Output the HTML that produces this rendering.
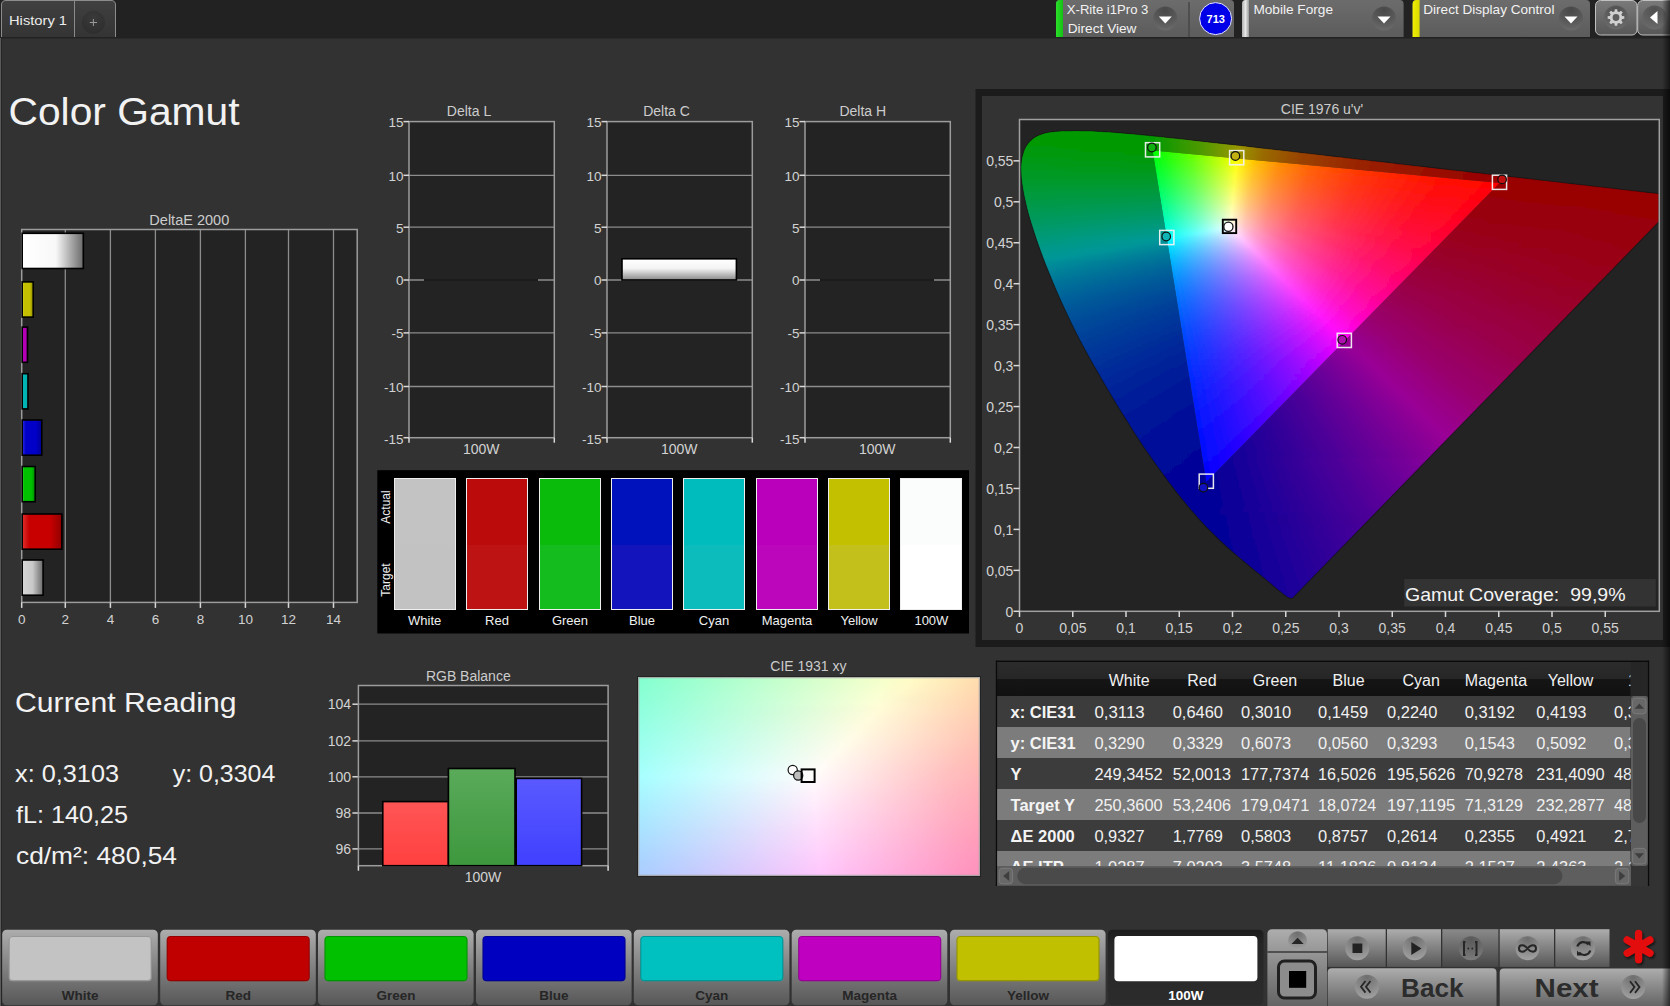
<!DOCTYPE html>
<html><head><meta charset="utf-8"><title>Color Gamut</title>
<style>html,body{margin:0;padding:0;background:#333;overflow:hidden}svg{display:block;font-family:"Liberation Sans", sans-serif}</style></head>
<body><svg width="1670" height="1006" viewBox="0 0 1670 1006">
<defs><linearGradient id="tabg" x1="0" y1="0" x2="0" y2="1"><stop offset="0" stop-color="#404040"/><stop offset="1" stop-color="#343434"/></linearGradient><radialGradient id="plusg" cx="0.5" cy="0.3" r="0.7"><stop offset="0" stop-color="#3a3a3a"/><stop offset="1" stop-color="#2e2e2e"/></radialGradient><linearGradient id="boxg" x1="0" y1="0" x2="0" y2="1"><stop offset="0" stop-color="#6c6c6c"/><stop offset="1" stop-color="#5c5c5c"/></linearGradient><radialGradient id="ddg" cx="0.5" cy="0.15" r="0.9"><stop offset="0" stop-color="#484848"/><stop offset="0.6" stop-color="#5a5a5a"/><stop offset="1" stop-color="#6e6e6e"/></radialGradient><linearGradient id="gbar" x1="0" y1="0" x2="1" y2="0"><stop offset="0" stop-color="#2be02b"/><stop offset="1" stop-color="#14c014"/></linearGradient><linearGradient id="wbar" x1="0" y1="0" x2="1" y2="0"><stop offset="0" stop-color="#b0b0b0"/><stop offset="0.5" stop-color="#e8e8e8"/><stop offset="1" stop-color="#9a9a9a"/></linearGradient><linearGradient id="ybar" x1="0" y1="0" x2="1" y2="0"><stop offset="0" stop-color="#f0f000"/><stop offset="1" stop-color="#d8d800"/></linearGradient><linearGradient id="btng" x1="0" y1="0" x2="0" y2="1"><stop offset="0" stop-color="#7a7a7a"/><stop offset="1" stop-color="#575757"/></linearGradient><radialGradient id="btnc" cx="0.5" cy="0.2" r="0.8"><stop offset="0" stop-color="#505050"/><stop offset="1" stop-color="#6a6a6a"/></radialGradient><linearGradient id="bw" x1="0" y1="0" x2="1" y2="0"><stop offset="0" stop-color="#ffffff"/><stop offset="0.55" stop-color="#f8f8f8"/><stop offset="1" stop-color="#6a6a6a"/></linearGradient><linearGradient id="bw2" x1="0" y1="0" x2="1" y2="0"><stop offset="0" stop-color="#d8d8d8"/><stop offset="0.5" stop-color="#c8c8c8"/><stop offset="1" stop-color="#6a6a6a"/></linearGradient><linearGradient id="by" x1="0" y1="0" x2="1" y2="0"><stop offset="0" stop-color="#d8d830"/><stop offset="0.18" stop-color="#c4c000"/><stop offset="0.7" stop-color="#c4c000"/><stop offset="1" stop-color="#8a8800"/></linearGradient><linearGradient id="bm" x1="0" y1="0" x2="1" y2="0"><stop offset="0" stop-color="#c840c8"/><stop offset="0.18" stop-color="#b400b4"/><stop offset="0.7" stop-color="#b400b4"/><stop offset="1" stop-color="#800080"/></linearGradient><linearGradient id="bc" x1="0" y1="0" x2="1" y2="0"><stop offset="0" stop-color="#40caca"/><stop offset="0.18" stop-color="#00b4b4"/><stop offset="0.7" stop-color="#00b4b4"/><stop offset="1" stop-color="#008a8a"/></linearGradient><linearGradient id="bb" x1="0" y1="0" x2="1" y2="0"><stop offset="0" stop-color="#3030e0"/><stop offset="0.18" stop-color="#0000c8"/><stop offset="0.7" stop-color="#0000c8"/><stop offset="1" stop-color="#000090"/></linearGradient><linearGradient id="bg" x1="0" y1="0" x2="1" y2="0"><stop offset="0" stop-color="#30d830"/><stop offset="0.18" stop-color="#00c000"/><stop offset="0.7" stop-color="#00c000"/><stop offset="1" stop-color="#008c00"/></linearGradient><linearGradient id="br" x1="0" y1="0" x2="1" y2="0"><stop offset="0" stop-color="#e03030"/><stop offset="0.18" stop-color="#c80000"/><stop offset="0.7" stop-color="#c80000"/><stop offset="1" stop-color="#900000"/></linearGradient><linearGradient id="dcb" x1="0" y1="0" x2="0" y2="1"><stop offset="0" stop-color="#ffffff"/><stop offset="0.45" stop-color="#f4f4f4"/><stop offset="1" stop-color="#8a8a8a"/></linearGradient><linearGradient id="rb" x1="0" y1="0" x2="0" y2="1"><stop offset="0" stop-color="#ff5555"/><stop offset="1" stop-color="#ff4040"/></linearGradient><linearGradient id="gb" x1="0" y1="0" x2="0" y2="1"><stop offset="0" stop-color="#5aaa5a"/><stop offset="1" stop-color="#3d983d"/></linearGradient><linearGradient id="bb2" x1="0" y1="0" x2="0" y2="1"><stop offset="0" stop-color="#5a5aff"/><stop offset="1" stop-color="#4040ff"/></linearGradient><clipPath id="horse"><path d="M1293.0,597.7 L1292.8,597.9 L1292.5,598.0 L1292.3,598.1 L1292.0,598.2 L1291.7,598.3 L1291.3,598.3 L1290.9,598.3 L1290.6,598.3 L1290.2,598.2 L1289.9,598.1 L1289.4,598.0 L1289.0,597.8 L1288.5,597.7 L1288.1,597.5 L1287.7,597.2 L1287.2,597.0 L1286.8,596.7 L1286.3,596.4 L1285.9,596.0 L1285.3,595.6 L1284.8,595.2 L1284.2,594.8 L1283.6,594.4 L1283.0,593.9 L1282.3,593.3 L1281.6,592.8 L1280.8,592.1 L1280.0,591.5 L1279.1,590.8 L1278.2,590.0 L1277.2,589.2 L1276.2,588.4 L1275.2,587.5 L1274.1,586.6 L1273.0,585.7 L1271.9,584.7 L1270.7,583.7 L1269.4,582.6 L1268.1,581.5 L1266.8,580.4 L1265.4,579.3 L1264.0,578.1 L1262.5,576.8 L1260.9,575.5 L1259.2,574.1 L1257.4,572.7 L1255.5,571.2 L1253.6,569.6 L1251.6,568.0 L1249.6,566.3 L1247.5,564.6 L1245.4,562.8 L1243.2,561.0 L1240.9,559.1 L1238.5,557.1 L1236.1,555.0 L1233.5,552.7 L1230.9,550.4 L1228.1,548.0 L1225.3,545.5 L1222.4,542.8 L1219.4,540.0 L1216.4,537.0 L1213.3,534.0 L1210.1,530.8 L1206.7,527.5 L1203.2,523.7 L1199.4,519.6 L1195.5,515.1 L1191.3,510.3 L1186.9,505.1 L1182.4,499.6 L1177.7,493.8 L1172.9,487.6 L1168.0,481.2 L1163.0,474.3 L1157.8,467.2 L1152.5,459.7 L1147.1,452.0 L1141.6,443.9 L1136.1,435.5 L1130.5,426.7 L1124.8,417.6 L1119.0,408.4 L1113.3,398.9 L1107.7,389.5 L1102.1,379.9 L1096.4,370.1 L1090.8,360.2 L1085.3,350.2 L1080.0,340.4 L1075.0,330.6 L1070.3,321.0 L1065.7,311.3 L1061.3,301.7 L1057.1,292.2 L1053.2,283.0 L1049.5,274.1 L1046.0,265.5 L1042.8,257.1 L1039.8,249.0 L1037.0,241.1 L1034.5,233.6 L1032.2,226.5 L1030.1,219.8 L1028.3,213.4 L1026.7,207.4 L1025.4,201.6 L1024.2,196.2 L1023.2,191.1 L1022.4,186.3 L1021.8,181.8 L1021.3,177.6 L1021.1,173.7 L1021.0,170.0 L1021.0,166.5 L1021.2,163.1 L1021.6,160.0 L1022.1,157.1 L1022.8,154.4 L1023.5,151.9 L1024.4,149.5 L1025.5,147.3 L1026.7,145.3 L1028.0,143.4 L1029.4,141.7 L1031.0,140.2 L1032.6,138.8 L1034.3,137.5 L1036.1,136.4 L1038.0,135.5 L1040.0,134.7 L1042.0,133.9 L1044.1,133.3 L1046.3,132.7 L1048.5,132.3 L1050.8,132.0 L1053.1,131.7 L1055.5,131.5 L1057.8,131.2 L1060.3,131.1 L1062.7,130.9 L1065.2,130.9 L1067.8,130.8 L1070.3,130.8 L1072.8,130.7 L1075.3,130.7 L1077.8,130.7 L1080.4,130.8 L1082.9,130.8 L1085.4,130.9 L1088.0,130.9 L1090.6,131.0 L1093.2,131.1 L1095.8,131.2 L1098.5,131.4 L1101.2,131.5 L1103.9,131.7 L1106.6,131.9 L1109.4,132.0 L1112.2,132.2 L1115.1,132.5 L1118.0,132.7 L1121.0,132.9 L1123.9,133.2 L1127.0,133.4 L1130.0,133.7 L1133.1,134.0 L1136.3,134.3 L1139.5,134.6 L1142.8,134.9 L1146.1,135.2 L1149.5,135.6 L1152.9,135.9 L1156.4,136.3 L1159.9,136.6 L1163.5,137.0 L1167.2,137.4 L1171.0,137.8 L1174.8,138.2 L1178.6,138.6 L1182.6,139.1 L1186.6,139.5 L1190.6,140.0 L1194.7,140.4 L1198.9,140.9 L1203.2,141.4 L1207.6,141.9 L1212.0,142.4 L1216.5,142.9 L1221.1,143.4 L1225.7,143.9 L1230.5,144.4 L1235.3,145.0 L1240.1,145.5 L1245.1,146.1 L1250.1,146.7 L1255.2,147.3 L1260.4,147.9 L1265.7,148.5 L1271.0,149.1 L1276.5,149.7 L1282.0,150.3 L1287.5,151.0 L1293.2,151.6 L1298.9,152.3 L1304.7,153.0 L1310.6,153.6 L1316.5,154.3 L1322.5,155.0 L1328.6,155.7 L1334.7,156.4 L1340.9,157.1 L1347.1,157.8 L1353.4,158.6 L1359.8,159.3 L1366.2,160.0 L1372.6,160.8 L1379.0,161.5 L1385.5,162.2 L1392.0,163.0 L1398.6,163.8 L1405.1,164.5 L1411.5,165.3 L1417.9,166.0 L1424.2,166.7 L1430.5,167.4 L1436.7,168.2 L1443.0,168.9 L1449.2,169.6 L1455.4,170.3 L1461.6,171.0 L1467.8,171.7 L1474.0,172.4 L1480.0,173.1 L1485.9,173.8 L1491.7,174.5 L1497.4,175.1 L1503.0,175.7 L1508.5,176.4 L1513.9,177.0 L1519.2,177.6 L1524.3,178.2 L1529.4,178.8 L1534.4,179.3 L1539.2,179.9 L1544.0,180.5 L1548.6,181.0 L1553.0,181.5 L1557.4,182.0 L1561.6,182.5 L1565.7,183.0 L1569.7,183.4 L1573.6,183.9 L1577.3,184.3 L1581.0,184.7 L1584.5,185.1 L1587.9,185.5 L1591.3,185.9 L1594.5,186.3 L1597.7,186.6 L1600.7,187.0 L1603.7,187.3 L1606.6,187.6 L1609.4,188.0 L1612.2,188.3 L1614.9,188.6 L1617.5,188.9 L1620.1,189.2 L1622.6,189.5 L1625.1,189.8 L1627.5,190.1 L1629.8,190.3 L1632.1,190.6 L1634.3,190.8 L1636.4,191.1 L1638.4,191.3 L1640.4,191.6 L1642.3,191.8 L1644.2,192.0 L1646.0,192.2 L1647.7,192.4 L1649.3,192.6 L1650.9,192.7 L1652.4,192.9 L1653.7,193.1 L1654.9,193.2 L1656.2,193.3 L1657.5,193.5 L1659.0,193.7 L1660.7,193.9 L1662.6,194.1 L1664.5,194.3 L1666.4,194.5 L1668.3,194.7 L1670.1,194.9 L1671.8,195.1 L1673.6,195.4 L1675.3,195.6 L1677.0,195.7 L1678.4,195.9 L1679.7,196.1 L1680.7,196.2 L1681.5,196.3 L1682.2,196.3 L1682.7,196.4 L1683.1,196.4 L1683.4,196.5 Z"/></clipPath><clipPath id="tri"><path d="M1499.50,183.06 L1152.62,150.61 L1206.34,481.98 Z"/></clipPath><clipPath id="outside"><path clip-rule="evenodd" d="M1293.0,597.7 L1292.8,597.9 L1292.5,598.0 L1292.3,598.1 L1292.0,598.2 L1291.7,598.3 L1291.3,598.3 L1290.9,598.3 L1290.6,598.3 L1290.2,598.2 L1289.9,598.1 L1289.4,598.0 L1289.0,597.8 L1288.5,597.7 L1288.1,597.5 L1287.7,597.2 L1287.2,597.0 L1286.8,596.7 L1286.3,596.4 L1285.9,596.0 L1285.3,595.6 L1284.8,595.2 L1284.2,594.8 L1283.6,594.4 L1283.0,593.9 L1282.3,593.3 L1281.6,592.8 L1280.8,592.1 L1280.0,591.5 L1279.1,590.8 L1278.2,590.0 L1277.2,589.2 L1276.2,588.4 L1275.2,587.5 L1274.1,586.6 L1273.0,585.7 L1271.9,584.7 L1270.7,583.7 L1269.4,582.6 L1268.1,581.5 L1266.8,580.4 L1265.4,579.3 L1264.0,578.1 L1262.5,576.8 L1260.9,575.5 L1259.2,574.1 L1257.4,572.7 L1255.5,571.2 L1253.6,569.6 L1251.6,568.0 L1249.6,566.3 L1247.5,564.6 L1245.4,562.8 L1243.2,561.0 L1240.9,559.1 L1238.5,557.1 L1236.1,555.0 L1233.5,552.7 L1230.9,550.4 L1228.1,548.0 L1225.3,545.5 L1222.4,542.8 L1219.4,540.0 L1216.4,537.0 L1213.3,534.0 L1210.1,530.8 L1206.7,527.5 L1203.2,523.7 L1199.4,519.6 L1195.5,515.1 L1191.3,510.3 L1186.9,505.1 L1182.4,499.6 L1177.7,493.8 L1172.9,487.6 L1168.0,481.2 L1163.0,474.3 L1157.8,467.2 L1152.5,459.7 L1147.1,452.0 L1141.6,443.9 L1136.1,435.5 L1130.5,426.7 L1124.8,417.6 L1119.0,408.4 L1113.3,398.9 L1107.7,389.5 L1102.1,379.9 L1096.4,370.1 L1090.8,360.2 L1085.3,350.2 L1080.0,340.4 L1075.0,330.6 L1070.3,321.0 L1065.7,311.3 L1061.3,301.7 L1057.1,292.2 L1053.2,283.0 L1049.5,274.1 L1046.0,265.5 L1042.8,257.1 L1039.8,249.0 L1037.0,241.1 L1034.5,233.6 L1032.2,226.5 L1030.1,219.8 L1028.3,213.4 L1026.7,207.4 L1025.4,201.6 L1024.2,196.2 L1023.2,191.1 L1022.4,186.3 L1021.8,181.8 L1021.3,177.6 L1021.1,173.7 L1021.0,170.0 L1021.0,166.5 L1021.2,163.1 L1021.6,160.0 L1022.1,157.1 L1022.8,154.4 L1023.5,151.9 L1024.4,149.5 L1025.5,147.3 L1026.7,145.3 L1028.0,143.4 L1029.4,141.7 L1031.0,140.2 L1032.6,138.8 L1034.3,137.5 L1036.1,136.4 L1038.0,135.5 L1040.0,134.7 L1042.0,133.9 L1044.1,133.3 L1046.3,132.7 L1048.5,132.3 L1050.8,132.0 L1053.1,131.7 L1055.5,131.5 L1057.8,131.2 L1060.3,131.1 L1062.7,130.9 L1065.2,130.9 L1067.8,130.8 L1070.3,130.8 L1072.8,130.7 L1075.3,130.7 L1077.8,130.7 L1080.4,130.8 L1082.9,130.8 L1085.4,130.9 L1088.0,130.9 L1090.6,131.0 L1093.2,131.1 L1095.8,131.2 L1098.5,131.4 L1101.2,131.5 L1103.9,131.7 L1106.6,131.9 L1109.4,132.0 L1112.2,132.2 L1115.1,132.5 L1118.0,132.7 L1121.0,132.9 L1123.9,133.2 L1127.0,133.4 L1130.0,133.7 L1133.1,134.0 L1136.3,134.3 L1139.5,134.6 L1142.8,134.9 L1146.1,135.2 L1149.5,135.6 L1152.9,135.9 L1156.4,136.3 L1159.9,136.6 L1163.5,137.0 L1167.2,137.4 L1171.0,137.8 L1174.8,138.2 L1178.6,138.6 L1182.6,139.1 L1186.6,139.5 L1190.6,140.0 L1194.7,140.4 L1198.9,140.9 L1203.2,141.4 L1207.6,141.9 L1212.0,142.4 L1216.5,142.9 L1221.1,143.4 L1225.7,143.9 L1230.5,144.4 L1235.3,145.0 L1240.1,145.5 L1245.1,146.1 L1250.1,146.7 L1255.2,147.3 L1260.4,147.9 L1265.7,148.5 L1271.0,149.1 L1276.5,149.7 L1282.0,150.3 L1287.5,151.0 L1293.2,151.6 L1298.9,152.3 L1304.7,153.0 L1310.6,153.6 L1316.5,154.3 L1322.5,155.0 L1328.6,155.7 L1334.7,156.4 L1340.9,157.1 L1347.1,157.8 L1353.4,158.6 L1359.8,159.3 L1366.2,160.0 L1372.6,160.8 L1379.0,161.5 L1385.5,162.2 L1392.0,163.0 L1398.6,163.8 L1405.1,164.5 L1411.5,165.3 L1417.9,166.0 L1424.2,166.7 L1430.5,167.4 L1436.7,168.2 L1443.0,168.9 L1449.2,169.6 L1455.4,170.3 L1461.6,171.0 L1467.8,171.7 L1474.0,172.4 L1480.0,173.1 L1485.9,173.8 L1491.7,174.5 L1497.4,175.1 L1503.0,175.7 L1508.5,176.4 L1513.9,177.0 L1519.2,177.6 L1524.3,178.2 L1529.4,178.8 L1534.4,179.3 L1539.2,179.9 L1544.0,180.5 L1548.6,181.0 L1553.0,181.5 L1557.4,182.0 L1561.6,182.5 L1565.7,183.0 L1569.7,183.4 L1573.6,183.9 L1577.3,184.3 L1581.0,184.7 L1584.5,185.1 L1587.9,185.5 L1591.3,185.9 L1594.5,186.3 L1597.7,186.6 L1600.7,187.0 L1603.7,187.3 L1606.6,187.6 L1609.4,188.0 L1612.2,188.3 L1614.9,188.6 L1617.5,188.9 L1620.1,189.2 L1622.6,189.5 L1625.1,189.8 L1627.5,190.1 L1629.8,190.3 L1632.1,190.6 L1634.3,190.8 L1636.4,191.1 L1638.4,191.3 L1640.4,191.6 L1642.3,191.8 L1644.2,192.0 L1646.0,192.2 L1647.7,192.4 L1649.3,192.6 L1650.9,192.7 L1652.4,192.9 L1653.7,193.1 L1654.9,193.2 L1656.2,193.3 L1657.5,193.5 L1659.0,193.7 L1660.7,193.9 L1662.6,194.1 L1664.5,194.3 L1666.4,194.5 L1668.3,194.7 L1670.1,194.9 L1671.8,195.1 L1673.6,195.4 L1675.3,195.6 L1677.0,195.7 L1678.4,195.9 L1679.7,196.1 L1680.7,196.2 L1681.5,196.3 L1682.2,196.3 L1682.7,196.4 L1683.1,196.4 L1683.4,196.5 Z M1499.50,183.06 L1152.62,150.61 L1206.34,481.98 Z"/></clipPath><clipPath id="plotclip"><rect x="1020.2" y="120.2" width="638.4" height="490.4"/></clipPath><linearGradient id="ci0" gradientUnits="userSpaceOnUse" x1="1140.0" y1="0" x2="1510.0" y2="0"><stop offset="0.0000" stop-color="#00ff08"/><stop offset="0.0162" stop-color="#06ff00"/><stop offset="0.1568" stop-color="#88ff00"/><stop offset="0.2676" stop-color="#fffd00"/><stop offset="0.3270" stop-color="#ffc500"/><stop offset="0.4108" stop-color="#ff9200"/><stop offset="0.5324" stop-color="#ff6500"/><stop offset="0.7189" stop-color="#ff3e00"/><stop offset="1.0000" stop-color="#ff1f00"/></linearGradient><linearGradient id="ci1" gradientUnits="userSpaceOnUse" x1="1140.0" y1="0" x2="1510.0" y2="0"><stop offset="0.0000" stop-color="#00ff0e"/><stop offset="0.0216" stop-color="#04ff00"/><stop offset="0.1568" stop-color="#85ff00"/><stop offset="0.2649" stop-color="#ffff00"/><stop offset="0.3216" stop-color="#ffc700"/><stop offset="0.4000" stop-color="#ff9400"/><stop offset="0.5135" stop-color="#ff6800"/><stop offset="0.6892" stop-color="#ff4000"/><stop offset="0.9784" stop-color="#ff1f00"/><stop offset="1.0000" stop-color="#ff1d00"/></linearGradient><linearGradient id="ci2" gradientUnits="userSpaceOnUse" x1="1140.0" y1="0" x2="1510.0" y2="0"><stop offset="0.0000" stop-color="#00ff15"/><stop offset="0.0270" stop-color="#01ff00"/><stop offset="0.1595" stop-color="#84ff00"/><stop offset="0.2649" stop-color="#fffe00"/><stop offset="0.3189" stop-color="#ffc700"/><stop offset="0.3946" stop-color="#ff9400"/><stop offset="0.5054" stop-color="#ff6700"/><stop offset="0.6757" stop-color="#ff4000"/><stop offset="0.9568" stop-color="#ff1e00"/><stop offset="1.0000" stop-color="#ff1b00"/></linearGradient><linearGradient id="ci3" gradientUnits="userSpaceOnUse" x1="1140.0" y1="0" x2="1510.0" y2="0"><stop offset="0.0000" stop-color="#00ff1c"/><stop offset="0.0351" stop-color="#01ff00"/><stop offset="0.1622" stop-color="#84ff00"/><stop offset="0.2649" stop-color="#fffd00"/><stop offset="0.3189" stop-color="#ffc400"/><stop offset="0.3919" stop-color="#ff9300"/><stop offset="0.5000" stop-color="#ff6600"/><stop offset="0.6649" stop-color="#ff3f00"/><stop offset="0.9378" stop-color="#ff1e00"/><stop offset="1.0000" stop-color="#ff1900"/></linearGradient><linearGradient id="ci4" gradientUnits="userSpaceOnUse" x1="1140.0" y1="0" x2="1510.0" y2="0"><stop offset="0.0000" stop-color="#00ff22"/><stop offset="0.0378" stop-color="#02ff06"/><stop offset="0.1351" stop-color="#61ff00"/><stop offset="0.2459" stop-color="#e8ff00"/><stop offset="0.2649" stop-color="#fffc00"/><stop offset="0.3162" stop-color="#ffc400"/><stop offset="0.3865" stop-color="#ff9200"/><stop offset="0.4892" stop-color="#ff6600"/><stop offset="0.6486" stop-color="#ff3f00"/><stop offset="0.9108" stop-color="#ff1e00"/><stop offset="1.0000" stop-color="#ff1600"/></linearGradient><linearGradient id="ci5" gradientUnits="userSpaceOnUse" x1="1140.0" y1="0" x2="1510.0" y2="0"><stop offset="0.0000" stop-color="#00ff29"/><stop offset="0.0405" stop-color="#03ff0d"/><stop offset="0.1459" stop-color="#6cff05"/><stop offset="0.2324" stop-color="#d6ff00"/><stop offset="0.2622" stop-color="#ffff00"/><stop offset="0.3108" stop-color="#ffc600"/><stop offset="0.3784" stop-color="#ff9400"/><stop offset="0.4757" stop-color="#ff6700"/><stop offset="0.6270" stop-color="#ff4000"/><stop offset="0.8757" stop-color="#ff1e00"/><stop offset="1.0000" stop-color="#ff1400"/></linearGradient><linearGradient id="ci6" gradientUnits="userSpaceOnUse" x1="1140.0" y1="0" x2="1510.0" y2="0"><stop offset="0.0000" stop-color="#00ff30"/><stop offset="0.0405" stop-color="#02ff13"/><stop offset="0.1459" stop-color="#6bff0d"/><stop offset="0.2351" stop-color="#daff05"/><stop offset="0.2622" stop-color="#fffd03"/><stop offset="0.3081" stop-color="#ffc600"/><stop offset="0.3730" stop-color="#ff9400"/><stop offset="0.4676" stop-color="#ff6700"/><stop offset="0.6135" stop-color="#ff3f00"/><stop offset="0.8541" stop-color="#ff1e00"/><stop offset="1.0000" stop-color="#ff1200"/></linearGradient><linearGradient id="ci7" gradientUnits="userSpaceOnUse" x1="1140.0" y1="0" x2="1510.0" y2="0"><stop offset="0.0000" stop-color="#00ff37"/><stop offset="0.0405" stop-color="#01ff1a"/><stop offset="0.1459" stop-color="#6bff14"/><stop offset="0.2351" stop-color="#dbff0e"/><stop offset="0.2622" stop-color="#fffc0c"/><stop offset="0.3108" stop-color="#ffc205"/><stop offset="0.3784" stop-color="#ff8d00"/><stop offset="0.4730" stop-color="#ff6100"/><stop offset="0.6189" stop-color="#ff3b00"/><stop offset="0.8649" stop-color="#ff1a00"/><stop offset="1.0000" stop-color="#ff1000"/></linearGradient><linearGradient id="ci8" gradientUnits="userSpaceOnUse" x1="1140.0" y1="0" x2="1510.0" y2="0"><stop offset="0.0000" stop-color="#00ff3e"/><stop offset="0.0432" stop-color="#02ff21"/><stop offset="0.1459" stop-color="#6bff1c"/><stop offset="0.2324" stop-color="#d8ff17"/><stop offset="0.2595" stop-color="#ffff15"/><stop offset="0.3081" stop-color="#ffc30d"/><stop offset="0.3730" stop-color="#ff8f06"/><stop offset="0.4649" stop-color="#ff6000"/><stop offset="0.6081" stop-color="#ff3a00"/><stop offset="0.8459" stop-color="#ff1900"/><stop offset="1.0000" stop-color="#ff0d00"/></linearGradient><linearGradient id="ci9" gradientUnits="userSpaceOnUse" x1="1140.0" y1="0" x2="1510.0" y2="0"><stop offset="0.0000" stop-color="#00ff45"/><stop offset="0.0432" stop-color="#01ff28"/><stop offset="0.1459" stop-color="#6aff24"/><stop offset="0.2324" stop-color="#d8ff20"/><stop offset="0.2595" stop-color="#fffe1e"/><stop offset="0.3054" stop-color="#ffc515"/><stop offset="0.3703" stop-color="#ff8f0c"/><stop offset="0.4622" stop-color="#ff6005"/><stop offset="0.5838" stop-color="#ff3b00"/><stop offset="0.8054" stop-color="#ff1a00"/><stop offset="1.0000" stop-color="#ff0b00"/></linearGradient><linearGradient id="ci10" gradientUnits="userSpaceOnUse" x1="1140.0" y1="0" x2="1510.0" y2="0"><stop offset="0.0000" stop-color="#00ff4c"/><stop offset="0.0459" stop-color="#02ff30"/><stop offset="0.1459" stop-color="#6aff2c"/><stop offset="0.2324" stop-color="#d9ff29"/><stop offset="0.2595" stop-color="#fffd27"/><stop offset="0.3054" stop-color="#ffc41c"/><stop offset="0.3703" stop-color="#ff8e12"/><stop offset="0.4622" stop-color="#ff5f09"/><stop offset="0.6000" stop-color="#ff3502"/><stop offset="0.7973" stop-color="#ff1800"/><stop offset="1.0000" stop-color="#ff0800"/></linearGradient><linearGradient id="ci11" gradientUnits="userSpaceOnUse" x1="1140.0" y1="0" x2="1510.0" y2="0"><stop offset="0.0000" stop-color="#00ff53"/><stop offset="0.0459" stop-color="#01ff37"/><stop offset="0.1459" stop-color="#6aff34"/><stop offset="0.2297" stop-color="#d6ff32"/><stop offset="0.2568" stop-color="#feff31"/><stop offset="0.3054" stop-color="#ffc224"/><stop offset="0.3703" stop-color="#ff8d18"/><stop offset="0.4622" stop-color="#ff5e0e"/><stop offset="0.6000" stop-color="#ff3405"/><stop offset="0.7811" stop-color="#ff1700"/><stop offset="1.0000" stop-color="#ff0600"/></linearGradient><linearGradient id="ci12" gradientUnits="userSpaceOnUse" x1="1140.0" y1="0" x2="1510.0" y2="0"><stop offset="0.0000" stop-color="#00ff5a"/><stop offset="0.0486" stop-color="#03ff3f"/><stop offset="0.1486" stop-color="#6cff3d"/><stop offset="0.2324" stop-color="#dbff3b"/><stop offset="0.2568" stop-color="#ffff3a"/><stop offset="0.3027" stop-color="#ffc42c"/><stop offset="0.3649" stop-color="#ff8f1f"/><stop offset="0.4541" stop-color="#ff6013"/><stop offset="0.5865" stop-color="#ff3609"/><stop offset="0.7973" stop-color="#ff1300"/><stop offset="1.0000" stop-color="#ff0300"/></linearGradient><linearGradient id="ci13" gradientUnits="userSpaceOnUse" x1="1140.0" y1="0" x2="1510.0" y2="0"><stop offset="0.0000" stop-color="#00ff61"/><stop offset="0.0486" stop-color="#01ff46"/><stop offset="0.1459" stop-color="#69ff46"/><stop offset="0.2297" stop-color="#d7ff45"/><stop offset="0.2568" stop-color="#fffd44"/><stop offset="0.3027" stop-color="#ffc334"/><stop offset="0.3649" stop-color="#ff8e25"/><stop offset="0.4541" stop-color="#ff5f18"/><stop offset="0.5865" stop-color="#ff360d"/><stop offset="0.8000" stop-color="#ff1103"/><stop offset="1.0000" stop-color="#ff0100"/></linearGradient><linearGradient id="ci14" gradientUnits="userSpaceOnUse" x1="1140.0" y1="0" x2="1510.0" y2="0"><stop offset="0.0000" stop-color="#00ff68"/><stop offset="0.0514" stop-color="#03ff4e"/><stop offset="0.1486" stop-color="#6cff4e"/><stop offset="0.2297" stop-color="#d8ff4e"/><stop offset="0.2568" stop-color="#fffc4e"/><stop offset="0.3027" stop-color="#ffc13c"/><stop offset="0.3649" stop-color="#ff8d2c"/><stop offset="0.4541" stop-color="#ff5e1d"/><stop offset="0.5865" stop-color="#ff3510"/><stop offset="0.8000" stop-color="#ff1105"/><stop offset="1.0000" stop-color="#ff0002"/></linearGradient><linearGradient id="ci15" gradientUnits="userSpaceOnUse" x1="1140.0" y1="0" x2="1510.0" y2="0"><stop offset="0.0000" stop-color="#00ff6f"/><stop offset="0.0514" stop-color="#01ff56"/><stop offset="0.1486" stop-color="#6bff57"/><stop offset="0.2297" stop-color="#d9ff58"/><stop offset="0.2541" stop-color="#ffff59"/><stop offset="0.3000" stop-color="#ffc344"/><stop offset="0.3622" stop-color="#ff8d32"/><stop offset="0.4514" stop-color="#ff5e22"/><stop offset="0.5838" stop-color="#ff3414"/><stop offset="0.7946" stop-color="#ff1108"/><stop offset="0.9973" stop-color="#ff0004"/><stop offset="1.0000" stop-color="#ff0004"/></linearGradient><linearGradient id="ci16" gradientUnits="userSpaceOnUse" x1="1140.0" y1="0" x2="1510.0" y2="0"><stop offset="0.0000" stop-color="#00ff77"/><stop offset="0.0541" stop-color="#03ff5e"/><stop offset="0.1486" stop-color="#6bff60"/><stop offset="0.2297" stop-color="#daff63"/><stop offset="0.2541" stop-color="#fffe63"/><stop offset="0.2973" stop-color="#ffc54e"/><stop offset="0.3568" stop-color="#ff903a"/><stop offset="0.4432" stop-color="#ff6028"/><stop offset="0.5703" stop-color="#ff3619"/><stop offset="0.7730" stop-color="#ff130c"/><stop offset="0.9892" stop-color="#ff0007"/><stop offset="1.0000" stop-color="#ff0007"/></linearGradient><linearGradient id="ci17" gradientUnits="userSpaceOnUse" x1="1140.0" y1="0" x2="1510.0" y2="0"><stop offset="0.0000" stop-color="#00ff7e"/><stop offset="0.0541" stop-color="#02ff67"/><stop offset="0.1486" stop-color="#6aff6a"/><stop offset="0.2297" stop-color="#daff6d"/><stop offset="0.2541" stop-color="#fffd6d"/><stop offset="0.2973" stop-color="#ffc356"/><stop offset="0.3568" stop-color="#ff8f41"/><stop offset="0.4432" stop-color="#ff5f2e"/><stop offset="0.5703" stop-color="#ff361d"/><stop offset="0.7730" stop-color="#ff120f"/><stop offset="0.9811" stop-color="#ff0009"/><stop offset="1.0000" stop-color="#ff000a"/></linearGradient><linearGradient id="ci18" gradientUnits="userSpaceOnUse" x1="1140.0" y1="0" x2="1510.0" y2="0"><stop offset="0.0000" stop-color="#00ff85"/><stop offset="0.0568" stop-color="#03ff6f"/><stop offset="0.1486" stop-color="#6aff73"/><stop offset="0.2270" stop-color="#d7ff77"/><stop offset="0.2514" stop-color="#feff79"/><stop offset="0.2973" stop-color="#ffc25e"/><stop offset="0.3568" stop-color="#ff8d47"/><stop offset="0.4432" stop-color="#ff5e33"/><stop offset="0.5730" stop-color="#ff3420"/><stop offset="0.7784" stop-color="#ff1011"/><stop offset="0.9730" stop-color="#ff000b"/><stop offset="1.0000" stop-color="#ff000c"/></linearGradient><linearGradient id="ci19" gradientUnits="userSpaceOnUse" x1="1140.0" y1="0" x2="1510.0" y2="0"><stop offset="0.0000" stop-color="#00ff8d"/><stop offset="0.0568" stop-color="#02ff78"/><stop offset="0.1486" stop-color="#6aff7d"/><stop offset="0.2270" stop-color="#d8ff82"/><stop offset="0.2514" stop-color="#ffff84"/><stop offset="0.2946" stop-color="#ffc368"/><stop offset="0.3541" stop-color="#ff8e4f"/><stop offset="0.4378" stop-color="#ff5f39"/><stop offset="0.5622" stop-color="#ff3625"/><stop offset="0.7622" stop-color="#ff1215"/><stop offset="0.9649" stop-color="#ff000e"/><stop offset="1.0000" stop-color="#ff000f"/></linearGradient><linearGradient id="ci20" gradientUnits="userSpaceOnUse" x1="1140.0" y1="0" x2="1510.0" y2="0"><stop offset="0.0000" stop-color="#00ff94"/><stop offset="0.0595" stop-color="#03ff81"/><stop offset="0.1514" stop-color="#6dff87"/><stop offset="0.2270" stop-color="#d9ff8d"/><stop offset="0.2514" stop-color="#fffd8f"/><stop offset="0.2946" stop-color="#ffc271"/><stop offset="0.3541" stop-color="#ff8d56"/><stop offset="0.4378" stop-color="#ff5e3e"/><stop offset="0.5649" stop-color="#ff3429"/><stop offset="0.7676" stop-color="#ff1017"/><stop offset="0.9568" stop-color="#ff0010"/><stop offset="1.0000" stop-color="#ff0011"/></linearGradient><linearGradient id="ci21" gradientUnits="userSpaceOnUse" x1="1140.0" y1="0" x2="1510.0" y2="0"><stop offset="0.0000" stop-color="#00ff9c"/><stop offset="0.0595" stop-color="#02ff8a"/><stop offset="0.1486" stop-color="#69ff91"/><stop offset="0.2243" stop-color="#d5ff98"/><stop offset="0.2514" stop-color="#fffc9a"/><stop offset="0.2946" stop-color="#ffc17a"/><stop offset="0.3541" stop-color="#ff8b5d"/><stop offset="0.4378" stop-color="#ff5c43"/><stop offset="0.5649" stop-color="#ff332d"/><stop offset="0.7676" stop-color="#ff0f1a"/><stop offset="0.9486" stop-color="#ff0013"/><stop offset="1.0000" stop-color="#ff0014"/></linearGradient><linearGradient id="ci22" gradientUnits="userSpaceOnUse" x1="1140.0" y1="0" x2="1510.0" y2="0"><stop offset="0.0000" stop-color="#00ffa3"/><stop offset="0.0622" stop-color="#03ff93"/><stop offset="0.1514" stop-color="#6cff9c"/><stop offset="0.2270" stop-color="#daffa4"/><stop offset="0.2486" stop-color="#ffffa7"/><stop offset="0.2919" stop-color="#ffc284"/><stop offset="0.3486" stop-color="#ff8e66"/><stop offset="0.4297" stop-color="#ff5f4b"/><stop offset="0.5514" stop-color="#ff3533"/><stop offset="0.7459" stop-color="#ff111e"/><stop offset="0.9405" stop-color="#ff0015"/><stop offset="1.0000" stop-color="#ff0017"/></linearGradient><linearGradient id="ci23" gradientUnits="userSpaceOnUse" x1="1140.0" y1="0" x2="1510.0" y2="0"><stop offset="0.0000" stop-color="#00ffab"/><stop offset="0.0622" stop-color="#02ff9d"/><stop offset="0.1514" stop-color="#6cffa6"/><stop offset="0.2270" stop-color="#dbffb0"/><stop offset="0.2486" stop-color="#fffeb3"/><stop offset="0.2892" stop-color="#ffc48f"/><stop offset="0.3459" stop-color="#ff8e6e"/><stop offset="0.4270" stop-color="#ff5f51"/><stop offset="0.5486" stop-color="#ff3537"/><stop offset="0.7405" stop-color="#ff1121"/><stop offset="0.9324" stop-color="#ff0018"/><stop offset="1.0000" stop-color="#ff0019"/></linearGradient><linearGradient id="ci24" gradientUnits="userSpaceOnUse" x1="1140.0" y1="0" x2="1510.0" y2="0"><stop offset="0.0000" stop-color="#00ffb2"/><stop offset="0.0622" stop-color="#01ffa6"/><stop offset="0.1486" stop-color="#68ffb1"/><stop offset="0.2216" stop-color="#d3ffbb"/><stop offset="0.2486" stop-color="#fffdbe"/><stop offset="0.2892" stop-color="#ffc399"/><stop offset="0.3459" stop-color="#ff8d76"/><stop offset="0.4270" stop-color="#ff5d57"/><stop offset="0.5486" stop-color="#ff343b"/><stop offset="0.7432" stop-color="#ff1024"/><stop offset="0.9243" stop-color="#ff001a"/><stop offset="1.0000" stop-color="#ff001c"/></linearGradient><linearGradient id="ci25" gradientUnits="userSpaceOnUse" x1="1140.0" y1="0" x2="1510.0" y2="0"><stop offset="0.0000" stop-color="#00ffba"/><stop offset="0.0649" stop-color="#02ffb0"/><stop offset="0.1514" stop-color="#6bffbc"/><stop offset="0.2243" stop-color="#d8ffc8"/><stop offset="0.2459" stop-color="#feffcc"/><stop offset="0.2892" stop-color="#ffc1a2"/><stop offset="0.3459" stop-color="#ff8c7d"/><stop offset="0.4270" stop-color="#ff5c5c"/><stop offset="0.5486" stop-color="#ff3340"/><stop offset="0.7432" stop-color="#ff0f27"/><stop offset="0.9162" stop-color="#ff001d"/><stop offset="1.0000" stop-color="#ff001e"/></linearGradient><linearGradient id="ci26" gradientUnits="userSpaceOnUse" x1="1140.0" y1="0" x2="1510.0" y2="0"><stop offset="0.0000" stop-color="#00ffc2"/><stop offset="0.0649" stop-color="#01ffba"/><stop offset="0.1514" stop-color="#6affc7"/><stop offset="0.2243" stop-color="#d9ffd5"/><stop offset="0.2459" stop-color="#ffffda"/><stop offset="0.2838" stop-color="#ffc6b0"/><stop offset="0.3378" stop-color="#ff9189"/><stop offset="0.4135" stop-color="#ff6166"/><stop offset="0.5270" stop-color="#ff3748"/><stop offset="0.7081" stop-color="#ff132d"/><stop offset="0.9054" stop-color="#ff0020"/><stop offset="1.0000" stop-color="#ff0021"/></linearGradient><linearGradient id="ci27" gradientUnits="userSpaceOnUse" x1="1140.0" y1="0" x2="1510.0" y2="0"><stop offset="0.0000" stop-color="#00ffc9"/><stop offset="0.0676" stop-color="#02ffc5"/><stop offset="0.1514" stop-color="#6affd3"/><stop offset="0.2216" stop-color="#d6ffe1"/><stop offset="0.2459" stop-color="#fffde6"/><stop offset="0.2838" stop-color="#ffc5ba"/><stop offset="0.3378" stop-color="#ff8f91"/><stop offset="0.4135" stop-color="#ff606c"/><stop offset="0.5270" stop-color="#ff364c"/><stop offset="0.7081" stop-color="#ff1231"/><stop offset="0.8973" stop-color="#ff0023"/><stop offset="1.0000" stop-color="#ff0023"/></linearGradient><linearGradient id="ci28" gradientUnits="userSpaceOnUse" x1="1140.0" y1="0" x2="1510.0" y2="0"><stop offset="0.0000" stop-color="#00ffd1"/><stop offset="0.0676" stop-color="#01ffcf"/><stop offset="0.1514" stop-color="#69ffdf"/><stop offset="0.2216" stop-color="#d6ffef"/><stop offset="0.2459" stop-color="#fffcf2"/><stop offset="0.2838" stop-color="#ffc3c4"/><stop offset="0.3378" stop-color="#ff8e99"/><stop offset="0.4135" stop-color="#ff5f72"/><stop offset="0.5270" stop-color="#ff3551"/><stop offset="0.7081" stop-color="#ff1134"/><stop offset="0.8892" stop-color="#ff0026"/><stop offset="1.0000" stop-color="#ff0026"/></linearGradient><linearGradient id="ci29" gradientUnits="userSpaceOnUse" x1="1140.0" y1="0" x2="1510.0" y2="0"><stop offset="0.0000" stop-color="#00ffd9"/><stop offset="0.0703" stop-color="#02ffda"/><stop offset="0.1514" stop-color="#69ffeb"/><stop offset="0.2216" stop-color="#d7fffc"/><stop offset="0.2459" stop-color="#fffbff"/><stop offset="0.2838" stop-color="#ffc2ce"/><stop offset="0.3378" stop-color="#ff8ca0"/><stop offset="0.4135" stop-color="#ff5d78"/><stop offset="0.5270" stop-color="#ff3455"/><stop offset="0.7081" stop-color="#ff1037"/><stop offset="0.8811" stop-color="#ff0029"/><stop offset="1.0000" stop-color="#ff0028"/></linearGradient><linearGradient id="ci30" gradientUnits="userSpaceOnUse" x1="1140.0" y1="0" x2="1510.0" y2="0"><stop offset="0.0000" stop-color="#00ffe1"/><stop offset="0.0703" stop-color="#01ffe5"/><stop offset="0.1514" stop-color="#68fff7"/><stop offset="0.2000" stop-color="#b0faff"/><stop offset="0.2541" stop-color="#ffebff"/><stop offset="0.2946" stop-color="#ffb3cd"/><stop offset="0.3514" stop-color="#ff809f"/><stop offset="0.4324" stop-color="#ff5377"/><stop offset="0.5568" stop-color="#ff2b53"/><stop offset="0.7595" stop-color="#ff0934"/><stop offset="0.8838" stop-color="#ff002c"/><stop offset="1.0000" stop-color="#ff002b"/></linearGradient><linearGradient id="ci31" gradientUnits="userSpaceOnUse" x1="1140.0" y1="0" x2="1510.0" y2="0"><stop offset="0.0000" stop-color="#00ffe9"/><stop offset="0.0730" stop-color="#02fff1"/><stop offset="0.1486" stop-color="#63fbff"/><stop offset="0.2622" stop-color="#ffdcff"/><stop offset="0.3054" stop-color="#ffa6cc"/><stop offset="0.3676" stop-color="#ff749d"/><stop offset="0.4568" stop-color="#ff4873"/><stop offset="0.5946" stop-color="#ff224f"/><stop offset="0.8243" stop-color="#ff0130"/><stop offset="1.0000" stop-color="#ff002e"/></linearGradient><linearGradient id="ci32" gradientUnits="userSpaceOnUse" x1="1140.0" y1="0" x2="1510.0" y2="0"><stop offset="0.0000" stop-color="#00fff1"/><stop offset="0.0730" stop-color="#01fffc"/><stop offset="0.2216" stop-color="#bcdcff"/><stop offset="0.2703" stop-color="#ffcfff"/><stop offset="0.3162" stop-color="#ff9acb"/><stop offset="0.3811" stop-color="#ff6a9c"/><stop offset="0.4784" stop-color="#ff3f71"/><stop offset="0.6297" stop-color="#ff1a4c"/><stop offset="0.8432" stop-color="#ff0032"/><stop offset="1.0000" stop-color="#ff0030"/></linearGradient><linearGradient id="ci33" gradientUnits="userSpaceOnUse" x1="1140.0" y1="0" x2="1510.0" y2="0"><stop offset="0.0000" stop-color="#00fff9"/><stop offset="0.0595" stop-color="#00faff"/><stop offset="0.0757" stop-color="#02f6ff"/><stop offset="0.2297" stop-color="#becfff"/><stop offset="0.2784" stop-color="#ffc2ff"/><stop offset="0.3270" stop-color="#ff8fca"/><stop offset="0.3973" stop-color="#ff6099"/><stop offset="0.5000" stop-color="#ff376f"/><stop offset="0.6622" stop-color="#ff144a"/><stop offset="0.8459" stop-color="#ff0035"/><stop offset="1.0000" stop-color="#ff0033"/></linearGradient><linearGradient id="ci34" gradientUnits="userSpaceOnUse" x1="1140.0" y1="0" x2="1510.0" y2="0"><stop offset="0.0000" stop-color="#00fdff"/><stop offset="0.0757" stop-color="#01ebff"/><stop offset="0.2351" stop-color="#bdc4ff"/><stop offset="0.2865" stop-color="#ffb6ff"/><stop offset="0.3378" stop-color="#ff85c9"/><stop offset="0.4108" stop-color="#ff5899"/><stop offset="0.5189" stop-color="#ff306e"/><stop offset="0.6892" stop-color="#ff0f49"/><stop offset="0.8405" stop-color="#ff0039"/><stop offset="1.0000" stop-color="#ff0035"/></linearGradient><linearGradient id="ci35" gradientUnits="userSpaceOnUse" x1="1140.0" y1="0" x2="1510.0" y2="0"><stop offset="0.0000" stop-color="#00f5ff"/><stop offset="0.0784" stop-color="#02e1ff"/><stop offset="0.2432" stop-color="#bfb9ff"/><stop offset="0.2946" stop-color="#ffabff"/><stop offset="0.3486" stop-color="#ff7bc8"/><stop offset="0.4243" stop-color="#ff5098"/><stop offset="0.5351" stop-color="#ff2b6e"/><stop offset="0.7108" stop-color="#ff0b49"/><stop offset="0.8378" stop-color="#ff003c"/><stop offset="1.0000" stop-color="#ff0038"/></linearGradient><linearGradient id="ci36" gradientUnits="userSpaceOnUse" x1="1140.0" y1="0" x2="1510.0" y2="0"><stop offset="0.0000" stop-color="#00eeff"/><stop offset="0.0784" stop-color="#01d7ff"/><stop offset="0.2486" stop-color="#beafff"/><stop offset="0.3054" stop-color="#ff9efc"/><stop offset="0.3595" stop-color="#ff72c7"/><stop offset="0.4378" stop-color="#ff4997"/><stop offset="0.5541" stop-color="#ff256d"/><stop offset="0.7378" stop-color="#ff0648"/><stop offset="0.8459" stop-color="#ff003f"/><stop offset="1.0000" stop-color="#ff003a"/></linearGradient><linearGradient id="ci37" gradientUnits="userSpaceOnUse" x1="1140.0" y1="0" x2="1510.0" y2="0"><stop offset="0.0000" stop-color="#00e7ff"/><stop offset="0.0811" stop-color="#02ceff"/><stop offset="0.2568" stop-color="#bfa5ff"/><stop offset="0.3135" stop-color="#ff95fc"/><stop offset="0.3703" stop-color="#ff69c7"/><stop offset="0.4514" stop-color="#ff4297"/><stop offset="0.5730" stop-color="#ff206c"/><stop offset="0.7649" stop-color="#ff0248"/><stop offset="1.0000" stop-color="#ff003d"/></linearGradient><linearGradient id="ci38" gradientUnits="userSpaceOnUse" x1="1140.0" y1="0" x2="1510.0" y2="0"><stop offset="0.0000" stop-color="#00e0ff"/><stop offset="0.0811" stop-color="#01c6ff"/><stop offset="0.2622" stop-color="#be9cff"/><stop offset="0.3216" stop-color="#ff8cfc"/><stop offset="0.3811" stop-color="#ff61c6"/><stop offset="0.4649" stop-color="#ff3c96"/><stop offset="0.5892" stop-color="#ff1c6c"/><stop offset="0.7811" stop-color="#ff0048"/><stop offset="1.0000" stop-color="#ff003f"/></linearGradient><linearGradient id="ci39" gradientUnits="userSpaceOnUse" x1="1140.0" y1="0" x2="1510.0" y2="0"><stop offset="0.0000" stop-color="#00daff"/><stop offset="0.0838" stop-color="#02bdff"/><stop offset="0.2703" stop-color="#c093ff"/><stop offset="0.3297" stop-color="#ff83fc"/><stop offset="0.3892" stop-color="#ff5bc7"/><stop offset="0.4730" stop-color="#ff3898"/><stop offset="0.6000" stop-color="#ff186d"/><stop offset="0.7811" stop-color="#ff004c"/><stop offset="1.0000" stop-color="#ff0042"/></linearGradient><linearGradient id="ci40" gradientUnits="userSpaceOnUse" x1="1140.0" y1="0" x2="1510.0" y2="0"><stop offset="0.0000" stop-color="#00d4ff"/><stop offset="0.0838" stop-color="#01b6ff"/><stop offset="0.2757" stop-color="#bf8bff"/><stop offset="0.3378" stop-color="#ff7bfd"/><stop offset="0.4000" stop-color="#ff54c7"/><stop offset="0.4892" stop-color="#ff3296"/><stop offset="0.6216" stop-color="#ff136c"/><stop offset="0.7865" stop-color="#ff004f"/><stop offset="1.0000" stop-color="#ff0044"/></linearGradient><linearGradient id="ci41" gradientUnits="userSpaceOnUse" x1="1140.0" y1="0" x2="1510.0" y2="0"><stop offset="0.0000" stop-color="#00ceff"/><stop offset="0.0865" stop-color="#02afff"/><stop offset="0.2838" stop-color="#c083ff"/><stop offset="0.3459" stop-color="#ff73fd"/><stop offset="0.4081" stop-color="#ff4fc8"/><stop offset="0.4973" stop-color="#ff2e98"/><stop offset="0.6297" stop-color="#ff116e"/><stop offset="0.7811" stop-color="#ff0053"/><stop offset="1.0000" stop-color="#ff0047"/></linearGradient><linearGradient id="ci42" gradientUnits="userSpaceOnUse" x1="1140.0" y1="0" x2="1510.0" y2="0"><stop offset="0.0000" stop-color="#00c9ff"/><stop offset="0.0865" stop-color="#01a8ff"/><stop offset="0.2892" stop-color="#bf7cff"/><stop offset="0.3541" stop-color="#ff6cfd"/><stop offset="0.4189" stop-color="#ff49c7"/><stop offset="0.5108" stop-color="#ff2997"/><stop offset="0.6486" stop-color="#ff0d6d"/><stop offset="0.7757" stop-color="#ff0057"/><stop offset="1.0000" stop-color="#ff0049"/></linearGradient><linearGradient id="ci43" gradientUnits="userSpaceOnUse" x1="1140.0" y1="0" x2="1510.0" y2="0"><stop offset="0.0000" stop-color="#00c4ff"/><stop offset="0.0892" stop-color="#02a1ff"/><stop offset="0.2973" stop-color="#c175ff"/><stop offset="0.3622" stop-color="#ff65fd"/><stop offset="0.4297" stop-color="#ff43c7"/><stop offset="0.5243" stop-color="#ff2497"/><stop offset="0.6649" stop-color="#ff0a6d"/><stop offset="0.7730" stop-color="#ff005a"/><stop offset="1.0000" stop-color="#ff004b"/></linearGradient><linearGradient id="ci44" gradientUnits="userSpaceOnUse" x1="1140.0" y1="0" x2="1510.0" y2="0"><stop offset="0.0000" stop-color="#00bfff"/><stop offset="0.0892" stop-color="#019bff"/><stop offset="0.3000" stop-color="#bd6fff"/><stop offset="0.3703" stop-color="#ff5efd"/><stop offset="0.4378" stop-color="#ff3ec8"/><stop offset="0.5351" stop-color="#ff2097"/><stop offset="0.6784" stop-color="#ff076d"/><stop offset="0.7757" stop-color="#ff005e"/><stop offset="1.0000" stop-color="#ff004e"/></linearGradient><linearGradient id="ci45" gradientUnits="userSpaceOnUse" x1="1140.0" y1="0" x2="1510.0" y2="0"><stop offset="0.0000" stop-color="#00baff"/><stop offset="0.0919" stop-color="#0295ff"/><stop offset="0.3081" stop-color="#be68ff"/><stop offset="0.3784" stop-color="#ff58fd"/><stop offset="0.4486" stop-color="#ff38c7"/><stop offset="0.5486" stop-color="#ff1c97"/><stop offset="0.6973" stop-color="#ff036d"/><stop offset="0.9000" stop-color="#ff0056"/><stop offset="1.0000" stop-color="#ff0050"/></linearGradient><linearGradient id="ci46" gradientUnits="userSpaceOnUse" x1="1140.0" y1="0" x2="1510.0" y2="0"><stop offset="0.0000" stop-color="#00b5ff"/><stop offset="0.0919" stop-color="#0190ff"/><stop offset="0.3135" stop-color="#bd63ff"/><stop offset="0.3865" stop-color="#ff52fd"/><stop offset="0.4595" stop-color="#ff33c7"/><stop offset="0.5622" stop-color="#ff1897"/><stop offset="0.7135" stop-color="#ff006d"/><stop offset="0.9946" stop-color="#ff0053"/><stop offset="1.0000" stop-color="#ff0053"/></linearGradient><linearGradient id="ci47" gradientUnits="userSpaceOnUse" x1="1140.0" y1="0" x2="1510.0" y2="0"><stop offset="0.0000" stop-color="#00b1ff"/><stop offset="0.0946" stop-color="#028aff"/><stop offset="0.3216" stop-color="#bf5dff"/><stop offset="0.3946" stop-color="#ff4cfd"/><stop offset="0.4676" stop-color="#ff2fc8"/><stop offset="0.5703" stop-color="#ff1598"/><stop offset="0.7162" stop-color="#ff0070"/><stop offset="0.9973" stop-color="#ff0055"/><stop offset="1.0000" stop-color="#ff0055"/></linearGradient><linearGradient id="ci48" gradientUnits="userSpaceOnUse" x1="1140.0" y1="0" x2="1510.0" y2="0"><stop offset="0.0000" stop-color="#00adff"/><stop offset="0.0973" stop-color="#0385ff"/><stop offset="0.3297" stop-color="#c057ff"/><stop offset="0.4027" stop-color="#ff47fd"/><stop offset="0.4784" stop-color="#ff2ac7"/><stop offset="0.5865" stop-color="#ff1197"/><stop offset="0.7216" stop-color="#ff0073"/><stop offset="0.9973" stop-color="#ff0058"/><stop offset="1.0000" stop-color="#ff0058"/></linearGradient><linearGradient id="ci49" gradientUnits="userSpaceOnUse" x1="1140.0" y1="0" x2="1510.0" y2="0"><stop offset="0.0000" stop-color="#00a9ff"/><stop offset="0.0973" stop-color="#0280ff"/><stop offset="0.3351" stop-color="#bf52ff"/><stop offset="0.4108" stop-color="#ff41fd"/><stop offset="0.4865" stop-color="#ff27c8"/><stop offset="0.5946" stop-color="#ff0e98"/><stop offset="0.7162" stop-color="#ff0077"/><stop offset="0.9784" stop-color="#ff005c"/><stop offset="1.0000" stop-color="#ff005a"/></linearGradient><linearGradient id="ci50" gradientUnits="userSpaceOnUse" x1="1140.0" y1="0" x2="1510.0" y2="0"><stop offset="0.0000" stop-color="#00a5ff"/><stop offset="0.1000" stop-color="#037bff"/><stop offset="0.3432" stop-color="#c14dff"/><stop offset="0.4189" stop-color="#ff3cfd"/><stop offset="0.4973" stop-color="#ff22c8"/><stop offset="0.6081" stop-color="#ff0b98"/><stop offset="0.7108" stop-color="#ff007c"/><stop offset="0.9595" stop-color="#ff0060"/><stop offset="1.0000" stop-color="#ff005d"/></linearGradient><linearGradient id="ci51" gradientUnits="userSpaceOnUse" x1="1140.0" y1="0" x2="1510.0" y2="0"><stop offset="0.0000" stop-color="#00a1ff"/><stop offset="0.1000" stop-color="#0277ff"/><stop offset="0.3486" stop-color="#c048ff"/><stop offset="0.4270" stop-color="#ff38fe"/><stop offset="0.5081" stop-color="#ff1ec7"/><stop offset="0.6216" stop-color="#ff0897"/><stop offset="0.7108" stop-color="#ff0080"/><stop offset="0.9541" stop-color="#ff0063"/><stop offset="1.0000" stop-color="#ff005f"/></linearGradient><linearGradient id="ci52" gradientUnits="userSpaceOnUse" x1="1140.0" y1="0" x2="1510.0" y2="0"><stop offset="0.0000" stop-color="#009eff"/><stop offset="0.1027" stop-color="#0372ff"/><stop offset="0.3568" stop-color="#c143ff"/><stop offset="0.4351" stop-color="#ff33fe"/><stop offset="0.5162" stop-color="#ff1bc8"/><stop offset="0.6324" stop-color="#ff0598"/><stop offset="0.7243" stop-color="#ff0081"/><stop offset="0.9703" stop-color="#ff0064"/><stop offset="1.0000" stop-color="#ff0061"/></linearGradient><linearGradient id="ci53" gradientUnits="userSpaceOnUse" x1="1140.0" y1="0" x2="1510.0" y2="0"><stop offset="0.0000" stop-color="#009aff"/><stop offset="0.1027" stop-color="#026fff"/><stop offset="0.3622" stop-color="#c03fff"/><stop offset="0.4432" stop-color="#ff2ffe"/><stop offset="0.5270" stop-color="#ff17c8"/><stop offset="0.6459" stop-color="#ff0297"/><stop offset="0.8081" stop-color="#ff0078"/><stop offset="1.0000" stop-color="#ff0064"/></linearGradient><linearGradient id="ci54" gradientUnits="userSpaceOnUse" x1="1140.0" y1="0" x2="1510.0" y2="0"><stop offset="0.0000" stop-color="#0097ff"/><stop offset="0.1054" stop-color="#036aff"/><stop offset="0.3703" stop-color="#c13aff"/><stop offset="0.4514" stop-color="#ff2afe"/><stop offset="0.5351" stop-color="#ff14c8"/><stop offset="0.6541" stop-color="#ff0099"/><stop offset="0.8351" stop-color="#ff0077"/><stop offset="1.0000" stop-color="#ff0066"/></linearGradient><linearGradient id="ci55" gradientUnits="userSpaceOnUse" x1="1140.0" y1="0" x2="1510.0" y2="0"><stop offset="0.0000" stop-color="#0094ff"/><stop offset="0.1054" stop-color="#0267ff"/><stop offset="0.3757" stop-color="#c037ff"/><stop offset="0.4595" stop-color="#ff26fe"/><stop offset="0.5459" stop-color="#ff10c8"/><stop offset="0.6595" stop-color="#ff009b"/><stop offset="0.8405" stop-color="#ff007a"/><stop offset="1.0000" stop-color="#ff0069"/></linearGradient><linearGradient id="ci56" gradientUnits="userSpaceOnUse" x1="1140.0" y1="0" x2="1510.0" y2="0"><stop offset="0.0000" stop-color="#0091ff"/><stop offset="0.1081" stop-color="#0363ff"/><stop offset="0.3838" stop-color="#c132ff"/><stop offset="0.4676" stop-color="#ff22fe"/><stop offset="0.5568" stop-color="#ff0dc7"/><stop offset="0.6595" stop-color="#ff00a0"/><stop offset="0.8378" stop-color="#ff007d"/><stop offset="1.0000" stop-color="#ff006b"/></linearGradient><linearGradient id="ci57" gradientUnits="userSpaceOnUse" x1="1140.0" y1="0" x2="1510.0" y2="0"><stop offset="0.0000" stop-color="#008eff"/><stop offset="0.1081" stop-color="#0260ff"/><stop offset="0.3892" stop-color="#c02fff"/><stop offset="0.4784" stop-color="#ff1efc"/><stop offset="0.5703" stop-color="#ff09c6"/><stop offset="0.6568" stop-color="#ff00a5"/><stop offset="0.8297" stop-color="#ff0081"/><stop offset="1.0000" stop-color="#ff006e"/></linearGradient><linearGradient id="ci58" gradientUnits="userSpaceOnUse" x1="1140.0" y1="0" x2="1510.0" y2="0"><stop offset="0.0000" stop-color="#008bff"/><stop offset="0.1108" stop-color="#035cff"/><stop offset="0.3946" stop-color="#c02bff"/><stop offset="0.4865" stop-color="#ff1afc"/><stop offset="0.5784" stop-color="#ff07c7"/><stop offset="0.6568" stop-color="#ff00a9"/><stop offset="0.8270" stop-color="#ff0085"/><stop offset="1.0000" stop-color="#ff0070"/></linearGradient><linearGradient id="ci59" gradientUnits="userSpaceOnUse" x1="1140.0" y1="0" x2="1510.0" y2="0"><stop offset="0.0000" stop-color="#0088ff"/><stop offset="0.1108" stop-color="#0259ff"/><stop offset="0.4000" stop-color="#bf28ff"/><stop offset="0.4946" stop-color="#ff16fc"/><stop offset="0.5892" stop-color="#ff04c6"/><stop offset="0.7027" stop-color="#ff00a0"/><stop offset="0.9000" stop-color="#ff007d"/><stop offset="1.0000" stop-color="#ff0072"/></linearGradient><linearGradient id="ci60" gradientUnits="userSpaceOnUse" x1="1140.0" y1="0" x2="1510.0" y2="0"><stop offset="0.0000" stop-color="#0085ff"/><stop offset="0.1135" stop-color="#0355ff"/><stop offset="0.4081" stop-color="#c024ff"/><stop offset="0.5027" stop-color="#ff13fc"/><stop offset="0.6000" stop-color="#ff01c6"/><stop offset="0.7270" stop-color="#ff009e"/><stop offset="0.9351" stop-color="#ff007c"/><stop offset="1.0000" stop-color="#ff0075"/></linearGradient><linearGradient id="ci61" gradientUnits="userSpaceOnUse" x1="1140.0" y1="0" x2="1510.0" y2="0"><stop offset="0.0000" stop-color="#0083ff"/><stop offset="0.1135" stop-color="#0253ff"/><stop offset="0.4135" stop-color="#bf21ff"/><stop offset="0.5108" stop-color="#ff10fc"/><stop offset="0.6054" stop-color="#ff00c8"/><stop offset="0.7351" stop-color="#ff00a0"/><stop offset="0.9459" stop-color="#ff007d"/><stop offset="1.0000" stop-color="#ff0077"/></linearGradient><linearGradient id="ci62" gradientUnits="userSpaceOnUse" x1="1140.0" y1="0" x2="1510.0" y2="0"><stop offset="0.0000" stop-color="#0080ff"/><stop offset="0.1162" stop-color="#034fff"/><stop offset="0.4216" stop-color="#c01eff"/><stop offset="0.5189" stop-color="#ff0dfc"/><stop offset="0.6108" stop-color="#ff00ca"/><stop offset="0.7432" stop-color="#ff00a1"/><stop offset="0.9568" stop-color="#ff007e"/><stop offset="1.0000" stop-color="#ff0079"/></linearGradient><linearGradient id="ci63" gradientUnits="userSpaceOnUse" x1="1140.0" y1="0" x2="1510.0" y2="0"><stop offset="0.0000" stop-color="#007eff"/><stop offset="0.1162" stop-color="#024dff"/><stop offset="0.4270" stop-color="#bf1bff"/><stop offset="0.5270" stop-color="#ff0afc"/><stop offset="0.6054" stop-color="#ff00d1"/><stop offset="0.7324" stop-color="#ff00a7"/><stop offset="0.9351" stop-color="#ff0083"/><stop offset="1.0000" stop-color="#ff007c"/></linearGradient><linearGradient id="ci64" gradientUnits="userSpaceOnUse" x1="1140.0" y1="0" x2="1510.0" y2="0"><stop offset="0.0000" stop-color="#007bff"/><stop offset="0.1189" stop-color="#034aff"/><stop offset="0.4351" stop-color="#c018ff"/><stop offset="0.5351" stop-color="#ff07fc"/><stop offset="0.6027" stop-color="#ff00d7"/><stop offset="0.7270" stop-color="#ff00ac"/><stop offset="0.9216" stop-color="#ff0088"/><stop offset="1.0000" stop-color="#ff007e"/></linearGradient><linearGradient id="ci65" gradientUnits="userSpaceOnUse" x1="1140.0" y1="0" x2="1510.0" y2="0"><stop offset="0.0000" stop-color="#0079ff"/><stop offset="0.1189" stop-color="#0247ff"/><stop offset="0.4405" stop-color="#c015ff"/><stop offset="0.5432" stop-color="#ff04fd"/><stop offset="0.6351" stop-color="#ff00ce"/><stop offset="0.7730" stop-color="#ff00a5"/><stop offset="0.9946" stop-color="#ff0081"/><stop offset="1.0000" stop-color="#ff0081"/></linearGradient><linearGradient id="ci66" gradientUnits="userSpaceOnUse" x1="1140.0" y1="0" x2="1510.0" y2="0"><stop offset="0.0000" stop-color="#0077ff"/><stop offset="0.1216" stop-color="#0344ff"/><stop offset="0.4486" stop-color="#c112ff"/><stop offset="0.5514" stop-color="#ff01fd"/><stop offset="0.6459" stop-color="#ff00ce"/><stop offset="0.7892" stop-color="#ff00a4"/><stop offset="1.0000" stop-color="#ff0083"/></linearGradient><linearGradient id="ci67" gradientUnits="userSpaceOnUse" x1="1140.0" y1="0" x2="1510.0" y2="0"><stop offset="0.0000" stop-color="#0075ff"/><stop offset="0.1216" stop-color="#0242ff"/><stop offset="0.4541" stop-color="#c010ff"/><stop offset="0.5595" stop-color="#ff00fd"/><stop offset="0.6568" stop-color="#ff00ce"/><stop offset="0.8027" stop-color="#ff00a5"/><stop offset="1.0000" stop-color="#ff0085"/></linearGradient><linearGradient id="ci68" gradientUnits="userSpaceOnUse" x1="1140.0" y1="0" x2="1510.0" y2="0"><stop offset="0.0000" stop-color="#0073ff"/><stop offset="0.1243" stop-color="#0340ff"/><stop offset="0.4622" stop-color="#c10dff"/><stop offset="0.5649" stop-color="#ff00fe"/><stop offset="0.6649" stop-color="#ff00cf"/><stop offset="0.8135" stop-color="#ff00a5"/><stop offset="1.0000" stop-color="#ff0088"/></linearGradient><linearGradient id="ci69" gradientUnits="userSpaceOnUse" x1="1140.0" y1="0" x2="1510.0" y2="0"><stop offset="0.0000" stop-color="#0071ff"/><stop offset="0.1243" stop-color="#023dff"/><stop offset="0.4676" stop-color="#c00aff"/><stop offset="0.5595" stop-color="#f700ff"/><stop offset="0.5811" stop-color="#ff00fa"/><stop offset="0.6865" stop-color="#ff00cb"/><stop offset="0.8459" stop-color="#ff00a2"/><stop offset="1.0000" stop-color="#ff008a"/></linearGradient><linearGradient id="ci70" gradientUnits="userSpaceOnUse" x1="1140.0" y1="0" x2="1510.0" y2="0"><stop offset="0.0000" stop-color="#006fff"/><stop offset="0.1270" stop-color="#023bff"/><stop offset="0.4757" stop-color="#c108ff"/><stop offset="0.5568" stop-color="#f100ff"/><stop offset="0.5865" stop-color="#ff00fb"/><stop offset="0.6919" stop-color="#ff00cd"/><stop offset="0.8514" stop-color="#ff00a4"/><stop offset="1.0000" stop-color="#ff008c"/></linearGradient><linearGradient id="ci71" gradientUnits="userSpaceOnUse" x1="1140.0" y1="0" x2="1510.0" y2="0"><stop offset="0.0000" stop-color="#006dff"/><stop offset="0.1297" stop-color="#0338ff"/><stop offset="0.4811" stop-color="#c006ff"/><stop offset="0.5595" stop-color="#ee00ff"/><stop offset="0.5946" stop-color="#ff00fb"/><stop offset="0.7027" stop-color="#ff00cd"/><stop offset="0.8676" stop-color="#ff00a3"/><stop offset="1.0000" stop-color="#ff008f"/></linearGradient><linearGradient id="ci72" gradientUnits="userSpaceOnUse" x1="1140.0" y1="0" x2="1510.0" y2="0"><stop offset="0.0000" stop-color="#006bff"/><stop offset="0.1216" stop-color="#0039ff"/><stop offset="0.4270" stop-color="#9e0cff"/><stop offset="0.5351" stop-color="#dc00ff"/><stop offset="0.6000" stop-color="#ff00fd"/><stop offset="0.7108" stop-color="#ff00ce"/><stop offset="0.8757" stop-color="#ff00a5"/><stop offset="1.0000" stop-color="#ff0091"/></linearGradient><linearGradient id="ci73" gradientUnits="userSpaceOnUse" x1="1140.0" y1="0" x2="1510.0" y2="0"><stop offset="0.0000" stop-color="#0069ff"/><stop offset="0.1324" stop-color="#0334ff"/><stop offset="0.4946" stop-color="#c101ff"/><stop offset="0.6081" stop-color="#ff00fd"/><stop offset="0.7216" stop-color="#ff00ce"/><stop offset="0.8919" stop-color="#ff00a4"/><stop offset="1.0000" stop-color="#ff0093"/></linearGradient><linearGradient id="ci74" gradientUnits="userSpaceOnUse" x1="1140.0" y1="0" x2="1510.0" y2="0"><stop offset="0.0000" stop-color="#0067ff"/><stop offset="0.1243" stop-color="#0035ff"/><stop offset="0.4432" stop-color="#a107ff"/><stop offset="0.5270" stop-color="#d000ff"/><stop offset="0.6162" stop-color="#ff00fd"/><stop offset="0.7324" stop-color="#ff00ce"/><stop offset="0.9054" stop-color="#ff00a5"/><stop offset="1.0000" stop-color="#ff0096"/></linearGradient><linearGradient id="ci75" gradientUnits="userSpaceOnUse" x1="1140.0" y1="0" x2="1510.0" y2="0"><stop offset="0.0000" stop-color="#0066ff"/><stop offset="0.1351" stop-color="#0330ff"/><stop offset="0.4946" stop-color="#ba00ff"/><stop offset="0.6243" stop-color="#ff00fd"/><stop offset="0.7432" stop-color="#ff00ce"/><stop offset="0.9216" stop-color="#ff00a4"/><stop offset="1.0000" stop-color="#ff0098"/></linearGradient><linearGradient id="ci76" gradientUnits="userSpaceOnUse" x1="1140.0" y1="0" x2="1510.0" y2="0"><stop offset="0.0000" stop-color="#0064ff"/><stop offset="0.1270" stop-color="#0031ff"/><stop offset="0.4568" stop-color="#a203ff"/><stop offset="0.6324" stop-color="#ff00fd"/><stop offset="0.7541" stop-color="#ff00ce"/><stop offset="0.9351" stop-color="#ff00a4"/><stop offset="1.0000" stop-color="#ff009a"/></linearGradient><linearGradient id="ci77" gradientUnits="userSpaceOnUse" x1="1140.0" y1="0" x2="1510.0" y2="0"><stop offset="0.0000" stop-color="#0062ff"/><stop offset="0.1378" stop-color="#032cff"/><stop offset="0.4892" stop-color="#b100ff"/><stop offset="0.6405" stop-color="#ff00fd"/><stop offset="0.7649" stop-color="#ff00ce"/><stop offset="0.9514" stop-color="#ff00a4"/><stop offset="1.0000" stop-color="#ff009d"/></linearGradient><linearGradient id="ci78" gradientUnits="userSpaceOnUse" x1="1140.0" y1="0" x2="1510.0" y2="0"><stop offset="0.0000" stop-color="#0061ff"/><stop offset="0.1297" stop-color="#002dff"/><stop offset="0.4649" stop-color="#a000ff"/><stop offset="0.6486" stop-color="#ff00fd"/><stop offset="0.7730" stop-color="#ff00cf"/><stop offset="0.9622" stop-color="#ff00a5"/><stop offset="1.0000" stop-color="#ff009f"/></linearGradient><linearGradient id="ci79" gradientUnits="userSpaceOnUse" x1="1140.0" y1="0" x2="1510.0" y2="0"><stop offset="0.0000" stop-color="#005fff"/><stop offset="0.1405" stop-color="#0329ff"/><stop offset="0.4784" stop-color="#a500ff"/><stop offset="0.6568" stop-color="#ff00fd"/><stop offset="0.7838" stop-color="#ff00cf"/><stop offset="0.9757" stop-color="#ff00a5"/><stop offset="1.0000" stop-color="#ff00a1"/></linearGradient><linearGradient id="ci80" gradientUnits="userSpaceOnUse" x1="1140.0" y1="0" x2="1510.0" y2="0"><stop offset="0.0000" stop-color="#005eff"/><stop offset="0.1324" stop-color="#0029ff"/><stop offset="0.4595" stop-color="#9900ff"/><stop offset="0.6649" stop-color="#ff00fe"/><stop offset="0.7946" stop-color="#ff00cf"/><stop offset="0.9892" stop-color="#ff00a5"/><stop offset="1.0000" stop-color="#ff00a3"/></linearGradient><linearGradient id="ci81" gradientUnits="userSpaceOnUse" x1="1140.0" y1="0" x2="1510.0" y2="0"><stop offset="0.0000" stop-color="#005cff"/><stop offset="0.1432" stop-color="#0325ff"/><stop offset="0.4622" stop-color="#9800ff"/><stop offset="0.6730" stop-color="#ff00fe"/><stop offset="0.8054" stop-color="#ff00cf"/><stop offset="1.0000" stop-color="#ff00a6"/></linearGradient><linearGradient id="ci82" gradientUnits="userSpaceOnUse" x1="1140.0" y1="0" x2="1510.0" y2="0"><stop offset="0.0000" stop-color="#005bff"/><stop offset="0.1351" stop-color="#0026ff"/><stop offset="0.4514" stop-color="#9000ff"/><stop offset="0.6811" stop-color="#ff00fe"/><stop offset="0.8162" stop-color="#ff00ce"/><stop offset="1.0000" stop-color="#ff00a8"/></linearGradient><linearGradient id="ci83" gradientUnits="userSpaceOnUse" x1="1140.0" y1="0" x2="1510.0" y2="0"><stop offset="0.0000" stop-color="#0059ff"/><stop offset="0.1459" stop-color="#0322ff"/><stop offset="0.4459" stop-color="#8b00ff"/><stop offset="0.6865" stop-color="#ff00ff"/><stop offset="0.8243" stop-color="#ff00cf"/><stop offset="1.0000" stop-color="#ff00aa"/></linearGradient><linearGradient id="ci84" gradientUnits="userSpaceOnUse" x1="1140.0" y1="0" x2="1510.0" y2="0"><stop offset="0.0000" stop-color="#0058ff"/><stop offset="0.1378" stop-color="#0023ff"/><stop offset="0.4378" stop-color="#8500ff"/><stop offset="0.6946" stop-color="#ff00ff"/><stop offset="0.8351" stop-color="#ff00cf"/><stop offset="1.0000" stop-color="#ff00ad"/></linearGradient><linearGradient id="ci85" gradientUnits="userSpaceOnUse" x1="1140.0" y1="0" x2="1510.0" y2="0"><stop offset="0.0000" stop-color="#0056ff"/><stop offset="0.1378" stop-color="#0022ff"/><stop offset="0.4297" stop-color="#7f00ff"/><stop offset="0.7027" stop-color="#ff00ff"/><stop offset="0.8459" stop-color="#ff00cf"/><stop offset="1.0000" stop-color="#ff00af"/></linearGradient><linearGradient id="ci86" gradientUnits="userSpaceOnUse" x1="1140.0" y1="0" x2="1510.0" y2="0"><stop offset="0.0000" stop-color="#0055ff"/><stop offset="0.1405" stop-color="#0020ff"/><stop offset="0.4243" stop-color="#7b00ff"/><stop offset="0.7081" stop-color="#fe00ff"/><stop offset="0.8676" stop-color="#ff00cc"/><stop offset="1.0000" stop-color="#ff00b1"/></linearGradient><linearGradient id="ci87" gradientUnits="userSpaceOnUse" x1="1140.0" y1="0" x2="1510.0" y2="0"><stop offset="0.0000" stop-color="#0054ff"/><stop offset="0.1405" stop-color="#001fff"/><stop offset="0.4162" stop-color="#7500ff"/><stop offset="0.7027" stop-color="#f800ff"/><stop offset="0.7297" stop-color="#ff00fb"/><stop offset="0.8811" stop-color="#ff00cc"/><stop offset="1.0000" stop-color="#ff00b3"/></linearGradient><linearGradient id="ci88" gradientUnits="userSpaceOnUse" x1="1140.0" y1="0" x2="1510.0" y2="0"><stop offset="0.0000" stop-color="#0053ff"/><stop offset="0.1432" stop-color="#001dff"/><stop offset="0.4081" stop-color="#7000ff"/><stop offset="0.6973" stop-color="#f300ff"/><stop offset="0.7351" stop-color="#ff00fc"/><stop offset="0.8892" stop-color="#ff00cc"/><stop offset="1.0000" stop-color="#ff00b6"/></linearGradient><linearGradient id="ci89" gradientUnits="userSpaceOnUse" x1="1140.0" y1="0" x2="1510.0" y2="0"><stop offset="0.0000" stop-color="#0051ff"/><stop offset="0.1432" stop-color="#001cff"/><stop offset="0.4000" stop-color="#6a00ff"/><stop offset="0.6919" stop-color="#ed00ff"/><stop offset="0.7432" stop-color="#ff00fc"/><stop offset="0.9000" stop-color="#ff00cc"/><stop offset="1.0000" stop-color="#ff00b8"/></linearGradient><linearGradient id="ci90" gradientUnits="userSpaceOnUse" x1="1140.0" y1="0" x2="1510.0" y2="0"><stop offset="0.0000" stop-color="#0050ff"/><stop offset="0.1459" stop-color="#001aff"/><stop offset="0.3946" stop-color="#6600ff"/><stop offset="0.6919" stop-color="#ea00ff"/><stop offset="0.7514" stop-color="#ff00fc"/><stop offset="0.9108" stop-color="#ff00cc"/><stop offset="1.0000" stop-color="#ff00ba"/></linearGradient><linearGradient id="ci91" gradientUnits="userSpaceOnUse" x1="1140.0" y1="0" x2="1510.0" y2="0"><stop offset="0.0000" stop-color="#004fff"/><stop offset="0.1459" stop-color="#0019ff"/><stop offset="0.3865" stop-color="#6100ff"/><stop offset="0.6865" stop-color="#e500ff"/><stop offset="0.7595" stop-color="#ff00fc"/><stop offset="0.9216" stop-color="#ff00cd"/><stop offset="1.0000" stop-color="#ff00bc"/></linearGradient><linearGradient id="ci92" gradientUnits="userSpaceOnUse" x1="1140.0" y1="0" x2="1510.0" y2="0"><stop offset="0.0000" stop-color="#004eff"/><stop offset="0.1486" stop-color="#0017ff"/><stop offset="0.3784" stop-color="#5c00ff"/><stop offset="0.6811" stop-color="#e000ff"/><stop offset="0.7676" stop-color="#ff00fc"/><stop offset="0.9297" stop-color="#ff00cd"/><stop offset="1.0000" stop-color="#ff00bf"/></linearGradient><linearGradient id="ci93" gradientUnits="userSpaceOnUse" x1="1140.0" y1="0" x2="1510.0" y2="0"><stop offset="0.0000" stop-color="#004dff"/><stop offset="0.1486" stop-color="#0017ff"/><stop offset="0.3703" stop-color="#5800ff"/><stop offset="0.6784" stop-color="#dd00ff"/><stop offset="0.7757" stop-color="#ff00fc"/><stop offset="0.9405" stop-color="#ff00cd"/><stop offset="1.0000" stop-color="#ff00c1"/></linearGradient><linearGradient id="ci94" gradientUnits="userSpaceOnUse" x1="1140.0" y1="0" x2="1510.0" y2="0"><stop offset="0.0000" stop-color="#004cff"/><stop offset="0.1514" stop-color="#0015ff"/><stop offset="0.3649" stop-color="#5400ff"/><stop offset="0.6757" stop-color="#d900ff"/><stop offset="0.7838" stop-color="#ff00fc"/><stop offset="0.9514" stop-color="#ff00cd"/><stop offset="1.0000" stop-color="#ff00c3"/></linearGradient><linearGradient id="ci95" gradientUnits="userSpaceOnUse" x1="1140.0" y1="0" x2="1510.0" y2="0"><stop offset="0.0000" stop-color="#004bff"/><stop offset="0.1514" stop-color="#0014ff"/><stop offset="0.3568" stop-color="#5000ff"/><stop offset="0.6703" stop-color="#d400ff"/><stop offset="0.7919" stop-color="#ff00fc"/><stop offset="0.9622" stop-color="#ff00cd"/><stop offset="1.0000" stop-color="#ff00c5"/></linearGradient><linearGradient id="ci96" gradientUnits="userSpaceOnUse" x1="1140.0" y1="0" x2="1510.0" y2="0"><stop offset="0.0000" stop-color="#0049ff"/><stop offset="0.1541" stop-color="#0012ff"/><stop offset="0.3486" stop-color="#4b00ff"/><stop offset="0.6649" stop-color="#d000ff"/><stop offset="0.8000" stop-color="#ff00fc"/><stop offset="0.9730" stop-color="#ff00cd"/><stop offset="1.0000" stop-color="#ff00c8"/></linearGradient><linearGradient id="ci97" gradientUnits="userSpaceOnUse" x1="1140.0" y1="0" x2="1510.0" y2="0"><stop offset="0.0000" stop-color="#0048ff"/><stop offset="0.1541" stop-color="#0012ff"/><stop offset="0.3405" stop-color="#4700ff"/><stop offset="0.6622" stop-color="#cc00ff"/><stop offset="0.8081" stop-color="#ff00fc"/><stop offset="0.9838" stop-color="#ff00cd"/><stop offset="1.0000" stop-color="#ff00ca"/></linearGradient><linearGradient id="ci98" gradientUnits="userSpaceOnUse" x1="1140.0" y1="0" x2="1510.0" y2="0"><stop offset="0.0000" stop-color="#0047ff"/><stop offset="0.1568" stop-color="#0010ff"/><stop offset="0.3351" stop-color="#4400ff"/><stop offset="0.6595" stop-color="#c900ff"/><stop offset="0.8162" stop-color="#ff00fc"/><stop offset="0.9946" stop-color="#ff00cd"/><stop offset="1.0000" stop-color="#ff00cc"/></linearGradient><linearGradient id="ci99" gradientUnits="userSpaceOnUse" x1="1140.0" y1="0" x2="1510.0" y2="0"><stop offset="0.0000" stop-color="#0046ff"/><stop offset="0.1568" stop-color="#000fff"/><stop offset="0.3270" stop-color="#3f00ff"/><stop offset="0.6541" stop-color="#c500ff"/><stop offset="0.8243" stop-color="#ff00fc"/><stop offset="1.0000" stop-color="#ff00ce"/></linearGradient><linearGradient id="ci100" gradientUnits="userSpaceOnUse" x1="1140.0" y1="0" x2="1510.0" y2="0"><stop offset="0.0000" stop-color="#0045ff"/><stop offset="0.1595" stop-color="#000eff"/><stop offset="0.3216" stop-color="#3c00ff"/><stop offset="0.6541" stop-color="#c300ff"/><stop offset="0.8324" stop-color="#ff00fc"/><stop offset="1.0000" stop-color="#ff00d0"/></linearGradient><linearGradient id="ci101" gradientUnits="userSpaceOnUse" x1="1140.0" y1="0" x2="1510.0" y2="0"><stop offset="0.0000" stop-color="#0045ff"/><stop offset="0.1595" stop-color="#000dff"/><stop offset="0.3135" stop-color="#3800ff"/><stop offset="0.6486" stop-color="#bf00ff"/><stop offset="0.8405" stop-color="#ff00fd"/><stop offset="1.0000" stop-color="#ff00d3"/></linearGradient><linearGradient id="ci102" gradientUnits="userSpaceOnUse" x1="1140.0" y1="0" x2="1510.0" y2="0"><stop offset="0.0000" stop-color="#0044ff"/><stop offset="0.1622" stop-color="#000cff"/><stop offset="0.3081" stop-color="#3600ff"/><stop offset="0.6459" stop-color="#bc00ff"/><stop offset="0.8486" stop-color="#ff00fd"/><stop offset="1.0000" stop-color="#ff00d5"/></linearGradient><linearGradient id="ci103" gradientUnits="userSpaceOnUse" x1="1140.0" y1="0" x2="1510.0" y2="0"><stop offset="0.0000" stop-color="#0043ff"/><stop offset="0.1622" stop-color="#000bff"/><stop offset="0.3000" stop-color="#3200ff"/><stop offset="0.6432" stop-color="#b900ff"/><stop offset="0.8568" stop-color="#ff00fd"/><stop offset="1.0000" stop-color="#ff00d7"/></linearGradient><linearGradient id="ci104" gradientUnits="userSpaceOnUse" x1="1140.0" y1="0" x2="1510.0" y2="0"><stop offset="0.0000" stop-color="#0042ff"/><stop offset="0.1622" stop-color="#000bff"/><stop offset="0.2892" stop-color="#2d00ff"/><stop offset="0.6351" stop-color="#b400ff"/><stop offset="0.8649" stop-color="#ff00fd"/><stop offset="1.0000" stop-color="#ff00d9"/></linearGradient><linearGradient id="ci105" gradientUnits="userSpaceOnUse" x1="1140.0" y1="0" x2="1510.0" y2="0"><stop offset="0.0000" stop-color="#0041ff"/><stop offset="0.1649" stop-color="#0009ff"/><stop offset="0.2865" stop-color="#2c00ff"/><stop offset="0.6351" stop-color="#b200ff"/><stop offset="0.8730" stop-color="#ff00fd"/><stop offset="1.0000" stop-color="#ff00db"/></linearGradient><linearGradient id="ci106" gradientUnits="userSpaceOnUse" x1="1140.0" y1="0" x2="1510.0" y2="0"><stop offset="0.0000" stop-color="#0040ff"/><stop offset="0.1649" stop-color="#0009ff"/><stop offset="0.2784" stop-color="#2800ff"/><stop offset="0.6297" stop-color="#ae00ff"/><stop offset="0.8811" stop-color="#ff00fd"/><stop offset="1.0000" stop-color="#ff00de"/></linearGradient><linearGradient id="ci107" gradientUnits="userSpaceOnUse" x1="1140.0" y1="0" x2="1510.0" y2="0"><stop offset="0.0000" stop-color="#003fff"/><stop offset="0.1676" stop-color="#0007ff"/><stop offset="0.2784" stop-color="#2800ff"/><stop offset="0.6351" stop-color="#ae00ff"/><stop offset="0.8892" stop-color="#ff00fd"/><stop offset="1.0000" stop-color="#ff00e0"/></linearGradient><linearGradient id="ci108" gradientUnits="userSpaceOnUse" x1="1140.0" y1="0" x2="1510.0" y2="0"><stop offset="0.0000" stop-color="#003eff"/><stop offset="0.1676" stop-color="#0007ff"/><stop offset="0.2676" stop-color="#2300ff"/><stop offset="0.6270" stop-color="#aa00ff"/><stop offset="0.8973" stop-color="#ff00fd"/><stop offset="1.0000" stop-color="#ff00e2"/></linearGradient><linearGradient id="ci109" gradientUnits="userSpaceOnUse" x1="1140.0" y1="0" x2="1510.0" y2="0"><stop offset="0.0000" stop-color="#003dff"/><stop offset="0.1703" stop-color="#0005ff"/><stop offset="0.2784" stop-color="#2700ff"/><stop offset="0.6432" stop-color="#ae00ff"/><stop offset="0.9054" stop-color="#ff00fd"/><stop offset="1.0000" stop-color="#ff00e4"/></linearGradient><linearGradient id="ci110" gradientUnits="userSpaceOnUse" x1="1140.0" y1="0" x2="1510.0" y2="0"><stop offset="0.0000" stop-color="#003dff"/><stop offset="0.1703" stop-color="#0005ff"/><stop offset="0.2703" stop-color="#2400ff"/><stop offset="0.6405" stop-color="#ab00ff"/><stop offset="0.9135" stop-color="#ff00fd"/><stop offset="1.0000" stop-color="#ff00e6"/></linearGradient><linearGradient id="ci111" gradientUnits="userSpaceOnUse" x1="1140.0" y1="0" x2="1510.0" y2="0"><stop offset="0.0000" stop-color="#003cff"/><stop offset="0.1730" stop-color="#0003ff"/><stop offset="0.4216" stop-color="#5d00ff"/><stop offset="0.8162" stop-color="#e200ff"/><stop offset="0.9243" stop-color="#ff00fc"/><stop offset="1.0000" stop-color="#ff00e9"/></linearGradient><linearGradient id="ci112" gradientUnits="userSpaceOnUse" x1="1140.0" y1="0" x2="1510.0" y2="0"><stop offset="0.0000" stop-color="#003bff"/><stop offset="0.1730" stop-color="#0003ff"/><stop offset="0.6243" stop-color="#a300ff"/><stop offset="0.9297" stop-color="#ff00fd"/><stop offset="1.0000" stop-color="#ff00eb"/></linearGradient><linearGradient id="ci113" gradientUnits="userSpaceOnUse" x1="1140.0" y1="0" x2="1510.0" y2="0"><stop offset="0.0000" stop-color="#003aff"/><stop offset="0.1757" stop-color="#0002ff"/><stop offset="0.5946" stop-color="#9700ff"/><stop offset="0.9351" stop-color="#ff00fe"/><stop offset="1.0000" stop-color="#ff00ed"/></linearGradient><linearGradient id="ci114" gradientUnits="userSpaceOnUse" x1="1140.0" y1="0" x2="1510.0" y2="0"><stop offset="0.0000" stop-color="#003aff"/><stop offset="0.1757" stop-color="#0001ff"/><stop offset="0.5892" stop-color="#9400ff"/><stop offset="0.9432" stop-color="#ff00fe"/><stop offset="1.0000" stop-color="#ff00ef"/></linearGradient><linearGradient id="ci115" gradientUnits="userSpaceOnUse" x1="1140.0" y1="0" x2="1510.0" y2="0"><stop offset="0.0000" stop-color="#0039ff"/><stop offset="0.1838" stop-color="#0200ff"/><stop offset="0.5622" stop-color="#8a00ff"/><stop offset="0.9486" stop-color="#ff00ff"/><stop offset="1.0000" stop-color="#ff00f1"/></linearGradient><linearGradient id="ci116" gradientUnits="userSpaceOnUse" x1="1140.0" y1="0" x2="1510.0" y2="0"><stop offset="0.0000" stop-color="#0038ff"/><stop offset="0.1838" stop-color="#0200ff"/><stop offset="0.5676" stop-color="#8b00ff"/><stop offset="0.9568" stop-color="#ff00fe"/><stop offset="1.0000" stop-color="#ff00f3"/></linearGradient><linearGradient id="co0" gradientUnits="userSpaceOnUse" x1="1020.0" y1="0" x2="1660.0" y2="0"><stop offset="0.0000" stop-color="#009900"/><stop offset="0.2047" stop-color="#029900"/><stop offset="0.2891" stop-color="#559900"/><stop offset="0.3438" stop-color="#999800"/><stop offset="0.3859" stop-color="#996b00"/><stop offset="0.4500" stop-color="#994400"/><stop offset="0.5563" stop-color="#992200"/><stop offset="0.7484" stop-color="#990700"/><stop offset="0.8984" stop-color="#990000"/><stop offset="1.0000" stop-color="#990000"/></linearGradient><linearGradient id="co1" gradientUnits="userSpaceOnUse" x1="1020.0" y1="0" x2="1660.0" y2="0"><stop offset="0.0000" stop-color="#009900"/><stop offset="0.2047" stop-color="#029900"/><stop offset="0.2875" stop-color="#539900"/><stop offset="0.3438" stop-color="#999700"/><stop offset="0.3859" stop-color="#996a00"/><stop offset="0.4500" stop-color="#994300"/><stop offset="0.5563" stop-color="#992200"/><stop offset="0.7484" stop-color="#990600"/><stop offset="0.8969" stop-color="#990000"/><stop offset="1.0000" stop-color="#990000"/></linearGradient><linearGradient id="co2" gradientUnits="userSpaceOnUse" x1="1020.0" y1="0" x2="1660.0" y2="0"><stop offset="0.0000" stop-color="#009900"/><stop offset="0.2062" stop-color="#029900"/><stop offset="0.2891" stop-color="#559900"/><stop offset="0.3438" stop-color="#999600"/><stop offset="0.3859" stop-color="#996a00"/><stop offset="0.4500" stop-color="#994300"/><stop offset="0.5563" stop-color="#992100"/><stop offset="0.7500" stop-color="#990600"/><stop offset="0.8984" stop-color="#990000"/><stop offset="1.0000" stop-color="#990000"/></linearGradient><linearGradient id="co3" gradientUnits="userSpaceOnUse" x1="1020.0" y1="0" x2="1660.0" y2="0"><stop offset="0.0000" stop-color="#009900"/><stop offset="0.2062" stop-color="#029900"/><stop offset="0.2875" stop-color="#539900"/><stop offset="0.3438" stop-color="#999600"/><stop offset="0.3859" stop-color="#996900"/><stop offset="0.4500" stop-color="#994200"/><stop offset="0.5563" stop-color="#992100"/><stop offset="0.7500" stop-color="#990500"/><stop offset="0.9000" stop-color="#990000"/><stop offset="1.0000" stop-color="#990000"/></linearGradient><linearGradient id="co4" gradientUnits="userSpaceOnUse" x1="1020.0" y1="0" x2="1660.0" y2="0"><stop offset="0.0000" stop-color="#009903"/><stop offset="0.2078" stop-color="#039900"/><stop offset="0.2891" stop-color="#559900"/><stop offset="0.3422" stop-color="#999700"/><stop offset="0.3828" stop-color="#996b00"/><stop offset="0.4453" stop-color="#994400"/><stop offset="0.5484" stop-color="#992200"/><stop offset="0.7359" stop-color="#990600"/><stop offset="0.8812" stop-color="#990000"/><stop offset="1.0000" stop-color="#990000"/></linearGradient><linearGradient id="co5" gradientUnits="userSpaceOnUse" x1="1020.0" y1="0" x2="1660.0" y2="0"><stop offset="0.0000" stop-color="#009906"/><stop offset="0.2078" stop-color="#029900"/><stop offset="0.2875" stop-color="#539900"/><stop offset="0.3422" stop-color="#999700"/><stop offset="0.3828" stop-color="#996a00"/><stop offset="0.4453" stop-color="#994300"/><stop offset="0.5484" stop-color="#992100"/><stop offset="0.7359" stop-color="#990600"/><stop offset="0.8797" stop-color="#990000"/><stop offset="1.0000" stop-color="#990000"/></linearGradient><linearGradient id="co6" gradientUnits="userSpaceOnUse" x1="1020.0" y1="0" x2="1660.0" y2="0"><stop offset="0.0000" stop-color="#009909"/><stop offset="0.2094" stop-color="#039900"/><stop offset="0.2891" stop-color="#559900"/><stop offset="0.3422" stop-color="#999600"/><stop offset="0.3828" stop-color="#996900"/><stop offset="0.4453" stop-color="#994200"/><stop offset="0.5484" stop-color="#992100"/><stop offset="0.7359" stop-color="#990600"/><stop offset="0.8812" stop-color="#990000"/><stop offset="1.0000" stop-color="#990000"/></linearGradient><linearGradient id="co7" gradientUnits="userSpaceOnUse" x1="1020.0" y1="0" x2="1660.0" y2="0"><stop offset="0.0000" stop-color="#00990c"/><stop offset="0.2094" stop-color="#029900"/><stop offset="0.2875" stop-color="#539900"/><stop offset="0.3406" stop-color="#999800"/><stop offset="0.3797" stop-color="#996b00"/><stop offset="0.4406" stop-color="#994400"/><stop offset="0.5406" stop-color="#992200"/><stop offset="0.7219" stop-color="#990700"/><stop offset="0.8641" stop-color="#990000"/><stop offset="1.0000" stop-color="#990000"/></linearGradient><linearGradient id="co8" gradientUnits="userSpaceOnUse" x1="1020.0" y1="0" x2="1660.0" y2="0"><stop offset="0.0000" stop-color="#00990f"/><stop offset="0.2109" stop-color="#039904"/><stop offset="0.2891" stop-color="#559900"/><stop offset="0.3406" stop-color="#999700"/><stop offset="0.3797" stop-color="#996b00"/><stop offset="0.4406" stop-color="#994300"/><stop offset="0.5406" stop-color="#992200"/><stop offset="0.7219" stop-color="#990600"/><stop offset="0.8625" stop-color="#990000"/><stop offset="1.0000" stop-color="#990000"/></linearGradient><linearGradient id="co9" gradientUnits="userSpaceOnUse" x1="1020.0" y1="0" x2="1660.0" y2="0"><stop offset="0.0000" stop-color="#009912"/><stop offset="0.2109" stop-color="#029908"/><stop offset="0.2875" stop-color="#539902"/><stop offset="0.3406" stop-color="#999600"/><stop offset="0.3797" stop-color="#996a00"/><stop offset="0.4406" stop-color="#994300"/><stop offset="0.5406" stop-color="#992100"/><stop offset="0.7234" stop-color="#990600"/><stop offset="0.8641" stop-color="#990000"/><stop offset="1.0000" stop-color="#990000"/></linearGradient><linearGradient id="co10" gradientUnits="userSpaceOnUse" x1="1020.0" y1="0" x2="1660.0" y2="0"><stop offset="0.0000" stop-color="#009915"/><stop offset="0.2125" stop-color="#03990c"/><stop offset="0.2891" stop-color="#559906"/><stop offset="0.3391" stop-color="#999802"/><stop offset="0.3781" stop-color="#996b00"/><stop offset="0.4375" stop-color="#994300"/><stop offset="0.5344" stop-color="#992200"/><stop offset="0.7109" stop-color="#990700"/><stop offset="0.8484" stop-color="#990000"/><stop offset="1.0000" stop-color="#990000"/></linearGradient><linearGradient id="co11" gradientUnits="userSpaceOnUse" x1="1020.0" y1="0" x2="1660.0" y2="0"><stop offset="0.0000" stop-color="#009918"/><stop offset="0.2125" stop-color="#029910"/><stop offset="0.2891" stop-color="#55990b"/><stop offset="0.3391" stop-color="#999707"/><stop offset="0.3766" stop-color="#996b02"/><stop offset="0.4344" stop-color="#994400"/><stop offset="0.5297" stop-color="#992300"/><stop offset="0.7031" stop-color="#990700"/><stop offset="0.8391" stop-color="#990000"/><stop offset="1.0000" stop-color="#990000"/></linearGradient><linearGradient id="co12" gradientUnits="userSpaceOnUse" x1="1020.0" y1="0" x2="1660.0" y2="0"><stop offset="0.0000" stop-color="#00991b"/><stop offset="0.2141" stop-color="#039914"/><stop offset="0.2891" stop-color="#559910"/><stop offset="0.3391" stop-color="#99970c"/><stop offset="0.3766" stop-color="#996b06"/><stop offset="0.4344" stop-color="#994401"/><stop offset="0.5297" stop-color="#992200"/><stop offset="0.7031" stop-color="#990700"/><stop offset="0.8375" stop-color="#990000"/><stop offset="1.0000" stop-color="#990000"/></linearGradient><linearGradient id="co13" gradientUnits="userSpaceOnUse" x1="1020.0" y1="0" x2="1660.0" y2="0"><stop offset="0.0000" stop-color="#00991e"/><stop offset="0.2141" stop-color="#029918"/><stop offset="0.2891" stop-color="#559915"/><stop offset="0.3391" stop-color="#999611"/><stop offset="0.3766" stop-color="#996a0a"/><stop offset="0.4344" stop-color="#994304"/><stop offset="0.5297" stop-color="#992200"/><stop offset="0.7031" stop-color="#990600"/><stop offset="0.8359" stop-color="#990000"/><stop offset="1.0000" stop-color="#990000"/></linearGradient><linearGradient id="co14" gradientUnits="userSpaceOnUse" x1="1020.0" y1="0" x2="1660.0" y2="0"><stop offset="0.0000" stop-color="#009921"/><stop offset="0.2156" stop-color="#03991d"/><stop offset="0.2891" stop-color="#55991a"/><stop offset="0.3375" stop-color="#999817"/><stop offset="0.3750" stop-color="#996b0f"/><stop offset="0.4313" stop-color="#994408"/><stop offset="0.5250" stop-color="#992201"/><stop offset="0.6953" stop-color="#990700"/><stop offset="0.8266" stop-color="#990000"/><stop offset="1.0000" stop-color="#990000"/></linearGradient><linearGradient id="co15" gradientUnits="userSpaceOnUse" x1="1020.0" y1="0" x2="1660.0" y2="0"><stop offset="0.0000" stop-color="#009925"/><stop offset="0.2156" stop-color="#029921"/><stop offset="0.2891" stop-color="#55991f"/><stop offset="0.3375" stop-color="#99971d"/><stop offset="0.3750" stop-color="#996a13"/><stop offset="0.4313" stop-color="#99430b"/><stop offset="0.5250" stop-color="#992203"/><stop offset="0.6953" stop-color="#990600"/><stop offset="0.8250" stop-color="#990000"/><stop offset="1.0000" stop-color="#990000"/></linearGradient><linearGradient id="co16" gradientUnits="userSpaceOnUse" x1="1020.0" y1="0" x2="1660.0" y2="0"><stop offset="0.0000" stop-color="#009928"/><stop offset="0.2156" stop-color="#029926"/><stop offset="0.2875" stop-color="#539924"/><stop offset="0.3375" stop-color="#999622"/><stop offset="0.3750" stop-color="#996917"/><stop offset="0.4313" stop-color="#99420e"/><stop offset="0.5250" stop-color="#992106"/><stop offset="0.6953" stop-color="#990600"/><stop offset="0.8266" stop-color="#990000"/><stop offset="1.0000" stop-color="#990000"/></linearGradient><linearGradient id="co17" gradientUnits="userSpaceOnUse" x1="1020.0" y1="0" x2="1660.0" y2="0"><stop offset="0.0000" stop-color="#00992b"/><stop offset="0.2172" stop-color="#02992a"/><stop offset="0.2891" stop-color="#55992a"/><stop offset="0.3359" stop-color="#999829"/><stop offset="0.3719" stop-color="#996b1c"/><stop offset="0.4266" stop-color="#994412"/><stop offset="0.5172" stop-color="#992208"/><stop offset="0.6813" stop-color="#990701"/><stop offset="0.8094" stop-color="#990000"/><stop offset="1.0000" stop-color="#990000"/></linearGradient><linearGradient id="co18" gradientUnits="userSpaceOnUse" x1="1020.0" y1="0" x2="1660.0" y2="0"><stop offset="0.0000" stop-color="#00992f"/><stop offset="0.2172" stop-color="#02992f"/><stop offset="0.2875" stop-color="#53992f"/><stop offset="0.3359" stop-color="#99972f"/><stop offset="0.3719" stop-color="#996a21"/><stop offset="0.4266" stop-color="#994315"/><stop offset="0.5172" stop-color="#99220b"/><stop offset="0.6813" stop-color="#990602"/><stop offset="0.8078" stop-color="#990000"/><stop offset="1.0000" stop-color="#990000"/></linearGradient><linearGradient id="co19" gradientUnits="userSpaceOnUse" x1="1020.0" y1="0" x2="1660.0" y2="0"><stop offset="0.0000" stop-color="#009932"/><stop offset="0.2188" stop-color="#029934"/><stop offset="0.2891" stop-color="#559935"/><stop offset="0.3359" stop-color="#999734"/><stop offset="0.3719" stop-color="#996a25"/><stop offset="0.4266" stop-color="#994318"/><stop offset="0.5172" stop-color="#99210d"/><stop offset="0.6813" stop-color="#990604"/><stop offset="0.8078" stop-color="#990000"/><stop offset="1.0000" stop-color="#990000"/></linearGradient><linearGradient id="co20" gradientUnits="userSpaceOnUse" x1="1020.0" y1="0" x2="1660.0" y2="0"><stop offset="0.0000" stop-color="#009936"/><stop offset="0.2188" stop-color="#029939"/><stop offset="0.2875" stop-color="#53993a"/><stop offset="0.3359" stop-color="#99963a"/><stop offset="0.3719" stop-color="#99692a"/><stop offset="0.4266" stop-color="#99421b"/><stop offset="0.5172" stop-color="#99210f"/><stop offset="0.6828" stop-color="#990505"/><stop offset="0.8109" stop-color="#990001"/><stop offset="1.0000" stop-color="#990000"/></linearGradient><linearGradient id="co21" gradientUnits="userSpaceOnUse" x1="1020.0" y1="0" x2="1660.0" y2="0"><stop offset="0.0000" stop-color="#009939"/><stop offset="0.2203" stop-color="#03993e"/><stop offset="0.2891" stop-color="#559940"/><stop offset="0.3344" stop-color="#999841"/><stop offset="0.3688" stop-color="#996b30"/><stop offset="0.4219" stop-color="#994420"/><stop offset="0.5094" stop-color="#992212"/><stop offset="0.6672" stop-color="#990707"/><stop offset="0.7906" stop-color="#990003"/><stop offset="1.0000" stop-color="#990000"/></linearGradient><linearGradient id="co22" gradientUnits="userSpaceOnUse" x1="1020.0" y1="0" x2="1660.0" y2="0"><stop offset="0.0000" stop-color="#00993d"/><stop offset="0.2203" stop-color="#029943"/><stop offset="0.2891" stop-color="#559946"/><stop offset="0.3344" stop-color="#999748"/><stop offset="0.3688" stop-color="#996a34"/><stop offset="0.4219" stop-color="#994323"/><stop offset="0.5094" stop-color="#992215"/><stop offset="0.6687" stop-color="#990609"/><stop offset="0.7906" stop-color="#990004"/><stop offset="1.0000" stop-color="#990000"/></linearGradient><linearGradient id="co23" gradientUnits="userSpaceOnUse" x1="1020.0" y1="0" x2="1660.0" y2="0"><stop offset="0.0000" stop-color="#009940"/><stop offset="0.2219" stop-color="#039948"/><stop offset="0.2891" stop-color="#55994c"/><stop offset="0.3344" stop-color="#99964e"/><stop offset="0.3688" stop-color="#996939"/><stop offset="0.4219" stop-color="#994227"/><stop offset="0.5094" stop-color="#992117"/><stop offset="0.6687" stop-color="#99060a"/><stop offset="0.7922" stop-color="#990005"/><stop offset="1.0000" stop-color="#990000"/></linearGradient><linearGradient id="co24" gradientUnits="userSpaceOnUse" x1="1020.0" y1="0" x2="1660.0" y2="0"><stop offset="0.0000" stop-color="#009944"/><stop offset="0.2219" stop-color="#02994d"/><stop offset="0.2891" stop-color="#559952"/><stop offset="0.3328" stop-color="#999856"/><stop offset="0.3656" stop-color="#996c3f"/><stop offset="0.4156" stop-color="#99452c"/><stop offset="0.4984" stop-color="#99231b"/><stop offset="0.6484" stop-color="#99070d"/><stop offset="0.7688" stop-color="#990007"/><stop offset="1.0000" stop-color="#990001"/></linearGradient><linearGradient id="co25" gradientUnits="userSpaceOnUse" x1="1020.0" y1="0" x2="1660.0" y2="0"><stop offset="0.0000" stop-color="#009947"/><stop offset="0.2234" stop-color="#039953"/><stop offset="0.2891" stop-color="#559958"/><stop offset="0.3328" stop-color="#99975c"/><stop offset="0.3656" stop-color="#996b44"/><stop offset="0.4156" stop-color="#99442f"/><stop offset="0.4984" stop-color="#99231d"/><stop offset="0.6484" stop-color="#99070e"/><stop offset="0.7672" stop-color="#990008"/><stop offset="1.0000" stop-color="#990002"/></linearGradient><linearGradient id="co26" gradientUnits="userSpaceOnUse" x1="1020.0" y1="0" x2="1660.0" y2="0"><stop offset="0.0000" stop-color="#00994b"/><stop offset="0.2234" stop-color="#029958"/><stop offset="0.2891" stop-color="#55995f"/><stop offset="0.3328" stop-color="#999763"/><stop offset="0.3656" stop-color="#996a49"/><stop offset="0.4156" stop-color="#994333"/><stop offset="0.4984" stop-color="#992220"/><stop offset="0.6484" stop-color="#990710"/><stop offset="0.7656" stop-color="#99000a"/><stop offset="1.0000" stop-color="#990003"/></linearGradient><linearGradient id="co27" gradientUnits="userSpaceOnUse" x1="1020.0" y1="0" x2="1660.0" y2="0"><stop offset="0.0000" stop-color="#00994f"/><stop offset="0.2250" stop-color="#03995e"/><stop offset="0.2891" stop-color="#559965"/><stop offset="0.3312" stop-color="#99986b"/><stop offset="0.3641" stop-color="#996b4f"/><stop offset="0.4141" stop-color="#994437"/><stop offset="0.4953" stop-color="#992223"/><stop offset="0.6438" stop-color="#990712"/><stop offset="0.7594" stop-color="#99000b"/><stop offset="1.0000" stop-color="#990004"/></linearGradient><linearGradient id="co28" gradientUnits="userSpaceOnUse" x1="1020.0" y1="0" x2="1660.0" y2="0"><stop offset="0.0000" stop-color="#009953"/><stop offset="0.2250" stop-color="#029964"/><stop offset="0.2891" stop-color="#54996c"/><stop offset="0.3312" stop-color="#999872"/><stop offset="0.3625" stop-color="#996c56"/><stop offset="0.4109" stop-color="#99453c"/><stop offset="0.4906" stop-color="#992326"/><stop offset="0.6344" stop-color="#990714"/><stop offset="0.7500" stop-color="#99000d"/><stop offset="1.0000" stop-color="#990004"/></linearGradient><linearGradient id="co29" gradientUnits="userSpaceOnUse" x1="1020.0" y1="0" x2="1660.0" y2="0"><stop offset="0.0000" stop-color="#009957"/><stop offset="0.2266" stop-color="#03996a"/><stop offset="0.2891" stop-color="#549973"/><stop offset="0.3312" stop-color="#999779"/><stop offset="0.3625" stop-color="#996b5b"/><stop offset="0.4109" stop-color="#994440"/><stop offset="0.4906" stop-color="#992229"/><stop offset="0.6359" stop-color="#990716"/><stop offset="0.7484" stop-color="#99000e"/><stop offset="1.0000" stop-color="#990005"/></linearGradient><linearGradient id="co30" gradientUnits="userSpaceOnUse" x1="1020.0" y1="0" x2="1660.0" y2="0"><stop offset="0.0000" stop-color="#00995a"/><stop offset="0.2266" stop-color="#029970"/><stop offset="0.2891" stop-color="#54997a"/><stop offset="0.3312" stop-color="#999680"/><stop offset="0.3625" stop-color="#996a60"/><stop offset="0.4109" stop-color="#994344"/><stop offset="0.4906" stop-color="#99222b"/><stop offset="0.6359" stop-color="#990617"/><stop offset="0.7469" stop-color="#990010"/><stop offset="1.0000" stop-color="#990006"/></linearGradient><linearGradient id="co31" gradientUnits="userSpaceOnUse" x1="1020.0" y1="0" x2="1660.0" y2="0"><stop offset="0.0000" stop-color="#00995e"/><stop offset="0.2266" stop-color="#019976"/><stop offset="0.2875" stop-color="#529981"/><stop offset="0.3297" stop-color="#99988a"/><stop offset="0.3609" stop-color="#996b67"/><stop offset="0.4078" stop-color="#994449"/><stop offset="0.4859" stop-color="#99222f"/><stop offset="0.6266" stop-color="#99071a"/><stop offset="0.7375" stop-color="#990011"/><stop offset="1.0000" stop-color="#990007"/></linearGradient><linearGradient id="co32" gradientUnits="userSpaceOnUse" x1="1020.0" y1="0" x2="1660.0" y2="0"><stop offset="0.0000" stop-color="#009962"/><stop offset="0.2281" stop-color="#02997d"/><stop offset="0.2891" stop-color="#549989"/><stop offset="0.3297" stop-color="#999791"/><stop offset="0.3609" stop-color="#996a6d"/><stop offset="0.4078" stop-color="#99434d"/><stop offset="0.4859" stop-color="#992232"/><stop offset="0.6281" stop-color="#99061c"/><stop offset="0.7375" stop-color="#990013"/><stop offset="1.0000" stop-color="#990008"/></linearGradient><linearGradient id="co33" gradientUnits="userSpaceOnUse" x1="1020.0" y1="0" x2="1660.0" y2="0"><stop offset="0.0000" stop-color="#009967"/><stop offset="0.2281" stop-color="#019983"/><stop offset="0.2875" stop-color="#529990"/><stop offset="0.3297" stop-color="#999699"/><stop offset="0.3594" stop-color="#996b74"/><stop offset="0.4062" stop-color="#994352"/><stop offset="0.4828" stop-color="#992235"/><stop offset="0.6219" stop-color="#99061e"/><stop offset="0.7297" stop-color="#990015"/><stop offset="1.0000" stop-color="#990009"/></linearGradient><linearGradient id="co34" gradientUnits="userSpaceOnUse" x1="1020.0" y1="0" x2="1660.0" y2="0"><stop offset="0.0000" stop-color="#00996b"/><stop offset="0.2234" stop-color="#009989"/><stop offset="0.2344" stop-color="#08998b"/><stop offset="0.2938" stop-color="#5c9999"/><stop offset="0.3359" stop-color="#998a97"/><stop offset="0.3688" stop-color="#996070"/><stop offset="0.4203" stop-color="#993a4f"/><stop offset="0.5078" stop-color="#991a32"/><stop offset="0.6719" stop-color="#99001b"/><stop offset="1.0000" stop-color="#99000a"/></linearGradient><linearGradient id="co35" gradientUnits="userSpaceOnUse" x1="1020.0" y1="0" x2="1660.0" y2="0"><stop offset="0.0000" stop-color="#00996f"/><stop offset="0.2156" stop-color="#00998d"/><stop offset="0.2313" stop-color="#039991"/><stop offset="0.2812" stop-color="#469599"/><stop offset="0.3406" stop-color="#998297"/><stop offset="0.3766" stop-color="#99586f"/><stop offset="0.4328" stop-color="#99334d"/><stop offset="0.5297" stop-color="#991530"/><stop offset="0.6844" stop-color="#99001b"/><stop offset="1.0000" stop-color="#99000b"/></linearGradient><linearGradient id="co36" gradientUnits="userSpaceOnUse" x1="1020.0" y1="0" x2="1660.0" y2="0"><stop offset="0.0000" stop-color="#009973"/><stop offset="0.2094" stop-color="#009993"/><stop offset="0.2313" stop-color="#029998"/><stop offset="0.3422" stop-color="#977d99"/><stop offset="0.3859" stop-color="#994f6c"/><stop offset="0.4484" stop-color="#992c4a"/><stop offset="0.5578" stop-color="#990f2d"/><stop offset="0.6922" stop-color="#99001c"/><stop offset="1.0000" stop-color="#99000b"/></linearGradient><linearGradient id="co37" gradientUnits="userSpaceOnUse" x1="1020.0" y1="0" x2="1660.0" y2="0"><stop offset="0.0000" stop-color="#009977"/><stop offset="0.2031" stop-color="#009998"/><stop offset="0.2328" stop-color="#039399"/><stop offset="0.3469" stop-color="#977599"/><stop offset="0.3922" stop-color="#99496c"/><stop offset="0.4578" stop-color="#992749"/><stop offset="0.5734" stop-color="#990b2c"/><stop offset="0.6922" stop-color="#99001d"/><stop offset="1.0000" stop-color="#99000c"/></linearGradient><linearGradient id="co38" gradientUnits="userSpaceOnUse" x1="1020.0" y1="0" x2="1660.0" y2="0"><stop offset="0.0000" stop-color="#00997c"/><stop offset="0.1938" stop-color="#009699"/><stop offset="0.2328" stop-color="#028d99"/><stop offset="0.3500" stop-color="#956e99"/><stop offset="0.3609" stop-color="#99648f"/><stop offset="0.4047" stop-color="#994068"/><stop offset="0.4766" stop-color="#992046"/><stop offset="0.6047" stop-color="#990629"/><stop offset="0.7063" stop-color="#99001e"/><stop offset="1.0000" stop-color="#99000d"/></linearGradient><linearGradient id="co39" gradientUnits="userSpaceOnUse" x1="1020.0" y1="0" x2="1660.0" y2="0"><stop offset="0.0000" stop-color="#009980"/><stop offset="0.1656" stop-color="#009699"/><stop offset="0.2328" stop-color="#018799"/><stop offset="0.3547" stop-color="#956899"/><stop offset="0.3656" stop-color="#995e8f"/><stop offset="0.4109" stop-color="#993b68"/><stop offset="0.4844" stop-color="#991d46"/><stop offset="0.6156" stop-color="#990429"/><stop offset="0.7469" stop-color="#99001b"/><stop offset="1.0000" stop-color="#99000e"/></linearGradient><linearGradient id="co40" gradientUnits="userSpaceOnUse" x1="1020.0" y1="0" x2="1660.0" y2="0"><stop offset="0.0000" stop-color="#009985"/><stop offset="0.1391" stop-color="#009699"/><stop offset="0.2344" stop-color="#028199"/><stop offset="0.3594" stop-color="#956199"/><stop offset="0.3719" stop-color="#99578e"/><stop offset="0.4203" stop-color="#993566"/><stop offset="0.4984" stop-color="#991944"/><stop offset="0.6391" stop-color="#990128"/><stop offset="0.9313" stop-color="#990012"/><stop offset="1.0000" stop-color="#99000f"/></linearGradient><linearGradient id="co41" gradientUnits="userSpaceOnUse" x1="1020.0" y1="0" x2="1660.0" y2="0"><stop offset="0.0000" stop-color="#009989"/><stop offset="0.1125" stop-color="#009699"/><stop offset="0.2359" stop-color="#037b99"/><stop offset="0.3656" stop-color="#975b99"/><stop offset="0.4188" stop-color="#99356b"/><stop offset="0.4938" stop-color="#991948"/><stop offset="0.6266" stop-color="#99022b"/><stop offset="0.8953" stop-color="#990014"/><stop offset="1.0000" stop-color="#990010"/></linearGradient><linearGradient id="co42" gradientUnits="userSpaceOnUse" x1="1020.0" y1="0" x2="1660.0" y2="0"><stop offset="0.0000" stop-color="#00998e"/><stop offset="0.0875" stop-color="#009599"/><stop offset="0.2359" stop-color="#027699"/><stop offset="0.3688" stop-color="#955699"/><stop offset="0.3844" stop-color="#994a8b"/><stop offset="0.4359" stop-color="#992c64"/><stop offset="0.5219" stop-color="#991243"/><stop offset="0.6578" stop-color="#990029"/><stop offset="0.9578" stop-color="#990012"/><stop offset="1.0000" stop-color="#990011"/></linearGradient><linearGradient id="co43" gradientUnits="userSpaceOnUse" x1="1020.0" y1="0" x2="1660.0" y2="0"><stop offset="0.0000" stop-color="#009992"/><stop offset="0.0672" stop-color="#009499"/><stop offset="0.2375" stop-color="#037199"/><stop offset="0.3750" stop-color="#975099"/><stop offset="0.4313" stop-color="#992d6b"/><stop offset="0.5109" stop-color="#991448"/><stop offset="0.6484" stop-color="#99002c"/><stop offset="0.9297" stop-color="#990015"/><stop offset="1.0000" stop-color="#990012"/></linearGradient><linearGradient id="co44" gradientUnits="userSpaceOnUse" x1="1020.0" y1="0" x2="1660.0" y2="0"><stop offset="0.0000" stop-color="#009997"/><stop offset="0.2375" stop-color="#026d99"/><stop offset="0.3781" stop-color="#954c99"/><stop offset="0.3984" stop-color="#993e88"/><stop offset="0.4562" stop-color="#992361"/><stop offset="0.5516" stop-color="#990b40"/><stop offset="0.6578" stop-color="#99002c"/><stop offset="0.9437" stop-color="#990015"/><stop offset="1.0000" stop-color="#990012"/></linearGradient><linearGradient id="co45" gradientUnits="userSpaceOnUse" x1="1020.0" y1="0" x2="1660.0" y2="0"><stop offset="0.0000" stop-color="#009699"/><stop offset="0.2391" stop-color="#036899"/><stop offset="0.3844" stop-color="#974799"/><stop offset="0.4437" stop-color="#99266b"/><stop offset="0.5281" stop-color="#990f48"/><stop offset="0.6484" stop-color="#99002f"/><stop offset="0.9172" stop-color="#990017"/><stop offset="1.0000" stop-color="#990013"/></linearGradient><linearGradient id="co46" gradientUnits="userSpaceOnUse" x1="1020.0" y1="0" x2="1660.0" y2="0"><stop offset="0.0000" stop-color="#009199"/><stop offset="0.2391" stop-color="#026499"/><stop offset="0.3875" stop-color="#954299"/><stop offset="0.4125" stop-color="#993485"/><stop offset="0.4750" stop-color="#991b5e"/><stop offset="0.5797" stop-color="#99053d"/><stop offset="0.6750" stop-color="#99002d"/><stop offset="0.9688" stop-color="#990016"/><stop offset="1.0000" stop-color="#990014"/></linearGradient><linearGradient id="co47" gradientUnits="userSpaceOnUse" x1="1020.0" y1="0" x2="1660.0" y2="0"><stop offset="0.0000" stop-color="#008d99"/><stop offset="0.2406" stop-color="#036099"/><stop offset="0.3922" stop-color="#953e99"/><stop offset="0.4188" stop-color="#993084"/><stop offset="0.4844" stop-color="#99175d"/><stop offset="0.5938" stop-color="#99033c"/><stop offset="0.7953" stop-color="#990022"/><stop offset="1.0000" stop-color="#990015"/></linearGradient><linearGradient id="co48" gradientUnits="userSpaceOnUse" x1="1020.0" y1="0" x2="1660.0" y2="0"><stop offset="0.0000" stop-color="#008999"/><stop offset="0.2406" stop-color="#025d99"/><stop offset="0.3969" stop-color="#953a99"/><stop offset="0.4266" stop-color="#992b82"/><stop offset="0.4953" stop-color="#99145c"/><stop offset="0.6094" stop-color="#99003b"/><stop offset="0.8219" stop-color="#990021"/><stop offset="1.0000" stop-color="#990016"/></linearGradient><linearGradient id="co49" gradientUnits="userSpaceOnUse" x1="1020.0" y1="0" x2="1660.0" y2="0"><stop offset="0.0000" stop-color="#008599"/><stop offset="0.2422" stop-color="#035999"/><stop offset="0.4016" stop-color="#963699"/><stop offset="0.4344" stop-color="#992780"/><stop offset="0.5062" stop-color="#99115a"/><stop offset="0.6250" stop-color="#99003a"/><stop offset="0.8484" stop-color="#990020"/><stop offset="1.0000" stop-color="#990017"/></linearGradient><linearGradient id="co50" gradientUnits="userSpaceOnUse" x1="1020.0" y1="0" x2="1660.0" y2="0"><stop offset="0.0000" stop-color="#008199"/><stop offset="0.2422" stop-color="#025699"/><stop offset="0.4062" stop-color="#963399"/><stop offset="0.4422" stop-color="#99237e"/><stop offset="0.5172" stop-color="#990d59"/><stop offset="0.6250" stop-color="#99003c"/><stop offset="0.8438" stop-color="#990021"/><stop offset="1.0000" stop-color="#990018"/></linearGradient><linearGradient id="co51" gradientUnits="userSpaceOnUse" x1="1020.0" y1="0" x2="1660.0" y2="0"><stop offset="0.0000" stop-color="#007d99"/><stop offset="0.2437" stop-color="#035399"/><stop offset="0.4109" stop-color="#962f99"/><stop offset="0.4516" stop-color="#991e7c"/><stop offset="0.5297" stop-color="#990a57"/><stop offset="0.6234" stop-color="#99003e"/><stop offset="0.8375" stop-color="#990023"/><stop offset="1.0000" stop-color="#990019"/></linearGradient><linearGradient id="co52" gradientUnits="userSpaceOnUse" x1="1020.0" y1="0" x2="1660.0" y2="0"><stop offset="0.0000" stop-color="#007a99"/><stop offset="0.2437" stop-color="#025099"/><stop offset="0.4156" stop-color="#962c99"/><stop offset="0.4609" stop-color="#991a79"/><stop offset="0.5437" stop-color="#990754"/><stop offset="0.6266" stop-color="#99003f"/><stop offset="0.8391" stop-color="#990024"/><stop offset="1.0000" stop-color="#99001a"/></linearGradient><linearGradient id="co53" gradientUnits="userSpaceOnUse" x1="1020.0" y1="0" x2="1660.0" y2="0"><stop offset="0.0000" stop-color="#007799"/><stop offset="0.2453" stop-color="#024d99"/><stop offset="0.4203" stop-color="#962999"/><stop offset="0.4719" stop-color="#991676"/><stop offset="0.5594" stop-color="#990452"/><stop offset="0.6797" stop-color="#990038"/><stop offset="0.9391" stop-color="#99001e"/><stop offset="1.0000" stop-color="#99001b"/></linearGradient><linearGradient id="co54" gradientUnits="userSpaceOnUse" x1="1020.0" y1="0" x2="1660.0" y2="0"><stop offset="0.0000" stop-color="#007399"/><stop offset="0.2469" stop-color="#034a99"/><stop offset="0.4266" stop-color="#972599"/><stop offset="0.4984" stop-color="#990f6c"/><stop offset="0.6016" stop-color="#990049"/><stop offset="0.7844" stop-color="#99002c"/><stop offset="1.0000" stop-color="#99001b"/></linearGradient><linearGradient id="co55" gradientUnits="userSpaceOnUse" x1="1020.0" y1="0" x2="1660.0" y2="0"><stop offset="0.0000" stop-color="#007099"/><stop offset="0.2469" stop-color="#024799"/><stop offset="0.4297" stop-color="#962399"/><stop offset="0.5031" stop-color="#990d6c"/><stop offset="0.6016" stop-color="#99004b"/><stop offset="0.7812" stop-color="#99002d"/><stop offset="1.0000" stop-color="#99001c"/></linearGradient><linearGradient id="co56" gradientUnits="userSpaceOnUse" x1="1020.0" y1="0" x2="1660.0" y2="0"><stop offset="0.0000" stop-color="#006d99"/><stop offset="0.2484" stop-color="#034499"/><stop offset="0.4359" stop-color="#971f99"/><stop offset="0.5109" stop-color="#990a6c"/><stop offset="0.5984" stop-color="#99004e"/><stop offset="0.7719" stop-color="#990030"/><stop offset="1.0000" stop-color="#99001d"/></linearGradient><linearGradient id="co57" gradientUnits="userSpaceOnUse" x1="1020.0" y1="0" x2="1660.0" y2="0"><stop offset="0.0000" stop-color="#006a99"/><stop offset="0.2484" stop-color="#024299"/><stop offset="0.4391" stop-color="#961d99"/><stop offset="0.5219" stop-color="#990869"/><stop offset="0.6000" stop-color="#99004f"/><stop offset="0.7719" stop-color="#990031"/><stop offset="1.0000" stop-color="#99001e"/></linearGradient><linearGradient id="co58" gradientUnits="userSpaceOnUse" x1="1020.0" y1="0" x2="1660.0" y2="0"><stop offset="0.0000" stop-color="#006899"/><stop offset="0.2500" stop-color="#034099"/><stop offset="0.4437" stop-color="#961a99"/><stop offset="0.5281" stop-color="#990669"/><stop offset="0.6062" stop-color="#990050"/><stop offset="0.7797" stop-color="#990031"/><stop offset="1.0000" stop-color="#99001f"/></linearGradient><linearGradient id="co59" gradientUnits="userSpaceOnUse" x1="1020.0" y1="0" x2="1660.0" y2="0"><stop offset="0.0000" stop-color="#006599"/><stop offset="0.2500" stop-color="#023d99"/><stop offset="0.4484" stop-color="#961899"/><stop offset="0.5344" stop-color="#990469"/><stop offset="0.6438" stop-color="#990049"/><stop offset="0.8469" stop-color="#99002c"/><stop offset="1.0000" stop-color="#990020"/></linearGradient><linearGradient id="co60" gradientUnits="userSpaceOnUse" x1="1020.0" y1="0" x2="1660.0" y2="0"><stop offset="0.0000" stop-color="#006299"/><stop offset="0.2516" stop-color="#033b99"/><stop offset="0.4531" stop-color="#961699"/><stop offset="0.5406" stop-color="#99026a"/><stop offset="0.6609" stop-color="#990047"/><stop offset="0.8750" stop-color="#99002a"/><stop offset="1.0000" stop-color="#990021"/></linearGradient><linearGradient id="co61" gradientUnits="userSpaceOnUse" x1="1020.0" y1="0" x2="1660.0" y2="0"><stop offset="0.0000" stop-color="#006099"/><stop offset="0.2516" stop-color="#023999"/><stop offset="0.4578" stop-color="#961399"/><stop offset="0.5469" stop-color="#99016a"/><stop offset="0.6703" stop-color="#990047"/><stop offset="0.8891" stop-color="#99002a"/><stop offset="1.0000" stop-color="#990022"/></linearGradient><linearGradient id="co62" gradientUnits="userSpaceOnUse" x1="1020.0" y1="0" x2="1660.0" y2="0"><stop offset="0.0000" stop-color="#005d99"/><stop offset="0.2531" stop-color="#033799"/><stop offset="0.4625" stop-color="#961199"/><stop offset="0.5531" stop-color="#99006a"/><stop offset="0.6781" stop-color="#990047"/><stop offset="0.9000" stop-color="#99002a"/><stop offset="1.0000" stop-color="#990023"/></linearGradient><linearGradient id="co63" gradientUnits="userSpaceOnUse" x1="1020.0" y1="0" x2="1660.0" y2="0"><stop offset="0.0000" stop-color="#005b99"/><stop offset="0.2531" stop-color="#023599"/><stop offset="0.4672" stop-color="#960f99"/><stop offset="0.5594" stop-color="#99006a"/><stop offset="0.6859" stop-color="#990047"/><stop offset="0.9109" stop-color="#99002a"/><stop offset="1.0000" stop-color="#990024"/></linearGradient><linearGradient id="co64" gradientUnits="userSpaceOnUse" x1="1020.0" y1="0" x2="1660.0" y2="0"><stop offset="0.0000" stop-color="#005999"/><stop offset="0.2547" stop-color="#033399"/><stop offset="0.4719" stop-color="#960d99"/><stop offset="0.5563" stop-color="#99006d"/><stop offset="0.6797" stop-color="#99004a"/><stop offset="0.8969" stop-color="#99002d"/><stop offset="1.0000" stop-color="#990025"/></linearGradient><linearGradient id="co65" gradientUnits="userSpaceOnUse" x1="1020.0" y1="0" x2="1660.0" y2="0"><stop offset="0.0000" stop-color="#005799"/><stop offset="0.2562" stop-color="#033199"/><stop offset="0.4781" stop-color="#970a99"/><stop offset="0.5547" stop-color="#990070"/><stop offset="0.6750" stop-color="#99004d"/><stop offset="0.8844" stop-color="#99002f"/><stop offset="1.0000" stop-color="#990026"/></linearGradient><linearGradient id="co66" gradientUnits="userSpaceOnUse" x1="1020.0" y1="0" x2="1660.0" y2="0"><stop offset="0.0000" stop-color="#005599"/><stop offset="0.2562" stop-color="#032f99"/><stop offset="0.4813" stop-color="#960999"/><stop offset="0.5516" stop-color="#990074"/><stop offset="0.6687" stop-color="#990050"/><stop offset="0.8703" stop-color="#990031"/><stop offset="1.0000" stop-color="#990027"/></linearGradient><linearGradient id="co67" gradientUnits="userSpaceOnUse" x1="1020.0" y1="0" x2="1660.0" y2="0"><stop offset="0.0000" stop-color="#005399"/><stop offset="0.2578" stop-color="#032e99"/><stop offset="0.4875" stop-color="#970799"/><stop offset="0.5516" stop-color="#990077"/><stop offset="0.6656" stop-color="#990052"/><stop offset="0.8625" stop-color="#990033"/><stop offset="1.0000" stop-color="#990027"/></linearGradient><linearGradient id="co68" gradientUnits="userSpaceOnUse" x1="1020.0" y1="0" x2="1660.0" y2="0"><stop offset="0.0000" stop-color="#005199"/><stop offset="0.2578" stop-color="#022c99"/><stop offset="0.4906" stop-color="#960599"/><stop offset="0.5578" stop-color="#990076"/><stop offset="0.6750" stop-color="#990052"/><stop offset="0.8766" stop-color="#990033"/><stop offset="1.0000" stop-color="#990028"/></linearGradient><linearGradient id="co69" gradientUnits="userSpaceOnUse" x1="1020.0" y1="0" x2="1660.0" y2="0"><stop offset="0.0000" stop-color="#004f99"/><stop offset="0.2594" stop-color="#032a99"/><stop offset="0.4953" stop-color="#960399"/><stop offset="0.5969" stop-color="#99006a"/><stop offset="0.7375" stop-color="#990047"/><stop offset="0.9875" stop-color="#99002a"/><stop offset="1.0000" stop-color="#990029"/></linearGradient><linearGradient id="co70" gradientUnits="userSpaceOnUse" x1="1020.0" y1="0" x2="1660.0" y2="0"><stop offset="0.0000" stop-color="#004d99"/><stop offset="0.2594" stop-color="#022999"/><stop offset="0.5000" stop-color="#960299"/><stop offset="0.6031" stop-color="#99006a"/><stop offset="0.7469" stop-color="#990047"/><stop offset="1.0000" stop-color="#99002a"/></linearGradient><linearGradient id="co71" gradientUnits="userSpaceOnUse" x1="1020.0" y1="0" x2="1660.0" y2="0"><stop offset="0.0000" stop-color="#004b99"/><stop offset="0.2609" stop-color="#032799"/><stop offset="0.5047" stop-color="#960099"/><stop offset="0.6078" stop-color="#99006a"/><stop offset="0.7516" stop-color="#990048"/><stop offset="1.0000" stop-color="#99002b"/></linearGradient><linearGradient id="co72" gradientUnits="userSpaceOnUse" x1="1020.0" y1="0" x2="1660.0" y2="0"><stop offset="0.0000" stop-color="#004999"/><stop offset="0.2609" stop-color="#022699"/><stop offset="0.5094" stop-color="#960099"/><stop offset="0.6141" stop-color="#99006a"/><stop offset="0.7609" stop-color="#990047"/><stop offset="1.0000" stop-color="#99002c"/></linearGradient><linearGradient id="co73" gradientUnits="userSpaceOnUse" x1="1020.0" y1="0" x2="1660.0" y2="0"><stop offset="0.0000" stop-color="#004899"/><stop offset="0.2625" stop-color="#032499"/><stop offset="0.5141" stop-color="#960099"/><stop offset="0.6203" stop-color="#99006a"/><stop offset="0.7688" stop-color="#990048"/><stop offset="1.0000" stop-color="#99002d"/></linearGradient><linearGradient id="co74" gradientUnits="userSpaceOnUse" x1="1020.0" y1="0" x2="1660.0" y2="0"><stop offset="0.0000" stop-color="#004699"/><stop offset="0.2625" stop-color="#022399"/><stop offset="0.5125" stop-color="#920099"/><stop offset="0.5312" stop-color="#990094"/><stop offset="0.6234" stop-color="#99006b"/><stop offset="0.7719" stop-color="#990048"/><stop offset="1.0000" stop-color="#99002e"/></linearGradient><linearGradient id="co75" gradientUnits="userSpaceOnUse" x1="1020.0" y1="0" x2="1660.0" y2="0"><stop offset="0.0000" stop-color="#004499"/><stop offset="0.2641" stop-color="#032299"/><stop offset="0.5078" stop-color="#8d0099"/><stop offset="0.5344" stop-color="#990095"/><stop offset="0.6266" stop-color="#99006c"/><stop offset="0.7750" stop-color="#990049"/><stop offset="1.0000" stop-color="#99002f"/></linearGradient><linearGradient id="co76" gradientUnits="userSpaceOnUse" x1="1020.0" y1="0" x2="1660.0" y2="0"><stop offset="0.0000" stop-color="#004399"/><stop offset="0.2641" stop-color="#022099"/><stop offset="0.5031" stop-color="#870099"/><stop offset="0.5375" stop-color="#990096"/><stop offset="0.6312" stop-color="#99006d"/><stop offset="0.7812" stop-color="#99004a"/><stop offset="1.0000" stop-color="#990030"/></linearGradient><linearGradient id="co77" gradientUnits="userSpaceOnUse" x1="1020.0" y1="0" x2="1660.0" y2="0"><stop offset="0.0000" stop-color="#004199"/><stop offset="0.2656" stop-color="#031f99"/><stop offset="0.5000" stop-color="#830099"/><stop offset="0.5422" stop-color="#990096"/><stop offset="0.6359" stop-color="#99006d"/><stop offset="0.7875" stop-color="#99004a"/><stop offset="1.0000" stop-color="#990031"/></linearGradient><linearGradient id="co78" gradientUnits="userSpaceOnUse" x1="1020.0" y1="0" x2="1660.0" y2="0"><stop offset="0.0000" stop-color="#004099"/><stop offset="0.2672" stop-color="#031e99"/><stop offset="0.4953" stop-color="#7e0099"/><stop offset="0.5469" stop-color="#990096"/><stop offset="0.6422" stop-color="#99006d"/><stop offset="0.7953" stop-color="#99004a"/><stop offset="1.0000" stop-color="#990032"/></linearGradient><linearGradient id="co79" gradientUnits="userSpaceOnUse" x1="1020.0" y1="0" x2="1660.0" y2="0"><stop offset="0.0000" stop-color="#003e99"/><stop offset="0.2672" stop-color="#031d99"/><stop offset="0.4906" stop-color="#790099"/><stop offset="0.5516" stop-color="#990096"/><stop offset="0.6484" stop-color="#99006d"/><stop offset="0.8047" stop-color="#99004a"/><stop offset="1.0000" stop-color="#990033"/></linearGradient><linearGradient id="co80" gradientUnits="userSpaceOnUse" x1="1020.0" y1="0" x2="1660.0" y2="0"><stop offset="0.0000" stop-color="#003d99"/><stop offset="0.2687" stop-color="#031b99"/><stop offset="0.4875" stop-color="#750099"/><stop offset="0.5563" stop-color="#990096"/><stop offset="0.6547" stop-color="#99006d"/><stop offset="0.8125" stop-color="#99004a"/><stop offset="1.0000" stop-color="#990034"/></linearGradient><linearGradient id="co81" gradientUnits="userSpaceOnUse" x1="1020.0" y1="0" x2="1660.0" y2="0"><stop offset="0.0000" stop-color="#003b99"/><stop offset="0.2687" stop-color="#031a99"/><stop offset="0.4828" stop-color="#700099"/><stop offset="0.5609" stop-color="#990096"/><stop offset="0.6609" stop-color="#99006d"/><stop offset="0.8219" stop-color="#99004a"/><stop offset="1.0000" stop-color="#990035"/></linearGradient><linearGradient id="co82" gradientUnits="userSpaceOnUse" x1="1020.0" y1="0" x2="1660.0" y2="0"><stop offset="0.0000" stop-color="#003a99"/><stop offset="0.2703" stop-color="#031999"/><stop offset="0.4781" stop-color="#6c0099"/><stop offset="0.5656" stop-color="#990096"/><stop offset="0.6672" stop-color="#99006d"/><stop offset="0.8297" stop-color="#99004a"/><stop offset="1.0000" stop-color="#990036"/></linearGradient><linearGradient id="co83" gradientUnits="userSpaceOnUse" x1="1020.0" y1="0" x2="1660.0" y2="0"><stop offset="0.0000" stop-color="#003999"/><stop offset="0.2703" stop-color="#031899"/><stop offset="0.4750" stop-color="#680099"/><stop offset="0.5703" stop-color="#990096"/><stop offset="0.6734" stop-color="#99006d"/><stop offset="0.8391" stop-color="#99004a"/><stop offset="1.0000" stop-color="#990037"/></linearGradient><linearGradient id="co84" gradientUnits="userSpaceOnUse" x1="1020.0" y1="0" x2="1660.0" y2="0"><stop offset="0.0000" stop-color="#003899"/><stop offset="0.2719" stop-color="#031799"/><stop offset="0.4703" stop-color="#640099"/><stop offset="0.5750" stop-color="#990096"/><stop offset="0.6781" stop-color="#99006d"/><stop offset="0.8438" stop-color="#99004a"/><stop offset="1.0000" stop-color="#990038"/></linearGradient><linearGradient id="co85" gradientUnits="userSpaceOnUse" x1="1020.0" y1="0" x2="1660.0" y2="0"><stop offset="0.0000" stop-color="#003699"/><stop offset="0.2719" stop-color="#021699"/><stop offset="0.4656" stop-color="#600099"/><stop offset="0.5797" stop-color="#990096"/><stop offset="0.6844" stop-color="#99006d"/><stop offset="0.8531" stop-color="#99004a"/><stop offset="1.0000" stop-color="#990039"/></linearGradient><linearGradient id="co86" gradientUnits="userSpaceOnUse" x1="1020.0" y1="0" x2="1660.0" y2="0"><stop offset="0.0000" stop-color="#003599"/><stop offset="0.2734" stop-color="#031599"/><stop offset="0.4625" stop-color="#5d0099"/><stop offset="0.5844" stop-color="#990096"/><stop offset="0.6906" stop-color="#99006d"/><stop offset="0.8609" stop-color="#99004a"/><stop offset="1.0000" stop-color="#99003a"/></linearGradient><linearGradient id="co87" gradientUnits="userSpaceOnUse" x1="1020.0" y1="0" x2="1660.0" y2="0"><stop offset="0.0000" stop-color="#003499"/><stop offset="0.2734" stop-color="#021499"/><stop offset="0.4578" stop-color="#590099"/><stop offset="0.5891" stop-color="#990096"/><stop offset="0.6969" stop-color="#99006d"/><stop offset="0.8703" stop-color="#99004a"/><stop offset="1.0000" stop-color="#99003b"/></linearGradient><linearGradient id="co88" gradientUnits="userSpaceOnUse" x1="1020.0" y1="0" x2="1660.0" y2="0"><stop offset="0.0000" stop-color="#003399"/><stop offset="0.2750" stop-color="#031399"/><stop offset="0.4547" stop-color="#560099"/><stop offset="0.5938" stop-color="#990097"/><stop offset="0.7031" stop-color="#99006d"/><stop offset="0.8781" stop-color="#99004a"/><stop offset="1.0000" stop-color="#99003b"/></linearGradient><linearGradient id="co89" gradientUnits="userSpaceOnUse" x1="1020.0" y1="0" x2="1660.0" y2="0"><stop offset="0.0000" stop-color="#003299"/><stop offset="0.2766" stop-color="#031299"/><stop offset="0.4500" stop-color="#520099"/><stop offset="0.5984" stop-color="#990097"/><stop offset="0.7094" stop-color="#99006d"/><stop offset="0.8875" stop-color="#99004a"/><stop offset="1.0000" stop-color="#99003c"/></linearGradient><linearGradient id="co90" gradientUnits="userSpaceOnUse" x1="1020.0" y1="0" x2="1660.0" y2="0"><stop offset="0.0000" stop-color="#003099"/><stop offset="0.2766" stop-color="#031199"/><stop offset="0.4469" stop-color="#4f0099"/><stop offset="0.6047" stop-color="#990096"/><stop offset="0.7172" stop-color="#99006d"/><stop offset="0.8984" stop-color="#99004a"/><stop offset="1.0000" stop-color="#99003d"/></linearGradient><linearGradient id="co91" gradientUnits="userSpaceOnUse" x1="1020.0" y1="0" x2="1660.0" y2="0"><stop offset="0.0000" stop-color="#002f99"/><stop offset="0.2781" stop-color="#031199"/><stop offset="0.4422" stop-color="#4c0099"/><stop offset="0.6094" stop-color="#990096"/><stop offset="0.7234" stop-color="#99006d"/><stop offset="0.9062" stop-color="#99004a"/><stop offset="1.0000" stop-color="#99003e"/></linearGradient><linearGradient id="co92" gradientUnits="userSpaceOnUse" x1="1020.0" y1="0" x2="1660.0" y2="0"><stop offset="0.0000" stop-color="#002e99"/><stop offset="0.2781" stop-color="#031099"/><stop offset="0.4391" stop-color="#490099"/><stop offset="0.6141" stop-color="#990096"/><stop offset="0.7297" stop-color="#99006d"/><stop offset="0.9156" stop-color="#990049"/><stop offset="1.0000" stop-color="#99003f"/></linearGradient><linearGradient id="co93" gradientUnits="userSpaceOnUse" x1="1020.0" y1="0" x2="1660.0" y2="0"><stop offset="0.0000" stop-color="#002d99"/><stop offset="0.2797" stop-color="#030f99"/><stop offset="0.4344" stop-color="#460099"/><stop offset="0.6188" stop-color="#990096"/><stop offset="0.7344" stop-color="#99006d"/><stop offset="0.9203" stop-color="#99004a"/><stop offset="1.0000" stop-color="#990040"/></linearGradient><linearGradient id="co94" gradientUnits="userSpaceOnUse" x1="1020.0" y1="0" x2="1660.0" y2="0"><stop offset="0.0000" stop-color="#002c99"/><stop offset="0.2797" stop-color="#030e99"/><stop offset="0.4313" stop-color="#430099"/><stop offset="0.6234" stop-color="#990096"/><stop offset="0.7406" stop-color="#99006d"/><stop offset="0.9297" stop-color="#99004a"/><stop offset="1.0000" stop-color="#990041"/></linearGradient><linearGradient id="co95" gradientUnits="userSpaceOnUse" x1="1020.0" y1="0" x2="1660.0" y2="0"><stop offset="0.0000" stop-color="#002b99"/><stop offset="0.2812" stop-color="#030d99"/><stop offset="0.4281" stop-color="#410099"/><stop offset="0.6281" stop-color="#990096"/><stop offset="0.7469" stop-color="#99006d"/><stop offset="0.9375" stop-color="#99004a"/><stop offset="1.0000" stop-color="#990042"/></linearGradient><linearGradient id="co96" gradientUnits="userSpaceOnUse" x1="1020.0" y1="0" x2="1660.0" y2="0"><stop offset="0.0000" stop-color="#002a99"/><stop offset="0.2812" stop-color="#030d99"/><stop offset="0.4234" stop-color="#3e0099"/><stop offset="0.6328" stop-color="#990096"/><stop offset="0.7531" stop-color="#99006d"/><stop offset="0.9469" stop-color="#99004a"/><stop offset="1.0000" stop-color="#990043"/></linearGradient><linearGradient id="co97" gradientUnits="userSpaceOnUse" x1="1020.0" y1="0" x2="1660.0" y2="0"><stop offset="0.0000" stop-color="#002999"/><stop offset="0.2828" stop-color="#030c99"/><stop offset="0.4203" stop-color="#3b0099"/><stop offset="0.6375" stop-color="#990096"/><stop offset="0.7594" stop-color="#99006d"/><stop offset="0.9547" stop-color="#99004a"/><stop offset="1.0000" stop-color="#990044"/></linearGradient><linearGradient id="co98" gradientUnits="userSpaceOnUse" x1="1020.0" y1="0" x2="1660.0" y2="0"><stop offset="0.0000" stop-color="#002899"/><stop offset="0.2828" stop-color="#030b99"/><stop offset="0.4172" stop-color="#390099"/><stop offset="0.6422" stop-color="#990096"/><stop offset="0.7656" stop-color="#99006d"/><stop offset="0.9641" stop-color="#99004a"/><stop offset="1.0000" stop-color="#990045"/></linearGradient><linearGradient id="co99" gradientUnits="userSpaceOnUse" x1="1020.0" y1="0" x2="1660.0" y2="0"><stop offset="0.0000" stop-color="#002899"/><stop offset="0.2844" stop-color="#030a99"/><stop offset="0.4141" stop-color="#370099"/><stop offset="0.6469" stop-color="#990096"/><stop offset="0.7703" stop-color="#99006d"/><stop offset="0.9688" stop-color="#99004a"/><stop offset="1.0000" stop-color="#990046"/></linearGradient><linearGradient id="co100" gradientUnits="userSpaceOnUse" x1="1020.0" y1="0" x2="1660.0" y2="0"><stop offset="0.0000" stop-color="#002799"/><stop offset="0.2859" stop-color="#030999"/><stop offset="0.4109" stop-color="#340099"/><stop offset="0.6516" stop-color="#990096"/><stop offset="0.7766" stop-color="#99006d"/><stop offset="0.9781" stop-color="#99004a"/><stop offset="1.0000" stop-color="#990047"/></linearGradient><linearGradient id="co101" gradientUnits="userSpaceOnUse" x1="1020.0" y1="0" x2="1660.0" y2="0"><stop offset="0.0000" stop-color="#002699"/><stop offset="0.2859" stop-color="#030999"/><stop offset="0.4078" stop-color="#320099"/><stop offset="0.6562" stop-color="#990096"/><stop offset="0.7828" stop-color="#99006d"/><stop offset="0.9859" stop-color="#99004a"/><stop offset="1.0000" stop-color="#990048"/></linearGradient><linearGradient id="co102" gradientUnits="userSpaceOnUse" x1="1020.0" y1="0" x2="1660.0" y2="0"><stop offset="0.0000" stop-color="#002599"/><stop offset="0.2875" stop-color="#030899"/><stop offset="0.4062" stop-color="#310099"/><stop offset="0.6609" stop-color="#990096"/><stop offset="0.7891" stop-color="#99006d"/><stop offset="0.9953" stop-color="#99004a"/><stop offset="1.0000" stop-color="#990049"/></linearGradient><linearGradient id="co103" gradientUnits="userSpaceOnUse" x1="1020.0" y1="0" x2="1660.0" y2="0"><stop offset="0.0000" stop-color="#002499"/><stop offset="0.2875" stop-color="#030899"/><stop offset="0.4031" stop-color="#2f0099"/><stop offset="0.6656" stop-color="#990096"/><stop offset="0.7953" stop-color="#99006d"/><stop offset="1.0000" stop-color="#99004a"/></linearGradient><linearGradient id="co104" gradientUnits="userSpaceOnUse" x1="1020.0" y1="0" x2="1660.0" y2="0"><stop offset="0.0000" stop-color="#002399"/><stop offset="0.2891" stop-color="#030799"/><stop offset="0.4031" stop-color="#2e0099"/><stop offset="0.6703" stop-color="#990096"/><stop offset="0.8016" stop-color="#99006d"/><stop offset="1.0000" stop-color="#99004b"/></linearGradient><linearGradient id="co105" gradientUnits="userSpaceOnUse" x1="1020.0" y1="0" x2="1660.0" y2="0"><stop offset="0.0000" stop-color="#002399"/><stop offset="0.2891" stop-color="#030699"/><stop offset="0.4031" stop-color="#2d0099"/><stop offset="0.6750" stop-color="#990096"/><stop offset="0.8063" stop-color="#99006e"/><stop offset="1.0000" stop-color="#99004c"/></linearGradient><linearGradient id="co106" gradientUnits="userSpaceOnUse" x1="1020.0" y1="0" x2="1660.0" y2="0"><stop offset="0.0000" stop-color="#002299"/><stop offset="0.2906" stop-color="#030699"/><stop offset="0.4062" stop-color="#2e0099"/><stop offset="0.6797" stop-color="#990097"/><stop offset="0.8125" stop-color="#99006d"/><stop offset="1.0000" stop-color="#99004d"/></linearGradient><linearGradient id="co107" gradientUnits="userSpaceOnUse" x1="1020.0" y1="0" x2="1660.0" y2="0"><stop offset="0.0000" stop-color="#002199"/><stop offset="0.2906" stop-color="#030599"/><stop offset="0.4125" stop-color="#2f0099"/><stop offset="0.6859" stop-color="#990096"/><stop offset="0.8219" stop-color="#99006d"/><stop offset="1.0000" stop-color="#99004e"/></linearGradient><linearGradient id="co108" gradientUnits="userSpaceOnUse" x1="1020.0" y1="0" x2="1660.0" y2="0"><stop offset="0.0000" stop-color="#002099"/><stop offset="0.2922" stop-color="#030499"/><stop offset="0.4328" stop-color="#360099"/><stop offset="0.6906" stop-color="#990096"/><stop offset="0.8281" stop-color="#99006d"/><stop offset="1.0000" stop-color="#99004f"/></linearGradient><linearGradient id="co109" gradientUnits="userSpaceOnUse" x1="1020.0" y1="0" x2="1660.0" y2="0"><stop offset="0.0000" stop-color="#001f99"/><stop offset="0.2922" stop-color="#030499"/><stop offset="0.4703" stop-color="#430099"/><stop offset="0.6953" stop-color="#990096"/><stop offset="0.8328" stop-color="#99006d"/><stop offset="1.0000" stop-color="#990050"/></linearGradient><linearGradient id="co110" gradientUnits="userSpaceOnUse" x1="1020.0" y1="0" x2="1660.0" y2="0"><stop offset="0.0000" stop-color="#001f99"/><stop offset="0.2938" stop-color="#030399"/><stop offset="0.6875" stop-color="#970099"/><stop offset="0.8484" stop-color="#99006b"/><stop offset="1.0000" stop-color="#990051"/></linearGradient><linearGradient id="co111" gradientUnits="userSpaceOnUse" x1="1020.0" y1="0" x2="1660.0" y2="0"><stop offset="0.0000" stop-color="#001e99"/><stop offset="0.2938" stop-color="#030399"/><stop offset="0.6906" stop-color="#960099"/><stop offset="0.8609" stop-color="#99006a"/><stop offset="1.0000" stop-color="#990052"/></linearGradient><linearGradient id="co112" gradientUnits="userSpaceOnUse" x1="1020.0" y1="0" x2="1660.0" y2="0"><stop offset="0.0000" stop-color="#001d99"/><stop offset="0.2953" stop-color="#030299"/><stop offset="0.6969" stop-color="#970099"/><stop offset="0.8609" stop-color="#99006b"/><stop offset="1.0000" stop-color="#990054"/></linearGradient><linearGradient id="co113" gradientUnits="userSpaceOnUse" x1="1020.0" y1="0" x2="1660.0" y2="0"><stop offset="0.0000" stop-color="#001d99"/><stop offset="0.2969" stop-color="#030199"/><stop offset="0.7016" stop-color="#970099"/><stop offset="0.8672" stop-color="#99006b"/><stop offset="1.0000" stop-color="#990055"/></linearGradient><linearGradient id="co114" gradientUnits="userSpaceOnUse" x1="1020.0" y1="0" x2="1660.0" y2="0"><stop offset="0.0000" stop-color="#001c99"/><stop offset="0.2969" stop-color="#030199"/><stop offset="0.7063" stop-color="#970099"/><stop offset="0.8734" stop-color="#99006b"/><stop offset="1.0000" stop-color="#990056"/></linearGradient><linearGradient id="co115" gradientUnits="userSpaceOnUse" x1="1020.0" y1="0" x2="1660.0" y2="0"><stop offset="0.0000" stop-color="#001b99"/><stop offset="0.2984" stop-color="#030099"/><stop offset="0.7109" stop-color="#970099"/><stop offset="0.8797" stop-color="#99006b"/><stop offset="1.0000" stop-color="#990057"/></linearGradient><linearGradient id="co116" gradientUnits="userSpaceOnUse" x1="1020.0" y1="0" x2="1660.0" y2="0"><stop offset="0.0000" stop-color="#001b99"/><stop offset="0.2984" stop-color="#030099"/><stop offset="0.7156" stop-color="#970099"/><stop offset="0.8859" stop-color="#99006b"/><stop offset="1.0000" stop-color="#990058"/></linearGradient><linearGradient id="co117" gradientUnits="userSpaceOnUse" x1="1020.0" y1="0" x2="1660.0" y2="0"><stop offset="0.0000" stop-color="#001a99"/><stop offset="0.3000" stop-color="#030099"/><stop offset="0.7203" stop-color="#970099"/><stop offset="0.8922" stop-color="#99006b"/><stop offset="1.0000" stop-color="#990059"/></linearGradient><linearGradient id="co118" gradientUnits="userSpaceOnUse" x1="1020.0" y1="0" x2="1660.0" y2="0"><stop offset="0.0000" stop-color="#001999"/><stop offset="0.3000" stop-color="#030099"/><stop offset="0.7250" stop-color="#970099"/><stop offset="0.8984" stop-color="#99006b"/><stop offset="1.0000" stop-color="#99005a"/></linearGradient><linearGradient id="co119" gradientUnits="userSpaceOnUse" x1="1020.0" y1="0" x2="1660.0" y2="0"><stop offset="0.0000" stop-color="#001999"/><stop offset="0.3016" stop-color="#030099"/><stop offset="0.7297" stop-color="#970099"/><stop offset="0.9047" stop-color="#99006b"/><stop offset="1.0000" stop-color="#99005b"/></linearGradient><linearGradient id="co120" gradientUnits="userSpaceOnUse" x1="1020.0" y1="0" x2="1660.0" y2="0"><stop offset="0.0000" stop-color="#001899"/><stop offset="0.3016" stop-color="#030099"/><stop offset="0.7344" stop-color="#970099"/><stop offset="0.9109" stop-color="#99006b"/><stop offset="1.0000" stop-color="#99005c"/></linearGradient><linearGradient id="co121" gradientUnits="userSpaceOnUse" x1="1020.0" y1="0" x2="1660.0" y2="0"><stop offset="0.0000" stop-color="#001899"/><stop offset="0.3031" stop-color="#030099"/><stop offset="0.7391" stop-color="#970099"/><stop offset="0.9156" stop-color="#99006b"/><stop offset="1.0000" stop-color="#99005d"/></linearGradient><linearGradient id="co122" gradientUnits="userSpaceOnUse" x1="1020.0" y1="0" x2="1660.0" y2="0"><stop offset="0.0000" stop-color="#001799"/><stop offset="0.3031" stop-color="#030099"/><stop offset="0.7422" stop-color="#960099"/><stop offset="0.9281" stop-color="#99006a"/><stop offset="1.0000" stop-color="#99005e"/></linearGradient><linearGradient id="co123" gradientUnits="userSpaceOnUse" x1="1020.0" y1="0" x2="1660.0" y2="0"><stop offset="0.0000" stop-color="#001699"/><stop offset="0.3047" stop-color="#030099"/><stop offset="0.7484" stop-color="#970099"/><stop offset="0.9281" stop-color="#99006b"/><stop offset="1.0000" stop-color="#99005f"/></linearGradient><linearGradient id="co124" gradientUnits="userSpaceOnUse" x1="1020.0" y1="0" x2="1660.0" y2="0"><stop offset="0.0000" stop-color="#001699"/><stop offset="0.3016" stop-color="#020099"/><stop offset="0.7500" stop-color="#960099"/><stop offset="0.9453" stop-color="#990069"/><stop offset="1.0000" stop-color="#990060"/></linearGradient><linearGradient id="co125" gradientUnits="userSpaceOnUse" x1="1020.0" y1="0" x2="1660.0" y2="0"><stop offset="0.0000" stop-color="#001599"/><stop offset="0.2984" stop-color="#000099"/><stop offset="0.7500" stop-color="#940099"/><stop offset="0.7875" stop-color="#990091"/><stop offset="0.9563" stop-color="#990068"/><stop offset="1.0000" stop-color="#990061"/></linearGradient><linearGradient id="co126" gradientUnits="userSpaceOnUse" x1="1020.0" y1="0" x2="1660.0" y2="0"><stop offset="0.0000" stop-color="#001599"/><stop offset="0.2938" stop-color="#000099"/><stop offset="0.7047" stop-color="#830099"/><stop offset="0.7781" stop-color="#990096"/><stop offset="0.9406" stop-color="#99006c"/><stop offset="1.0000" stop-color="#990062"/></linearGradient><linearGradient id="co127" gradientUnits="userSpaceOnUse" x1="1020.0" y1="0" x2="1660.0" y2="0"><stop offset="0.0000" stop-color="#001499"/><stop offset="0.2906" stop-color="#000099"/><stop offset="0.6391" stop-color="#6b0099"/><stop offset="0.7812" stop-color="#990096"/><stop offset="0.9437" stop-color="#99006d"/><stop offset="1.0000" stop-color="#990063"/></linearGradient><linearGradient id="co128" gradientUnits="userSpaceOnUse" x1="1020.0" y1="0" x2="1660.0" y2="0"><stop offset="0.0000" stop-color="#001499"/><stop offset="0.2859" stop-color="#000099"/><stop offset="0.3453" stop-color="#0e0099"/><stop offset="0.7859" stop-color="#990096"/><stop offset="0.9500" stop-color="#99006d"/><stop offset="1.0000" stop-color="#990064"/></linearGradient><linearGradient id="co129" gradientUnits="userSpaceOnUse" x1="1020.0" y1="0" x2="1660.0" y2="0"><stop offset="0.0000" stop-color="#001399"/><stop offset="0.2828" stop-color="#000099"/><stop offset="0.3250" stop-color="#070099"/><stop offset="0.7906" stop-color="#990096"/><stop offset="0.9563" stop-color="#99006d"/><stop offset="1.0000" stop-color="#990065"/></linearGradient><linearGradient id="co130" gradientUnits="userSpaceOnUse" x1="1020.0" y1="0" x2="1660.0" y2="0"><stop offset="0.0000" stop-color="#001399"/><stop offset="0.2781" stop-color="#000099"/><stop offset="0.3203" stop-color="#060099"/><stop offset="0.7953" stop-color="#990096"/><stop offset="0.9609" stop-color="#99006d"/><stop offset="1.0000" stop-color="#990066"/></linearGradient><linearGradient id="co131" gradientUnits="userSpaceOnUse" x1="1020.0" y1="0" x2="1660.0" y2="0"><stop offset="0.0000" stop-color="#001299"/><stop offset="0.2734" stop-color="#000099"/><stop offset="0.3172" stop-color="#050099"/><stop offset="0.8000" stop-color="#990096"/><stop offset="0.9672" stop-color="#99006d"/><stop offset="1.0000" stop-color="#990067"/></linearGradient><linearGradient id="co132" gradientUnits="userSpaceOnUse" x1="1020.0" y1="0" x2="1660.0" y2="0"><stop offset="0.0000" stop-color="#001299"/><stop offset="0.2703" stop-color="#000099"/><stop offset="0.3172" stop-color="#040099"/><stop offset="0.8047" stop-color="#990096"/><stop offset="0.9734" stop-color="#99006d"/><stop offset="1.0000" stop-color="#990068"/></linearGradient><linearGradient id="co133" gradientUnits="userSpaceOnUse" x1="1020.0" y1="0" x2="1660.0" y2="0"><stop offset="0.0000" stop-color="#001199"/><stop offset="0.2656" stop-color="#000099"/><stop offset="0.3172" stop-color="#040099"/><stop offset="0.7984" stop-color="#980099"/><stop offset="0.9781" stop-color="#99006d"/><stop offset="1.0000" stop-color="#99006a"/></linearGradient><linearGradient id="co134" gradientUnits="userSpaceOnUse" x1="1020.0" y1="0" x2="1660.0" y2="0"><stop offset="0.0000" stop-color="#001199"/><stop offset="0.2625" stop-color="#000099"/><stop offset="0.3172" stop-color="#040099"/><stop offset="0.8031" stop-color="#980099"/><stop offset="0.9844" stop-color="#99006d"/><stop offset="1.0000" stop-color="#99006b"/></linearGradient><linearGradient id="co135" gradientUnits="userSpaceOnUse" x1="1020.0" y1="0" x2="1660.0" y2="0"><stop offset="0.0000" stop-color="#001099"/><stop offset="0.2578" stop-color="#000099"/><stop offset="0.3172" stop-color="#040099"/><stop offset="0.8063" stop-color="#980099"/><stop offset="0.9969" stop-color="#99006c"/><stop offset="1.0000" stop-color="#99006c"/></linearGradient><linearGradient id="co136" gradientUnits="userSpaceOnUse" x1="1020.0" y1="0" x2="1660.0" y2="0"><stop offset="0.0000" stop-color="#001099"/><stop offset="0.2547" stop-color="#000099"/><stop offset="0.3187" stop-color="#040099"/><stop offset="0.8109" stop-color="#980099"/><stop offset="1.0000" stop-color="#99006d"/></linearGradient><linearGradient id="co137" gradientUnits="userSpaceOnUse" x1="1020.0" y1="0" x2="1660.0" y2="0"><stop offset="0.0000" stop-color="#000f99"/><stop offset="0.2500" stop-color="#000099"/><stop offset="0.3187" stop-color="#030099"/><stop offset="0.8156" stop-color="#980099"/><stop offset="1.0000" stop-color="#99006e"/></linearGradient><linearGradient id="co138" gradientUnits="userSpaceOnUse" x1="1020.0" y1="0" x2="1660.0" y2="0"><stop offset="0.0000" stop-color="#000f99"/><stop offset="0.2469" stop-color="#000099"/><stop offset="0.3203" stop-color="#040099"/><stop offset="0.8203" stop-color="#980099"/><stop offset="1.0000" stop-color="#99006f"/></linearGradient><linearGradient id="co139" gradientUnits="userSpaceOnUse" x1="1020.0" y1="0" x2="1660.0" y2="0"><stop offset="0.0000" stop-color="#000e99"/><stop offset="0.2422" stop-color="#000099"/><stop offset="0.3203" stop-color="#030099"/><stop offset="0.8250" stop-color="#980099"/><stop offset="1.0000" stop-color="#990070"/></linearGradient><linearGradient id="co140" gradientUnits="userSpaceOnUse" x1="1020.0" y1="0" x2="1660.0" y2="0"><stop offset="0.0000" stop-color="#000e99"/><stop offset="0.2391" stop-color="#000099"/><stop offset="0.3203" stop-color="#030099"/><stop offset="0.8281" stop-color="#970099"/><stop offset="1.0000" stop-color="#990071"/></linearGradient><linearGradient id="co141" gradientUnits="userSpaceOnUse" x1="1020.0" y1="0" x2="1660.0" y2="0"><stop offset="0.0000" stop-color="#000d99"/><stop offset="0.2359" stop-color="#000099"/><stop offset="0.3219" stop-color="#030099"/><stop offset="0.8344" stop-color="#980099"/><stop offset="1.0000" stop-color="#990072"/></linearGradient><linearGradient id="co142" gradientUnits="userSpaceOnUse" x1="1020.0" y1="0" x2="1660.0" y2="0"><stop offset="0.0000" stop-color="#000d99"/><stop offset="0.2313" stop-color="#000099"/><stop offset="0.3219" stop-color="#030099"/><stop offset="0.8375" stop-color="#970099"/><stop offset="1.0000" stop-color="#990073"/></linearGradient><linearGradient id="co143" gradientUnits="userSpaceOnUse" x1="1020.0" y1="0" x2="1660.0" y2="0"><stop offset="0.0000" stop-color="#000d99"/><stop offset="0.2281" stop-color="#000099"/><stop offset="0.3234" stop-color="#030099"/><stop offset="0.8438" stop-color="#980099"/><stop offset="1.0000" stop-color="#990074"/></linearGradient><linearGradient id="co144" gradientUnits="userSpaceOnUse" x1="1020.0" y1="0" x2="1660.0" y2="0"><stop offset="0.0000" stop-color="#000c99"/><stop offset="0.2250" stop-color="#000099"/><stop offset="0.3234" stop-color="#030099"/><stop offset="0.8469" stop-color="#970099"/><stop offset="1.0000" stop-color="#990075"/></linearGradient><linearGradient id="co145" gradientUnits="userSpaceOnUse" x1="1020.0" y1="0" x2="1660.0" y2="0"><stop offset="0.0000" stop-color="#000c99"/><stop offset="0.2203" stop-color="#000099"/><stop offset="0.3250" stop-color="#030099"/><stop offset="0.8531" stop-color="#980099"/><stop offset="1.0000" stop-color="#990077"/></linearGradient><linearGradient id="co146" gradientUnits="userSpaceOnUse" x1="1020.0" y1="0" x2="1660.0" y2="0"><stop offset="0.0000" stop-color="#000b99"/><stop offset="0.2172" stop-color="#000099"/><stop offset="0.3250" stop-color="#030099"/><stop offset="0.8562" stop-color="#970099"/><stop offset="1.0000" stop-color="#990078"/></linearGradient><linearGradient id="co147" gradientUnits="userSpaceOnUse" x1="1020.0" y1="0" x2="1660.0" y2="0"><stop offset="0.0000" stop-color="#000b99"/><stop offset="0.2141" stop-color="#000099"/><stop offset="0.3266" stop-color="#030099"/><stop offset="0.8625" stop-color="#980099"/><stop offset="1.0000" stop-color="#990079"/></linearGradient><linearGradient id="co148" gradientUnits="userSpaceOnUse" x1="1020.0" y1="0" x2="1660.0" y2="0"><stop offset="0.0000" stop-color="#000b99"/><stop offset="0.2109" stop-color="#000099"/><stop offset="0.3266" stop-color="#030099"/><stop offset="0.8656" stop-color="#970099"/><stop offset="1.0000" stop-color="#99007a"/></linearGradient><linearGradient id="co149" gradientUnits="userSpaceOnUse" x1="1020.0" y1="0" x2="1660.0" y2="0"><stop offset="0.0000" stop-color="#000a99"/><stop offset="0.2078" stop-color="#000099"/><stop offset="0.3281" stop-color="#030099"/><stop offset="0.8703" stop-color="#970099"/><stop offset="1.0000" stop-color="#99007b"/></linearGradient><linearGradient id="co150" gradientUnits="userSpaceOnUse" x1="1020.0" y1="0" x2="1660.0" y2="0"><stop offset="0.0000" stop-color="#000a99"/><stop offset="0.2047" stop-color="#000099"/><stop offset="0.3281" stop-color="#030099"/><stop offset="0.8750" stop-color="#970099"/><stop offset="1.0000" stop-color="#99007c"/></linearGradient><linearGradient id="co151" gradientUnits="userSpaceOnUse" x1="1020.0" y1="0" x2="1660.0" y2="0"><stop offset="0.0000" stop-color="#000999"/><stop offset="0.2016" stop-color="#000099"/><stop offset="0.3297" stop-color="#030099"/><stop offset="0.8797" stop-color="#970099"/><stop offset="1.0000" stop-color="#99007d"/></linearGradient><linearGradient id="co152" gradientUnits="userSpaceOnUse" x1="1020.0" y1="0" x2="1660.0" y2="0"><stop offset="0.0000" stop-color="#000999"/><stop offset="0.1984" stop-color="#000099"/><stop offset="0.3297" stop-color="#030099"/><stop offset="0.8844" stop-color="#970099"/><stop offset="1.0000" stop-color="#99007e"/></linearGradient><linearGradient id="co153" gradientUnits="userSpaceOnUse" x1="1020.0" y1="0" x2="1660.0" y2="0"><stop offset="0.0000" stop-color="#000999"/><stop offset="0.1953" stop-color="#000099"/><stop offset="0.3312" stop-color="#030099"/><stop offset="0.8891" stop-color="#970099"/><stop offset="1.0000" stop-color="#99007f"/></linearGradient><linearGradient id="co154" gradientUnits="userSpaceOnUse" x1="1020.0" y1="0" x2="1660.0" y2="0"><stop offset="0.0000" stop-color="#000899"/><stop offset="0.1938" stop-color="#000099"/><stop offset="0.3312" stop-color="#030099"/><stop offset="0.8938" stop-color="#970099"/><stop offset="1.0000" stop-color="#990081"/></linearGradient><linearGradient id="co155" gradientUnits="userSpaceOnUse" x1="1020.0" y1="0" x2="1660.0" y2="0"><stop offset="0.0000" stop-color="#000899"/><stop offset="0.1906" stop-color="#000099"/><stop offset="0.3328" stop-color="#030099"/><stop offset="0.8984" stop-color="#970099"/><stop offset="1.0000" stop-color="#990082"/></linearGradient><linearGradient id="co156" gradientUnits="userSpaceOnUse" x1="1020.0" y1="0" x2="1660.0" y2="0"><stop offset="0.0000" stop-color="#000899"/><stop offset="0.1891" stop-color="#000099"/><stop offset="0.3328" stop-color="#030099"/><stop offset="0.9031" stop-color="#970099"/><stop offset="1.0000" stop-color="#990083"/></linearGradient><linearGradient id="co157" gradientUnits="userSpaceOnUse" x1="1020.0" y1="0" x2="1660.0" y2="0"><stop offset="0.0000" stop-color="#000799"/><stop offset="0.1875" stop-color="#000099"/><stop offset="0.3344" stop-color="#030099"/><stop offset="0.9062" stop-color="#970099"/><stop offset="1.0000" stop-color="#990084"/></linearGradient><filter id="cblur" x="-2%" y="-2%" width="104%" height="104%"><feGaussianBlur stdDeviation="0.4 1.2"/></filter><linearGradient id="xg0" gradientUnits="userSpaceOnUse" x1="632.0" y1="0" x2="986.0" y2="0"><stop offset="0.0000" stop-color="#7fffcd"/><stop offset="0.7175" stop-color="#f4ffc8"/><stop offset="0.8023" stop-color="#fffbc4"/><stop offset="1.0000" stop-color="#ffdbaa"/></linearGradient><linearGradient id="xg1" gradientUnits="userSpaceOnUse" x1="632.0" y1="0" x2="986.0" y2="0"><stop offset="0.0000" stop-color="#81ffcf"/><stop offset="0.7119" stop-color="#f5ffca"/><stop offset="0.7910" stop-color="#fffbc6"/><stop offset="1.0000" stop-color="#ffd9aa"/></linearGradient><linearGradient id="xg2" gradientUnits="userSpaceOnUse" x1="632.0" y1="0" x2="986.0" y2="0"><stop offset="0.0000" stop-color="#82ffd1"/><stop offset="0.7062" stop-color="#f6ffcd"/><stop offset="0.7768" stop-color="#fffbc9"/><stop offset="1.0000" stop-color="#ffd7ab"/></linearGradient><linearGradient id="xg3" gradientUnits="userSpaceOnUse" x1="632.0" y1="0" x2="986.0" y2="0"><stop offset="0.0000" stop-color="#84ffd4"/><stop offset="0.7034" stop-color="#f8ffcf"/><stop offset="0.7684" stop-color="#fffaca"/><stop offset="1.0000" stop-color="#ffd5ab"/></linearGradient><linearGradient id="xg4" gradientUnits="userSpaceOnUse" x1="632.0" y1="0" x2="986.0" y2="0"><stop offset="0.0000" stop-color="#86ffd6"/><stop offset="0.6977" stop-color="#faffd2"/><stop offset="0.7655" stop-color="#fff8cb"/><stop offset="1.0000" stop-color="#ffd3ab"/></linearGradient><linearGradient id="xg5" gradientUnits="userSpaceOnUse" x1="632.0" y1="0" x2="986.0" y2="0"><stop offset="0.0000" stop-color="#87ffd8"/><stop offset="0.6949" stop-color="#fcffd4"/><stop offset="1.0000" stop-color="#ffd1ac"/></linearGradient><linearGradient id="xg6" gradientUnits="userSpaceOnUse" x1="632.0" y1="0" x2="986.0" y2="0"><stop offset="0.0000" stop-color="#89ffda"/><stop offset="0.6893" stop-color="#fdffd7"/><stop offset="1.0000" stop-color="#ffcfac"/></linearGradient><linearGradient id="xg7" gradientUnits="userSpaceOnUse" x1="632.0" y1="0" x2="986.0" y2="0"><stop offset="0.0000" stop-color="#8bffdd"/><stop offset="0.6977" stop-color="#fffcd7"/><stop offset="1.0000" stop-color="#ffcdad"/></linearGradient><linearGradient id="xg8" gradientUnits="userSpaceOnUse" x1="632.0" y1="0" x2="986.0" y2="0"><stop offset="0.0000" stop-color="#8cffdf"/><stop offset="0.6836" stop-color="#fffcda"/><stop offset="1.0000" stop-color="#ffcbad"/></linearGradient><linearGradient id="xg9" gradientUnits="userSpaceOnUse" x1="632.0" y1="0" x2="986.0" y2="0"><stop offset="0.0000" stop-color="#8effe1"/><stop offset="0.6695" stop-color="#fffcdc"/><stop offset="1.0000" stop-color="#ffc8ae"/></linearGradient><linearGradient id="xg10" gradientUnits="userSpaceOnUse" x1="632.0" y1="0" x2="986.0" y2="0"><stop offset="0.0000" stop-color="#90ffe4"/><stop offset="0.6554" stop-color="#fffcdf"/><stop offset="1.0000" stop-color="#ffc6ae"/></linearGradient><linearGradient id="xg11" gradientUnits="userSpaceOnUse" x1="632.0" y1="0" x2="986.0" y2="0"><stop offset="0.0000" stop-color="#91ffe6"/><stop offset="0.6441" stop-color="#fffce1"/><stop offset="1.0000" stop-color="#ffc4ae"/></linearGradient><linearGradient id="xg12" gradientUnits="userSpaceOnUse" x1="632.0" y1="0" x2="986.0" y2="0"><stop offset="0.0000" stop-color="#93ffe9"/><stop offset="0.6299" stop-color="#fffce4"/><stop offset="1.0000" stop-color="#ffc2af"/></linearGradient><linearGradient id="xg13" gradientUnits="userSpaceOnUse" x1="632.0" y1="0" x2="986.0" y2="0"><stop offset="0.0000" stop-color="#95ffeb"/><stop offset="0.6158" stop-color="#fffce7"/><stop offset="0.9944" stop-color="#ffc1b0"/><stop offset="1.0000" stop-color="#ffc0af"/></linearGradient><linearGradient id="xg14" gradientUnits="userSpaceOnUse" x1="632.0" y1="0" x2="986.0" y2="0"><stop offset="0.0000" stop-color="#97ffee"/><stop offset="0.6017" stop-color="#fffcea"/><stop offset="0.9802" stop-color="#ffc1b2"/><stop offset="1.0000" stop-color="#ffbfb0"/></linearGradient><linearGradient id="xg15" gradientUnits="userSpaceOnUse" x1="632.0" y1="0" x2="986.0" y2="0"><stop offset="0.0000" stop-color="#99fff0"/><stop offset="0.5876" stop-color="#fffcec"/><stop offset="0.9633" stop-color="#ffc1b5"/><stop offset="1.0000" stop-color="#ffbdb0"/></linearGradient><linearGradient id="xg16" gradientUnits="userSpaceOnUse" x1="632.0" y1="0" x2="986.0" y2="0"><stop offset="0.0000" stop-color="#9afff3"/><stop offset="0.5734" stop-color="#fffcef"/><stop offset="0.9463" stop-color="#ffc1b7"/><stop offset="1.0000" stop-color="#ffbbb1"/></linearGradient><linearGradient id="xg17" gradientUnits="userSpaceOnUse" x1="632.0" y1="0" x2="986.0" y2="0"><stop offset="0.0000" stop-color="#9cfff6"/><stop offset="0.5593" stop-color="#fffcf2"/><stop offset="0.9322" stop-color="#ffc1b9"/><stop offset="1.0000" stop-color="#ffb9b1"/></linearGradient><linearGradient id="xg18" gradientUnits="userSpaceOnUse" x1="632.0" y1="0" x2="986.0" y2="0"><stop offset="0.0000" stop-color="#9efff8"/><stop offset="0.5452" stop-color="#fffcf5"/><stop offset="0.9153" stop-color="#ffc1bc"/><stop offset="1.0000" stop-color="#ffb7b1"/></linearGradient><linearGradient id="xg19" gradientUnits="userSpaceOnUse" x1="632.0" y1="0" x2="986.0" y2="0"><stop offset="0.0000" stop-color="#a0fffb"/><stop offset="0.5311" stop-color="#fffcf8"/><stop offset="0.8983" stop-color="#ffc1be"/><stop offset="1.0000" stop-color="#ffb5b2"/></linearGradient><linearGradient id="xg20" gradientUnits="userSpaceOnUse" x1="632.0" y1="0" x2="986.0" y2="0"><stop offset="0.0000" stop-color="#a2fffe"/><stop offset="0.5169" stop-color="#fffcfb"/><stop offset="0.8842" stop-color="#ffc1c0"/><stop offset="1.0000" stop-color="#ffb3b2"/></linearGradient><linearGradient id="xg21" gradientUnits="userSpaceOnUse" x1="632.0" y1="0" x2="986.0" y2="0"><stop offset="0.0000" stop-color="#a3feff"/><stop offset="0.5113" stop-color="#fffbfc"/><stop offset="0.8785" stop-color="#ffc0c2"/><stop offset="1.0000" stop-color="#ffb1b3"/></linearGradient><linearGradient id="xg22" gradientUnits="userSpaceOnUse" x1="632.0" y1="0" x2="986.0" y2="0"><stop offset="0.0000" stop-color="#a3fbff"/><stop offset="0.5141" stop-color="#fff7fc"/><stop offset="0.8842" stop-color="#ffbdc1"/><stop offset="1.0000" stop-color="#ffafb3"/></linearGradient><linearGradient id="xg23" gradientUnits="userSpaceOnUse" x1="632.0" y1="0" x2="986.0" y2="0"><stop offset="0.0000" stop-color="#a4f8ff"/><stop offset="0.5141" stop-color="#fff5fc"/><stop offset="0.8842" stop-color="#ffbbc2"/><stop offset="1.0000" stop-color="#ffadb3"/></linearGradient><linearGradient id="xg24" gradientUnits="userSpaceOnUse" x1="632.0" y1="0" x2="986.0" y2="0"><stop offset="0.0000" stop-color="#a4f5ff"/><stop offset="0.5169" stop-color="#fff1fc"/><stop offset="0.8898" stop-color="#ffb8c1"/><stop offset="1.0000" stop-color="#ffabb4"/></linearGradient><linearGradient id="xg25" gradientUnits="userSpaceOnUse" x1="632.0" y1="0" x2="986.0" y2="0"><stop offset="0.0000" stop-color="#a4f3ff"/><stop offset="0.5169" stop-color="#ffeffc"/><stop offset="0.8898" stop-color="#ffb6c2"/><stop offset="1.0000" stop-color="#ffaab4"/></linearGradient><linearGradient id="xg26" gradientUnits="userSpaceOnUse" x1="632.0" y1="0" x2="986.0" y2="0"><stop offset="0.0000" stop-color="#a4f0ff"/><stop offset="0.5169" stop-color="#ffecfc"/><stop offset="0.8927" stop-color="#ffb4c2"/><stop offset="1.0000" stop-color="#ffa8b4"/></linearGradient><linearGradient id="xg27" gradientUnits="userSpaceOnUse" x1="632.0" y1="0" x2="986.0" y2="0"><stop offset="0.0000" stop-color="#a4edff"/><stop offset="0.5198" stop-color="#ffe9fc"/><stop offset="0.8983" stop-color="#ffb2c1"/><stop offset="1.0000" stop-color="#ffa6b5"/></linearGradient><linearGradient id="xg28" gradientUnits="userSpaceOnUse" x1="632.0" y1="0" x2="986.0" y2="0"><stop offset="0.0000" stop-color="#a5ebff"/><stop offset="0.5198" stop-color="#ffe6fc"/><stop offset="0.8983" stop-color="#ffb0c2"/><stop offset="1.0000" stop-color="#ffa4b5"/></linearGradient><linearGradient id="xg29" gradientUnits="userSpaceOnUse" x1="632.0" y1="0" x2="986.0" y2="0"><stop offset="0.0000" stop-color="#a5e8ff"/><stop offset="0.5226" stop-color="#ffe3fc"/><stop offset="0.9040" stop-color="#ffadc1"/><stop offset="1.0000" stop-color="#ffa2b6"/></linearGradient><linearGradient id="xg30" gradientUnits="userSpaceOnUse" x1="632.0" y1="0" x2="986.0" y2="0"><stop offset="0.0000" stop-color="#a5e6ff"/><stop offset="0.5226" stop-color="#ffe1fc"/><stop offset="0.9040" stop-color="#ffabc2"/><stop offset="1.0000" stop-color="#ffa1b6"/></linearGradient><linearGradient id="xg31" gradientUnits="userSpaceOnUse" x1="632.0" y1="0" x2="986.0" y2="0"><stop offset="0.0000" stop-color="#a5e3ff"/><stop offset="0.5226" stop-color="#ffdefc"/><stop offset="0.9068" stop-color="#ffa9c2"/><stop offset="1.0000" stop-color="#ff9fb6"/></linearGradient><linearGradient id="xg32" gradientUnits="userSpaceOnUse" x1="632.0" y1="0" x2="986.0" y2="0"><stop offset="0.0000" stop-color="#a5e1ff"/><stop offset="0.5254" stop-color="#ffdbfc"/><stop offset="0.9124" stop-color="#ffa6c1"/><stop offset="1.0000" stop-color="#ff9db7"/></linearGradient><linearGradient id="xg33" gradientUnits="userSpaceOnUse" x1="632.0" y1="0" x2="986.0" y2="0"><stop offset="0.0000" stop-color="#a6deff"/><stop offset="0.5254" stop-color="#ffd9fc"/><stop offset="0.9124" stop-color="#ffa4c2"/><stop offset="1.0000" stop-color="#ff9bb7"/></linearGradient><linearGradient id="xg34" gradientUnits="userSpaceOnUse" x1="632.0" y1="0" x2="986.0" y2="0"><stop offset="0.0000" stop-color="#a6dcff"/><stop offset="0.5282" stop-color="#ffd6fc"/><stop offset="0.9181" stop-color="#ffa2c1"/><stop offset="1.0000" stop-color="#ff99b7"/></linearGradient><linearGradient id="xg35" gradientUnits="userSpaceOnUse" x1="632.0" y1="0" x2="986.0" y2="0"><stop offset="0.0000" stop-color="#a6d9ff"/><stop offset="0.5282" stop-color="#ffd4fc"/><stop offset="0.9181" stop-color="#ffa0c2"/><stop offset="1.0000" stop-color="#ff98b8"/></linearGradient><linearGradient id="xg36" gradientUnits="userSpaceOnUse" x1="632.0" y1="0" x2="986.0" y2="0"><stop offset="0.0000" stop-color="#a6d7ff"/><stop offset="0.5282" stop-color="#ffd1fc"/><stop offset="0.9209" stop-color="#ff9ec2"/><stop offset="1.0000" stop-color="#ff96b8"/></linearGradient><linearGradient id="xg37" gradientUnits="userSpaceOnUse" x1="632.0" y1="0" x2="986.0" y2="0"><stop offset="0.0000" stop-color="#a6d4ff"/><stop offset="0.5311" stop-color="#ffcefc"/><stop offset="0.9266" stop-color="#ff9cc1"/><stop offset="1.0000" stop-color="#ff94b9"/></linearGradient><linearGradient id="xg38" gradientUnits="userSpaceOnUse" x1="632.0" y1="0" x2="986.0" y2="0"><stop offset="0.0000" stop-color="#a6d2ff"/><stop offset="0.5311" stop-color="#ffccfc"/><stop offset="0.9266" stop-color="#ff9ac2"/><stop offset="1.0000" stop-color="#ff93b9"/></linearGradient><linearGradient id="xg39" gradientUnits="userSpaceOnUse" x1="632.0" y1="0" x2="986.0" y2="0"><stop offset="0.0000" stop-color="#a7d0ff"/><stop offset="0.5339" stop-color="#ffc9fc"/><stop offset="0.9322" stop-color="#ff98c1"/><stop offset="1.0000" stop-color="#ff91b9"/></linearGradient><linearGradient id="xg40" gradientUnits="userSpaceOnUse" x1="632.0" y1="0" x2="986.0" y2="0"><stop offset="0.0000" stop-color="#a7cdff"/><stop offset="0.5339" stop-color="#ffc7fc"/><stop offset="0.9322" stop-color="#ff96c2"/><stop offset="1.0000" stop-color="#ff8fba"/></linearGradient><linearGradient id="xg41" gradientUnits="userSpaceOnUse" x1="632.0" y1="0" x2="986.0" y2="0"><stop offset="0.0000" stop-color="#a7cbff"/><stop offset="0.5367" stop-color="#ffc4fc"/><stop offset="0.9379" stop-color="#ff93c1"/><stop offset="1.0000" stop-color="#ff8dba"/></linearGradient><linearGradient id="xg42" gradientUnits="userSpaceOnUse" x1="632.0" y1="0" x2="986.0" y2="0"><stop offset="0.0000" stop-color="#a7c9ff"/><stop offset="0.5367" stop-color="#ffc3fc"/><stop offset="0.9407" stop-color="#ff92c1"/><stop offset="1.0000" stop-color="#ff8cba"/></linearGradient><filter id="vblur" x="-5%" y="-5%" width="110%" height="110%"><feGaussianBlur stdDeviation="0.6 2.2"/></filter><clipPath id="xyclip"><rect x="638" y="677" width="342.0" height="199.0"/></clipPath><linearGradient id="hdrg" x1="0" y1="0" x2="0" y2="1"><stop offset="0" stop-color="#2c2c2c"/><stop offset="0.5" stop-color="#262626"/><stop offset="0.5" stop-color="#151515"/><stop offset="1" stop-color="#111111"/></linearGradient><clipPath id="tclip"><rect x="996.2" y="661.2" width="634.5" height="205"/></clipPath><linearGradient id="tbg" x1="0" y1="0" x2="0" y2="1"><stop offset="0" stop-color="#adadad"/><stop offset="0.35" stop-color="#8e8e8e"/><stop offset="1" stop-color="#575757"/></linearGradient><linearGradient id="tbsel" x1="0" y1="0" x2="0" y2="1"><stop offset="0" stop-color="#1c1c1c"/><stop offset="0.2" stop-color="#262626"/><stop offset="1" stop-color="#2c2c2c"/></linearGradient><radialGradient id="icg" cx="0.5" cy="0.1" r="0.95"><stop offset="0" stop-color="#6e6e6e"/><stop offset="0.55" stop-color="#8a8a8a"/><stop offset="1" stop-color="#a4a4a4"/></radialGradient><radialGradient id="icg2" cx="0.5" cy="0.1" r="0.95"><stop offset="0" stop-color="#5a5a5a"/><stop offset="0.55" stop-color="#6a6a6a"/><stop offset="1" stop-color="#7e7e7e"/></radialGradient><linearGradient id="tbd" x1="0" y1="0" x2="0" y2="1"><stop offset="0" stop-color="#8a8a8a"/><stop offset="1" stop-color="#474747"/></linearGradient><filter id="ashadow" x="-30%" y="-30%" width="160%" height="160%"><feGaussianBlur stdDeviation="0.9"/></filter><linearGradient id="rsh" x1="0" y1="0" x2="1" y2="0"><stop offset="0" stop-color="#000" stop-opacity="0"/><stop offset="1" stop-color="#000" stop-opacity="0.6"/></linearGradient></defs>
<rect x="0" y="0" width="1670" height="1006" fill="#323232"/>
<rect x="0" y="0" width="1670" height="38.5" fill="#222222"/>
<rect x="0" y="38" width="1" height="968" fill="#5a5a5a"/>
<rect x="1" y="38" width="1" height="968" fill="#262626"/>
<path d="M1.5,37 L1.5,5 Q1.5,0.5 6,0.5 L111,0.5 Q115.5,0.5 115.5,5 L115.5,37 Z" fill="url(#tabg)"/>
<path d="M1.5,37 L1.5,5 Q1.5,0.5 6,0.5 L111,0.5 Q115.5,0.5 115.5,5 L115.5,37" fill="none" stroke="#8c8c8c" stroke-width="1"/>
<line x1="74.5" y1="1" x2="74.5" y2="37" stroke="#8a8a8a" stroke-width="1"/>
<text x="9" y="25" font-size="13.5" fill="#ececec" textLength="58" lengthAdjust="spacingAndGlyphs">History 1</text>
<circle cx="93.4" cy="22.3" r="11.5" fill="url(#plusg)"/>
<line x1="89.8" y1="22.5" x2="97" y2="22.5" stroke="#9a9a9a" stroke-width="1"/>
<line x1="93.4" y1="19" x2="93.4" y2="26" stroke="#9a9a9a" stroke-width="1"/>
<path d="M1056,37 L1056,4 Q1056,0 1060,0 L1230,0 Q1234,0 1234,4 L1234,37 Z" fill="url(#boxg)"/>
<path d="M1056,37 L1056,4 Q1056,0 1060,0 L1063,0 L1063,37 Z" fill="url(#gbar)"/>
<path d="M1242,37 L1242,4 Q1242,0 1246,0 L1399.6,0 Q1403.6,0 1403.6,4 L1403.6,37 Z" fill="url(#boxg)"/>
<path d="M1242,37 L1242,4 Q1242,0 1246,0 L1249,0 L1249,37 Z" fill="url(#wbar)"/>
<path d="M1412.6,37 L1412.6,4 Q1412.6,0 1416.6,0 L1586,0 Q1590,0 1590,4 L1590,37 Z" fill="url(#boxg)"/>
<path d="M1412.6,37 L1412.6,4 Q1412.6,0 1416.6,0 L1419.6,0 L1419.6,37 Z" fill="url(#ybar)"/>
<text x="1066.8" y="13.8" font-size="13" fill="#f2f2f2" textLength="81.6" lengthAdjust="spacingAndGlyphs">X-Rite i1Pro 3</text>
<text x="1067.7" y="32.6" font-size="13" fill="#f2f2f2" textLength="68.8" lengthAdjust="spacingAndGlyphs">Direct View</text>
<circle cx="1165.3" cy="18.6" r="12" fill="url(#ddg)"/>
<path d="M1158.8,16.6 L1171.8,16.6 L1165.3,23.400000000000002 Z" fill="#ffffff"/>
<line x1="1189" y1="2" x2="1189" y2="37" stroke="#474747" stroke-width="1.5"/>
<circle cx="1215.6" cy="18.6" r="16" fill="#0000e8" stroke="#e8e8ff" stroke-width="1"/>
<text x="1215.8" y="22.8" font-size="11" fill="#ffffff" text-anchor="middle" font-weight="bold">713</text>
<text x="1253.4" y="13.8" font-size="13" fill="#f2f2f2" textLength="79.6" lengthAdjust="spacingAndGlyphs">Mobile Forge</text>
<circle cx="1384" cy="18.6" r="12" fill="url(#ddg)"/>
<path d="M1377.5,16.6 L1390.5,16.6 L1384,23.400000000000002 Z" fill="#ffffff"/>
<text x="1423.3" y="14" font-size="13" fill="#f2f2f2" textLength="131.1" lengthAdjust="spacingAndGlyphs">Direct Display Control</text>
<circle cx="1571" cy="18.6" r="12" fill="url(#ddg)"/>
<path d="M1564.5,16.6 L1577.5,16.6 L1571,23.400000000000002 Z" fill="#ffffff"/>
<rect x="1595.5" y="0.5" width="41.5" height="34.5" rx="5" fill="url(#btng)" stroke="#c0c0c0" stroke-width="1"/>
<rect x="1637.7" y="0.5" width="40" height="34.5" rx="5" fill="url(#btng)" stroke="#c0c0c0" stroke-width="1"/>
<circle cx="1616" cy="17.5" r="12" fill="url(#btnc)"/>
<circle cx="1654.4" cy="17.5" r="12" fill="url(#btnc)"/>
<path d="M1614.50,11.38 L1614.74,9.19 L1617.26,9.19 L1617.50,11.38 L1619.27,12.11 L1620.99,10.74 L1622.76,12.51 L1621.39,14.23 L1622.12,16.00 L1624.31,16.24 L1624.31,18.76 L1622.12,19.00 L1621.39,20.77 L1622.76,22.49 L1620.99,24.26 L1619.27,22.89 L1617.50,23.62 L1617.26,25.81 L1614.74,25.81 L1614.50,23.62 L1612.73,22.89 L1611.01,24.26 L1609.24,22.49 L1610.61,20.77 L1609.88,19.00 L1607.69,18.76 L1607.69,16.24 L1609.88,16.00 L1610.61,14.23 L1609.24,12.51 L1611.01,10.74 L1612.73,12.11 Z" fill="#d0d0d0"/>
<circle cx="1616" cy="17.5" r="3.4" fill="#5e5e5e"/>
<path d="M1650,17.5 L1657.5,11 L1657.5,24 Z" fill="#ffffff"/>
<text x="8.5" y="124.7" font-size="38" fill="#f2f2f2" textLength="231" lengthAdjust="spacingAndGlyphs">Color Gamut</text>
<text x="189.3" y="224.7" font-size="14" fill="#cccccc" text-anchor="middle" textLength="80" lengthAdjust="spacingAndGlyphs">DeltaE 2000</text>
<rect x="21.7" y="229.5" width="335.5" height="372.9" fill="#232323"/>
<line x1="65.3" y1="229.5" x2="65.3" y2="602.4" stroke="#8c8c8c" stroke-width="1.3"/>
<line x1="110.4" y1="229.5" x2="110.4" y2="602.4" stroke="#8c8c8c" stroke-width="1.3"/>
<line x1="155.4" y1="229.5" x2="155.4" y2="602.4" stroke="#8c8c8c" stroke-width="1.3"/>
<line x1="200.4" y1="229.5" x2="200.4" y2="602.4" stroke="#8c8c8c" stroke-width="1.3"/>
<line x1="245.4" y1="229.5" x2="245.4" y2="602.4" stroke="#8c8c8c" stroke-width="1.3"/>
<line x1="288.5" y1="229.5" x2="288.5" y2="602.4" stroke="#8c8c8c" stroke-width="1.3"/>
<line x1="333.5" y1="229.5" x2="333.5" y2="602.4" stroke="#8c8c8c" stroke-width="1.3"/>
<rect x="21.7" y="229.5" width="335.5" height="372.9" fill="none" stroke="#9c9c9c" stroke-width="1.5"/>
<line x1="21.7" y1="602.4" x2="21.7" y2="607.9" stroke="#d8d8d8" stroke-width="1.5"/>
<text x="21.7" y="623.6" font-size="13.5" fill="#d2d2d2" text-anchor="middle">0</text>
<line x1="65.3" y1="602.4" x2="65.3" y2="607.9" stroke="#d8d8d8" stroke-width="1.5"/>
<text x="65.3" y="623.6" font-size="13.5" fill="#d2d2d2" text-anchor="middle">2</text>
<line x1="110.4" y1="602.4" x2="110.4" y2="607.9" stroke="#d8d8d8" stroke-width="1.5"/>
<text x="110.4" y="623.6" font-size="13.5" fill="#d2d2d2" text-anchor="middle">4</text>
<line x1="155.4" y1="602.4" x2="155.4" y2="607.9" stroke="#d8d8d8" stroke-width="1.5"/>
<text x="155.4" y="623.6" font-size="13.5" fill="#d2d2d2" text-anchor="middle">6</text>
<line x1="200.4" y1="602.4" x2="200.4" y2="607.9" stroke="#d8d8d8" stroke-width="1.5"/>
<text x="200.4" y="623.6" font-size="13.5" fill="#d2d2d2" text-anchor="middle">8</text>
<line x1="245.4" y1="602.4" x2="245.4" y2="607.9" stroke="#d8d8d8" stroke-width="1.5"/>
<text x="245.4" y="623.6" font-size="13.5" fill="#d2d2d2" text-anchor="middle">10</text>
<line x1="288.5" y1="602.4" x2="288.5" y2="607.9" stroke="#d8d8d8" stroke-width="1.5"/>
<text x="288.5" y="623.6" font-size="13.5" fill="#d2d2d2" text-anchor="middle">12</text>
<line x1="333.5" y1="602.4" x2="333.5" y2="607.9" stroke="#d8d8d8" stroke-width="1.5"/>
<text x="333.5" y="623.6" font-size="13.5" fill="#d2d2d2" text-anchor="middle">14</text>
<rect x="22.2" y="233.3" width="61.1" height="35.2" fill="url(#bw)" stroke="#000" stroke-width="1.6"/>
<rect x="22.2" y="281.9" width="11.0" height="35.2" fill="url(#by)" stroke="#000" stroke-width="1.6"/>
<rect x="22.2" y="327.1" width="5.3" height="35.2" fill="url(#bm)" stroke="#000" stroke-width="1.6"/>
<rect x="22.2" y="373.7" width="5.8" height="35.2" fill="url(#bc)" stroke="#000" stroke-width="1.6"/>
<rect x="22.2" y="420.0" width="19.6" height="35.2" fill="url(#bb)" stroke="#000" stroke-width="1.6"/>
<rect x="22.2" y="466.5" width="13.0" height="35.2" fill="url(#bg)" stroke="#000" stroke-width="1.6"/>
<rect x="22.2" y="514.0" width="39.7" height="35.2" fill="url(#br)" stroke="#000" stroke-width="1.6"/>
<rect x="22.2" y="560.0" width="20.9" height="35.2" fill="url(#bw2)" stroke="#000" stroke-width="1.6"/>
<text x="469" y="115.7" font-size="14" fill="#cccccc" text-anchor="middle">Delta L</text>
<rect x="409" y="121.6" width="145.29999999999995" height="316.1" fill="#232323"/>
<line x1="409" y1="175.3" x2="554.3" y2="175.3" stroke="#8c8c8c" stroke-width="1.3"/>
<line x1="409" y1="227.2" x2="554.3" y2="227.2" stroke="#8c8c8c" stroke-width="1.3"/>
<line x1="409" y1="280" x2="554.3" y2="280" stroke="#8c8c8c" stroke-width="1.3"/>
<line x1="409" y1="332.9" x2="554.3" y2="332.9" stroke="#8c8c8c" stroke-width="1.3"/>
<line x1="409" y1="386.5" x2="554.3" y2="386.5" stroke="#8c8c8c" stroke-width="1.3"/>
<rect x="409" y="121.6" width="145.3" height="316.1" fill="none" stroke="#9c9c9c" stroke-width="1.5"/>
<line x1="403.5" y1="121.6" x2="409" y2="121.6" stroke="#d8d8d8" stroke-width="1.5"/>
<text x="403.5" y="126.9" font-size="13.5" fill="#d2d2d2" text-anchor="end">15</text>
<line x1="403.5" y1="175.3" x2="409" y2="175.3" stroke="#d8d8d8" stroke-width="1.5"/>
<text x="403.5" y="180.6" font-size="13.5" fill="#d2d2d2" text-anchor="end">10</text>
<line x1="403.5" y1="227.2" x2="409" y2="227.2" stroke="#d8d8d8" stroke-width="1.5"/>
<text x="403.5" y="232.5" font-size="13.5" fill="#d2d2d2" text-anchor="end">5</text>
<line x1="403.5" y1="280" x2="409" y2="280" stroke="#d8d8d8" stroke-width="1.5"/>
<text x="403.5" y="285.3" font-size="13.5" fill="#d2d2d2" text-anchor="end">0</text>
<line x1="403.5" y1="332.9" x2="409" y2="332.9" stroke="#d8d8d8" stroke-width="1.5"/>
<text x="403.5" y="338.2" font-size="13.5" fill="#d2d2d2" text-anchor="end">-5</text>
<line x1="403.5" y1="386.5" x2="409" y2="386.5" stroke="#d8d8d8" stroke-width="1.5"/>
<text x="403.5" y="391.8" font-size="13.5" fill="#d2d2d2" text-anchor="end">-10</text>
<line x1="403.5" y1="437.7" x2="409" y2="437.7" stroke="#d8d8d8" stroke-width="1.5"/>
<text x="403.5" y="443.7" font-size="13.5" fill="#d2d2d2" text-anchor="end">-15</text>
<line x1="409" y1="437.7" x2="409" y2="442.7" stroke="#d8d8d8" stroke-width="1.5"/>
<line x1="554.3" y1="437.7" x2="554.3" y2="442.7" stroke="#d8d8d8" stroke-width="1.5"/>
<text x="481.3" y="453.8" font-size="14" fill="#d2d2d2" text-anchor="middle">100W</text>
<rect x="424" y="279" width="114" height="2" fill="#1c1c1c"/>
<text x="666.5" y="115.7" font-size="14" fill="#cccccc" text-anchor="middle">Delta C</text>
<rect x="607" y="121.6" width="145.29999999999995" height="316.1" fill="#232323"/>
<line x1="607" y1="175.3" x2="752.3" y2="175.3" stroke="#8c8c8c" stroke-width="1.3"/>
<line x1="607" y1="227.2" x2="752.3" y2="227.2" stroke="#8c8c8c" stroke-width="1.3"/>
<line x1="607" y1="280" x2="752.3" y2="280" stroke="#8c8c8c" stroke-width="1.3"/>
<line x1="607" y1="332.9" x2="752.3" y2="332.9" stroke="#8c8c8c" stroke-width="1.3"/>
<line x1="607" y1="386.5" x2="752.3" y2="386.5" stroke="#8c8c8c" stroke-width="1.3"/>
<rect x="607" y="121.6" width="145.3" height="316.1" fill="none" stroke="#9c9c9c" stroke-width="1.5"/>
<line x1="601.5" y1="121.6" x2="607" y2="121.6" stroke="#d8d8d8" stroke-width="1.5"/>
<text x="601.5" y="126.9" font-size="13.5" fill="#d2d2d2" text-anchor="end">15</text>
<line x1="601.5" y1="175.3" x2="607" y2="175.3" stroke="#d8d8d8" stroke-width="1.5"/>
<text x="601.5" y="180.6" font-size="13.5" fill="#d2d2d2" text-anchor="end">10</text>
<line x1="601.5" y1="227.2" x2="607" y2="227.2" stroke="#d8d8d8" stroke-width="1.5"/>
<text x="601.5" y="232.5" font-size="13.5" fill="#d2d2d2" text-anchor="end">5</text>
<line x1="601.5" y1="280" x2="607" y2="280" stroke="#d8d8d8" stroke-width="1.5"/>
<text x="601.5" y="285.3" font-size="13.5" fill="#d2d2d2" text-anchor="end">0</text>
<line x1="601.5" y1="332.9" x2="607" y2="332.9" stroke="#d8d8d8" stroke-width="1.5"/>
<text x="601.5" y="338.2" font-size="13.5" fill="#d2d2d2" text-anchor="end">-5</text>
<line x1="601.5" y1="386.5" x2="607" y2="386.5" stroke="#d8d8d8" stroke-width="1.5"/>
<text x="601.5" y="391.8" font-size="13.5" fill="#d2d2d2" text-anchor="end">-10</text>
<line x1="601.5" y1="437.7" x2="607" y2="437.7" stroke="#d8d8d8" stroke-width="1.5"/>
<text x="601.5" y="443.7" font-size="13.5" fill="#d2d2d2" text-anchor="end">-15</text>
<line x1="607" y1="437.7" x2="607" y2="442.7" stroke="#d8d8d8" stroke-width="1.5"/>
<line x1="752.3" y1="437.7" x2="752.3" y2="442.7" stroke="#d8d8d8" stroke-width="1.5"/>
<text x="679.3" y="453.8" font-size="14" fill="#d2d2d2" text-anchor="middle">100W</text>
<rect x="622" y="258.8" width="114.4" height="21.2" fill="url(#dcb)" stroke="#000" stroke-width="1.6"/>
<text x="862.8" y="115.7" font-size="14" fill="#cccccc" text-anchor="middle">Delta H</text>
<rect x="805" y="121.6" width="145.29999999999995" height="316.1" fill="#232323"/>
<line x1="805" y1="175.3" x2="950.3" y2="175.3" stroke="#8c8c8c" stroke-width="1.3"/>
<line x1="805" y1="227.2" x2="950.3" y2="227.2" stroke="#8c8c8c" stroke-width="1.3"/>
<line x1="805" y1="280" x2="950.3" y2="280" stroke="#8c8c8c" stroke-width="1.3"/>
<line x1="805" y1="332.9" x2="950.3" y2="332.9" stroke="#8c8c8c" stroke-width="1.3"/>
<line x1="805" y1="386.5" x2="950.3" y2="386.5" stroke="#8c8c8c" stroke-width="1.3"/>
<rect x="805" y="121.6" width="145.3" height="316.1" fill="none" stroke="#9c9c9c" stroke-width="1.5"/>
<line x1="799.5" y1="121.6" x2="805" y2="121.6" stroke="#d8d8d8" stroke-width="1.5"/>
<text x="799.5" y="126.9" font-size="13.5" fill="#d2d2d2" text-anchor="end">15</text>
<line x1="799.5" y1="175.3" x2="805" y2="175.3" stroke="#d8d8d8" stroke-width="1.5"/>
<text x="799.5" y="180.6" font-size="13.5" fill="#d2d2d2" text-anchor="end">10</text>
<line x1="799.5" y1="227.2" x2="805" y2="227.2" stroke="#d8d8d8" stroke-width="1.5"/>
<text x="799.5" y="232.5" font-size="13.5" fill="#d2d2d2" text-anchor="end">5</text>
<line x1="799.5" y1="280" x2="805" y2="280" stroke="#d8d8d8" stroke-width="1.5"/>
<text x="799.5" y="285.3" font-size="13.5" fill="#d2d2d2" text-anchor="end">0</text>
<line x1="799.5" y1="332.9" x2="805" y2="332.9" stroke="#d8d8d8" stroke-width="1.5"/>
<text x="799.5" y="338.2" font-size="13.5" fill="#d2d2d2" text-anchor="end">-5</text>
<line x1="799.5" y1="386.5" x2="805" y2="386.5" stroke="#d8d8d8" stroke-width="1.5"/>
<text x="799.5" y="391.8" font-size="13.5" fill="#d2d2d2" text-anchor="end">-10</text>
<line x1="799.5" y1="437.7" x2="805" y2="437.7" stroke="#d8d8d8" stroke-width="1.5"/>
<text x="799.5" y="443.7" font-size="13.5" fill="#d2d2d2" text-anchor="end">-15</text>
<line x1="805" y1="437.7" x2="805" y2="442.7" stroke="#d8d8d8" stroke-width="1.5"/>
<line x1="950.3" y1="437.7" x2="950.3" y2="442.7" stroke="#d8d8d8" stroke-width="1.5"/>
<text x="877.3" y="453.8" font-size="14" fill="#d2d2d2" text-anchor="middle">100W</text>
<rect x="820" y="279" width="114" height="2" fill="#1c1c1c"/>
<rect x="377.3" y="470.2" width="591.7" height="163.3" fill="#000000"/>
<rect x="394" y="544" width="62" height="66" fill="#c2c2c2"/>
<rect x="394" y="478" width="62" height="67" fill="#c3c3c3"/>
<rect x="394.5" y="478.5" width="61" height="131" fill="none" stroke="#eeeeee" stroke-width="1"/>
<text x="424.7" y="625" font-size="13" fill="#f0f0f0" text-anchor="middle">White</text>
<rect x="466" y="544" width="62" height="66" fill="#bd1313"/>
<rect x="466" y="478" width="62" height="67" fill="#bb0b0b"/>
<rect x="466.5" y="478.5" width="61" height="131" fill="none" stroke="#eeeeee" stroke-width="1"/>
<text x="497" y="625" font-size="13" fill="#f0f0f0" text-anchor="middle">Red</text>
<rect x="539" y="544" width="62" height="66" fill="#14bc1d"/>
<rect x="539" y="478" width="62" height="67" fill="#0bbb0b"/>
<rect x="539.5" y="478.5" width="61" height="131" fill="none" stroke="#eeeeee" stroke-width="1"/>
<text x="570" y="625" font-size="13" fill="#f0f0f0" text-anchor="middle">Green</text>
<rect x="611" y="544" width="62" height="66" fill="#1414bd"/>
<rect x="611" y="478" width="62" height="67" fill="#0012bb"/>
<rect x="611.5" y="478.5" width="61" height="131" fill="none" stroke="#eeeeee" stroke-width="1"/>
<text x="642" y="625" font-size="13" fill="#f0f0f0" text-anchor="middle">Blue</text>
<rect x="683" y="544" width="62" height="66" fill="#0cbcbc"/>
<rect x="683" y="478" width="62" height="67" fill="#00bcbc"/>
<rect x="683.5" y="478.5" width="61" height="131" fill="none" stroke="#eeeeee" stroke-width="1"/>
<text x="714" y="625" font-size="13" fill="#f0f0f0" text-anchor="middle">Cyan</text>
<rect x="756" y="544" width="62" height="66" fill="#bb06bb"/>
<rect x="756" y="478" width="62" height="67" fill="#bb00bb"/>
<rect x="756.5" y="478.5" width="61" height="131" fill="none" stroke="#eeeeee" stroke-width="1"/>
<text x="787" y="625" font-size="13" fill="#f0f0f0" text-anchor="middle">Magenta</text>
<rect x="828" y="544" width="62" height="66" fill="#c3c01c"/>
<rect x="828" y="478" width="62" height="67" fill="#c3c000"/>
<rect x="828.5" y="478.5" width="61" height="131" fill="none" stroke="#eeeeee" stroke-width="1"/>
<text x="859" y="625" font-size="13" fill="#f0f0f0" text-anchor="middle">Yellow</text>
<rect x="900" y="544" width="62" height="66" fill="#ffffff"/>
<rect x="900" y="478" width="62" height="67" fill="#fbfdfc"/>
<rect x="900.5" y="478.5" width="61" height="131" fill="none" stroke="#eeeeee" stroke-width="1"/>
<text x="931.4" y="625" font-size="13" fill="#f0f0f0" text-anchor="middle">100W</text>
<text transform="translate(390,507) rotate(-90)" font-size="12" fill="#f0f0f0" text-anchor="middle">Actual</text>
<text transform="translate(390,580) rotate(-90)" font-size="12" fill="#f0f0f0" text-anchor="middle">Target</text>
<rect x="975.5" y="89" width="694.5" height="558" fill="#1b1b1b"/>
<rect x="982" y="96" width="681" height="544" fill="#333333"/>
<text x="1322" y="114" font-size="14" fill="#cccccc" text-anchor="middle">CIE 1976 u'v'</text>
<rect x="1019.5" y="119.5" width="639.8" height="491.79999999999995" fill="#232323"/>
<g clip-path="url(#plotclip)"><g clip-path="url(#horse)"><g clip-path="url(#outside)"><g filter="url(#cblur)"><rect x="1020" y="128" width="640" height="3.6" fill="url(#co0)"/><rect x="1020" y="131" width="640" height="3.6" fill="url(#co1)"/><rect x="1020" y="134" width="640" height="3.6" fill="url(#co2)"/><rect x="1020" y="137" width="640" height="3.6" fill="url(#co3)"/><rect x="1020" y="140" width="640" height="3.6" fill="url(#co4)"/><rect x="1020" y="143" width="640" height="3.6" fill="url(#co5)"/><rect x="1020" y="146" width="640" height="3.6" fill="url(#co6)"/><rect x="1020" y="149" width="640" height="3.6" fill="url(#co7)"/><rect x="1020" y="152" width="640" height="3.6" fill="url(#co8)"/><rect x="1020" y="155" width="640" height="3.6" fill="url(#co9)"/><rect x="1020" y="158" width="640" height="3.6" fill="url(#co10)"/><rect x="1020" y="161" width="640" height="3.6" fill="url(#co11)"/><rect x="1020" y="164" width="640" height="3.6" fill="url(#co12)"/><rect x="1020" y="167" width="640" height="3.6" fill="url(#co13)"/><rect x="1020" y="170" width="640" height="3.6" fill="url(#co14)"/><rect x="1020" y="173" width="640" height="3.6" fill="url(#co15)"/><rect x="1020" y="176" width="640" height="3.6" fill="url(#co16)"/><rect x="1020" y="179" width="640" height="3.6" fill="url(#co17)"/><rect x="1020" y="182" width="640" height="3.6" fill="url(#co18)"/><rect x="1020" y="185" width="640" height="3.6" fill="url(#co19)"/><rect x="1020" y="188" width="640" height="3.6" fill="url(#co20)"/><rect x="1020" y="191" width="640" height="3.6" fill="url(#co21)"/><rect x="1020" y="194" width="640" height="3.6" fill="url(#co22)"/><rect x="1020" y="197" width="640" height="3.6" fill="url(#co23)"/><rect x="1020" y="200" width="640" height="3.6" fill="url(#co24)"/><rect x="1020" y="203" width="640" height="3.6" fill="url(#co25)"/><rect x="1020" y="206" width="640" height="3.6" fill="url(#co26)"/><rect x="1020" y="209" width="640" height="3.6" fill="url(#co27)"/><rect x="1020" y="212" width="640" height="3.6" fill="url(#co28)"/><rect x="1020" y="215" width="640" height="3.6" fill="url(#co29)"/><rect x="1020" y="218" width="640" height="3.6" fill="url(#co30)"/><rect x="1020" y="221" width="640" height="3.6" fill="url(#co31)"/><rect x="1020" y="224" width="640" height="3.6" fill="url(#co32)"/><rect x="1020" y="227" width="640" height="3.6" fill="url(#co33)"/><rect x="1020" y="230" width="640" height="3.6" fill="url(#co34)"/><rect x="1020" y="233" width="640" height="3.6" fill="url(#co35)"/><rect x="1020" y="236" width="640" height="3.6" fill="url(#co36)"/><rect x="1020" y="239" width="640" height="3.6" fill="url(#co37)"/><rect x="1020" y="242" width="640" height="3.6" fill="url(#co38)"/><rect x="1020" y="245" width="640" height="3.6" fill="url(#co39)"/><rect x="1020" y="248" width="640" height="3.6" fill="url(#co40)"/><rect x="1020" y="251" width="640" height="3.6" fill="url(#co41)"/><rect x="1020" y="254" width="640" height="3.6" fill="url(#co42)"/><rect x="1020" y="257" width="640" height="3.6" fill="url(#co43)"/><rect x="1020" y="260" width="640" height="3.6" fill="url(#co44)"/><rect x="1020" y="263" width="640" height="3.6" fill="url(#co45)"/><rect x="1020" y="266" width="640" height="3.6" fill="url(#co46)"/><rect x="1020" y="269" width="640" height="3.6" fill="url(#co47)"/><rect x="1020" y="272" width="640" height="3.6" fill="url(#co48)"/><rect x="1020" y="275" width="640" height="3.6" fill="url(#co49)"/><rect x="1020" y="278" width="640" height="3.6" fill="url(#co50)"/><rect x="1020" y="281" width="640" height="3.6" fill="url(#co51)"/><rect x="1020" y="284" width="640" height="3.6" fill="url(#co52)"/><rect x="1020" y="287" width="640" height="3.6" fill="url(#co53)"/><rect x="1020" y="290" width="640" height="3.6" fill="url(#co54)"/><rect x="1020" y="293" width="640" height="3.6" fill="url(#co55)"/><rect x="1020" y="296" width="640" height="3.6" fill="url(#co56)"/><rect x="1020" y="299" width="640" height="3.6" fill="url(#co57)"/><rect x="1020" y="302" width="640" height="3.6" fill="url(#co58)"/><rect x="1020" y="305" width="640" height="3.6" fill="url(#co59)"/><rect x="1020" y="308" width="640" height="3.6" fill="url(#co60)"/><rect x="1020" y="311" width="640" height="3.6" fill="url(#co61)"/><rect x="1020" y="314" width="640" height="3.6" fill="url(#co62)"/><rect x="1020" y="317" width="640" height="3.6" fill="url(#co63)"/><rect x="1020" y="320" width="640" height="3.6" fill="url(#co64)"/><rect x="1020" y="323" width="640" height="3.6" fill="url(#co65)"/><rect x="1020" y="326" width="640" height="3.6" fill="url(#co66)"/><rect x="1020" y="329" width="640" height="3.6" fill="url(#co67)"/><rect x="1020" y="332" width="640" height="3.6" fill="url(#co68)"/><rect x="1020" y="335" width="640" height="3.6" fill="url(#co69)"/><rect x="1020" y="338" width="640" height="3.6" fill="url(#co70)"/><rect x="1020" y="341" width="640" height="3.6" fill="url(#co71)"/><rect x="1020" y="344" width="640" height="3.6" fill="url(#co72)"/><rect x="1020" y="347" width="640" height="3.6" fill="url(#co73)"/><rect x="1020" y="350" width="640" height="3.6" fill="url(#co74)"/><rect x="1020" y="353" width="640" height="3.6" fill="url(#co75)"/><rect x="1020" y="356" width="640" height="3.6" fill="url(#co76)"/><rect x="1020" y="359" width="640" height="3.6" fill="url(#co77)"/><rect x="1020" y="362" width="640" height="3.6" fill="url(#co78)"/><rect x="1020" y="365" width="640" height="3.6" fill="url(#co79)"/><rect x="1020" y="368" width="640" height="3.6" fill="url(#co80)"/><rect x="1020" y="371" width="640" height="3.6" fill="url(#co81)"/><rect x="1020" y="374" width="640" height="3.6" fill="url(#co82)"/><rect x="1020" y="377" width="640" height="3.6" fill="url(#co83)"/><rect x="1020" y="380" width="640" height="3.6" fill="url(#co84)"/><rect x="1020" y="383" width="640" height="3.6" fill="url(#co85)"/><rect x="1020" y="386" width="640" height="3.6" fill="url(#co86)"/><rect x="1020" y="389" width="640" height="3.6" fill="url(#co87)"/><rect x="1020" y="392" width="640" height="3.6" fill="url(#co88)"/><rect x="1020" y="395" width="640" height="3.6" fill="url(#co89)"/><rect x="1020" y="398" width="640" height="3.6" fill="url(#co90)"/><rect x="1020" y="401" width="640" height="3.6" fill="url(#co91)"/><rect x="1020" y="404" width="640" height="3.6" fill="url(#co92)"/><rect x="1020" y="407" width="640" height="3.6" fill="url(#co93)"/><rect x="1020" y="410" width="640" height="3.6" fill="url(#co94)"/><rect x="1020" y="413" width="640" height="3.6" fill="url(#co95)"/><rect x="1020" y="416" width="640" height="3.6" fill="url(#co96)"/><rect x="1020" y="419" width="640" height="3.6" fill="url(#co97)"/><rect x="1020" y="422" width="640" height="3.6" fill="url(#co98)"/><rect x="1020" y="425" width="640" height="3.6" fill="url(#co99)"/><rect x="1020" y="428" width="640" height="3.6" fill="url(#co100)"/><rect x="1020" y="431" width="640" height="3.6" fill="url(#co101)"/><rect x="1020" y="434" width="640" height="3.6" fill="url(#co102)"/><rect x="1020" y="437" width="640" height="3.6" fill="url(#co103)"/><rect x="1020" y="440" width="640" height="3.6" fill="url(#co104)"/><rect x="1020" y="443" width="640" height="3.6" fill="url(#co105)"/><rect x="1020" y="446" width="640" height="3.6" fill="url(#co106)"/><rect x="1020" y="449" width="640" height="3.6" fill="url(#co107)"/><rect x="1020" y="452" width="640" height="3.6" fill="url(#co108)"/><rect x="1020" y="455" width="640" height="3.6" fill="url(#co109)"/><rect x="1020" y="458" width="640" height="3.6" fill="url(#co110)"/><rect x="1020" y="461" width="640" height="3.6" fill="url(#co111)"/><rect x="1020" y="464" width="640" height="3.6" fill="url(#co112)"/><rect x="1020" y="467" width="640" height="3.6" fill="url(#co113)"/><rect x="1020" y="470" width="640" height="3.6" fill="url(#co114)"/><rect x="1020" y="473" width="640" height="3.6" fill="url(#co115)"/><rect x="1020" y="476" width="640" height="3.6" fill="url(#co116)"/><rect x="1020" y="479" width="640" height="3.6" fill="url(#co117)"/><rect x="1020" y="482" width="640" height="3.6" fill="url(#co118)"/><rect x="1020" y="485" width="640" height="3.6" fill="url(#co119)"/><rect x="1020" y="488" width="640" height="3.6" fill="url(#co120)"/><rect x="1020" y="491" width="640" height="3.6" fill="url(#co121)"/><rect x="1020" y="494" width="640" height="3.6" fill="url(#co122)"/><rect x="1020" y="497" width="640" height="3.6" fill="url(#co123)"/><rect x="1020" y="500" width="640" height="3.6" fill="url(#co124)"/><rect x="1020" y="503" width="640" height="3.6" fill="url(#co125)"/><rect x="1020" y="506" width="640" height="3.6" fill="url(#co126)"/><rect x="1020" y="509" width="640" height="3.6" fill="url(#co127)"/><rect x="1020" y="512" width="640" height="3.6" fill="url(#co128)"/><rect x="1020" y="515" width="640" height="3.6" fill="url(#co129)"/><rect x="1020" y="518" width="640" height="3.6" fill="url(#co130)"/><rect x="1020" y="521" width="640" height="3.6" fill="url(#co131)"/><rect x="1020" y="524" width="640" height="3.6" fill="url(#co132)"/><rect x="1020" y="527" width="640" height="3.6" fill="url(#co133)"/><rect x="1020" y="530" width="640" height="3.6" fill="url(#co134)"/><rect x="1020" y="533" width="640" height="3.6" fill="url(#co135)"/><rect x="1020" y="536" width="640" height="3.6" fill="url(#co136)"/><rect x="1020" y="539" width="640" height="3.6" fill="url(#co137)"/><rect x="1020" y="542" width="640" height="3.6" fill="url(#co138)"/><rect x="1020" y="545" width="640" height="3.6" fill="url(#co139)"/><rect x="1020" y="548" width="640" height="3.6" fill="url(#co140)"/><rect x="1020" y="551" width="640" height="3.6" fill="url(#co141)"/><rect x="1020" y="554" width="640" height="3.6" fill="url(#co142)"/><rect x="1020" y="557" width="640" height="3.6" fill="url(#co143)"/><rect x="1020" y="560" width="640" height="3.6" fill="url(#co144)"/><rect x="1020" y="563" width="640" height="3.6" fill="url(#co145)"/><rect x="1020" y="566" width="640" height="3.6" fill="url(#co146)"/><rect x="1020" y="569" width="640" height="3.6" fill="url(#co147)"/><rect x="1020" y="572" width="640" height="3.6" fill="url(#co148)"/><rect x="1020" y="575" width="640" height="3.6" fill="url(#co149)"/><rect x="1020" y="578" width="640" height="3.6" fill="url(#co150)"/><rect x="1020" y="581" width="640" height="3.6" fill="url(#co151)"/><rect x="1020" y="584" width="640" height="3.6" fill="url(#co152)"/><rect x="1020" y="587" width="640" height="3.6" fill="url(#co153)"/><rect x="1020" y="590" width="640" height="3.6" fill="url(#co154)"/><rect x="1020" y="593" width="640" height="3.6" fill="url(#co155)"/><rect x="1020" y="596" width="640" height="3.6" fill="url(#co156)"/><rect x="1020" y="599" width="640" height="1.6" fill="url(#co157)"/></g></g><g clip-path="url(#tri)"><g filter="url(#cblur)"><rect x="1140" y="140" width="370" height="3.6" fill="url(#ci0)"/><rect x="1140" y="143" width="370" height="3.6" fill="url(#ci1)"/><rect x="1140" y="146" width="370" height="3.6" fill="url(#ci2)"/><rect x="1140" y="149" width="370" height="3.6" fill="url(#ci3)"/><rect x="1140" y="152" width="370" height="3.6" fill="url(#ci4)"/><rect x="1140" y="155" width="370" height="3.6" fill="url(#ci5)"/><rect x="1140" y="158" width="370" height="3.6" fill="url(#ci6)"/><rect x="1140" y="161" width="370" height="3.6" fill="url(#ci7)"/><rect x="1140" y="164" width="370" height="3.6" fill="url(#ci8)"/><rect x="1140" y="167" width="370" height="3.6" fill="url(#ci9)"/><rect x="1140" y="170" width="370" height="3.6" fill="url(#ci10)"/><rect x="1140" y="173" width="370" height="3.6" fill="url(#ci11)"/><rect x="1140" y="176" width="370" height="3.6" fill="url(#ci12)"/><rect x="1140" y="179" width="370" height="3.6" fill="url(#ci13)"/><rect x="1140" y="182" width="370" height="3.6" fill="url(#ci14)"/><rect x="1140" y="185" width="370" height="3.6" fill="url(#ci15)"/><rect x="1140" y="188" width="370" height="3.6" fill="url(#ci16)"/><rect x="1140" y="191" width="370" height="3.6" fill="url(#ci17)"/><rect x="1140" y="194" width="370" height="3.6" fill="url(#ci18)"/><rect x="1140" y="197" width="370" height="3.6" fill="url(#ci19)"/><rect x="1140" y="200" width="370" height="3.6" fill="url(#ci20)"/><rect x="1140" y="203" width="370" height="3.6" fill="url(#ci21)"/><rect x="1140" y="206" width="370" height="3.6" fill="url(#ci22)"/><rect x="1140" y="209" width="370" height="3.6" fill="url(#ci23)"/><rect x="1140" y="212" width="370" height="3.6" fill="url(#ci24)"/><rect x="1140" y="215" width="370" height="3.6" fill="url(#ci25)"/><rect x="1140" y="218" width="370" height="3.6" fill="url(#ci26)"/><rect x="1140" y="221" width="370" height="3.6" fill="url(#ci27)"/><rect x="1140" y="224" width="370" height="3.6" fill="url(#ci28)"/><rect x="1140" y="227" width="370" height="3.6" fill="url(#ci29)"/><rect x="1140" y="230" width="370" height="3.6" fill="url(#ci30)"/><rect x="1140" y="233" width="370" height="3.6" fill="url(#ci31)"/><rect x="1140" y="236" width="370" height="3.6" fill="url(#ci32)"/><rect x="1140" y="239" width="370" height="3.6" fill="url(#ci33)"/><rect x="1140" y="242" width="370" height="3.6" fill="url(#ci34)"/><rect x="1140" y="245" width="370" height="3.6" fill="url(#ci35)"/><rect x="1140" y="248" width="370" height="3.6" fill="url(#ci36)"/><rect x="1140" y="251" width="370" height="3.6" fill="url(#ci37)"/><rect x="1140" y="254" width="370" height="3.6" fill="url(#ci38)"/><rect x="1140" y="257" width="370" height="3.6" fill="url(#ci39)"/><rect x="1140" y="260" width="370" height="3.6" fill="url(#ci40)"/><rect x="1140" y="263" width="370" height="3.6" fill="url(#ci41)"/><rect x="1140" y="266" width="370" height="3.6" fill="url(#ci42)"/><rect x="1140" y="269" width="370" height="3.6" fill="url(#ci43)"/><rect x="1140" y="272" width="370" height="3.6" fill="url(#ci44)"/><rect x="1140" y="275" width="370" height="3.6" fill="url(#ci45)"/><rect x="1140" y="278" width="370" height="3.6" fill="url(#ci46)"/><rect x="1140" y="281" width="370" height="3.6" fill="url(#ci47)"/><rect x="1140" y="284" width="370" height="3.6" fill="url(#ci48)"/><rect x="1140" y="287" width="370" height="3.6" fill="url(#ci49)"/><rect x="1140" y="290" width="370" height="3.6" fill="url(#ci50)"/><rect x="1140" y="293" width="370" height="3.6" fill="url(#ci51)"/><rect x="1140" y="296" width="370" height="3.6" fill="url(#ci52)"/><rect x="1140" y="299" width="370" height="3.6" fill="url(#ci53)"/><rect x="1140" y="302" width="370" height="3.6" fill="url(#ci54)"/><rect x="1140" y="305" width="370" height="3.6" fill="url(#ci55)"/><rect x="1140" y="308" width="370" height="3.6" fill="url(#ci56)"/><rect x="1140" y="311" width="370" height="3.6" fill="url(#ci57)"/><rect x="1140" y="314" width="370" height="3.6" fill="url(#ci58)"/><rect x="1140" y="317" width="370" height="3.6" fill="url(#ci59)"/><rect x="1140" y="320" width="370" height="3.6" fill="url(#ci60)"/><rect x="1140" y="323" width="370" height="3.6" fill="url(#ci61)"/><rect x="1140" y="326" width="370" height="3.6" fill="url(#ci62)"/><rect x="1140" y="329" width="370" height="3.6" fill="url(#ci63)"/><rect x="1140" y="332" width="370" height="3.6" fill="url(#ci64)"/><rect x="1140" y="335" width="370" height="3.6" fill="url(#ci65)"/><rect x="1140" y="338" width="370" height="3.6" fill="url(#ci66)"/><rect x="1140" y="341" width="370" height="3.6" fill="url(#ci67)"/><rect x="1140" y="344" width="370" height="3.6" fill="url(#ci68)"/><rect x="1140" y="347" width="370" height="3.6" fill="url(#ci69)"/><rect x="1140" y="350" width="370" height="3.6" fill="url(#ci70)"/><rect x="1140" y="353" width="370" height="3.6" fill="url(#ci71)"/><rect x="1140" y="356" width="370" height="3.6" fill="url(#ci72)"/><rect x="1140" y="359" width="370" height="3.6" fill="url(#ci73)"/><rect x="1140" y="362" width="370" height="3.6" fill="url(#ci74)"/><rect x="1140" y="365" width="370" height="3.6" fill="url(#ci75)"/><rect x="1140" y="368" width="370" height="3.6" fill="url(#ci76)"/><rect x="1140" y="371" width="370" height="3.6" fill="url(#ci77)"/><rect x="1140" y="374" width="370" height="3.6" fill="url(#ci78)"/><rect x="1140" y="377" width="370" height="3.6" fill="url(#ci79)"/><rect x="1140" y="380" width="370" height="3.6" fill="url(#ci80)"/><rect x="1140" y="383" width="370" height="3.6" fill="url(#ci81)"/><rect x="1140" y="386" width="370" height="3.6" fill="url(#ci82)"/><rect x="1140" y="389" width="370" height="3.6" fill="url(#ci83)"/><rect x="1140" y="392" width="370" height="3.6" fill="url(#ci84)"/><rect x="1140" y="395" width="370" height="3.6" fill="url(#ci85)"/><rect x="1140" y="398" width="370" height="3.6" fill="url(#ci86)"/><rect x="1140" y="401" width="370" height="3.6" fill="url(#ci87)"/><rect x="1140" y="404" width="370" height="3.6" fill="url(#ci88)"/><rect x="1140" y="407" width="370" height="3.6" fill="url(#ci89)"/><rect x="1140" y="410" width="370" height="3.6" fill="url(#ci90)"/><rect x="1140" y="413" width="370" height="3.6" fill="url(#ci91)"/><rect x="1140" y="416" width="370" height="3.6" fill="url(#ci92)"/><rect x="1140" y="419" width="370" height="3.6" fill="url(#ci93)"/><rect x="1140" y="422" width="370" height="3.6" fill="url(#ci94)"/><rect x="1140" y="425" width="370" height="3.6" fill="url(#ci95)"/><rect x="1140" y="428" width="370" height="3.6" fill="url(#ci96)"/><rect x="1140" y="431" width="370" height="3.6" fill="url(#ci97)"/><rect x="1140" y="434" width="370" height="3.6" fill="url(#ci98)"/><rect x="1140" y="437" width="370" height="3.6" fill="url(#ci99)"/><rect x="1140" y="440" width="370" height="3.6" fill="url(#ci100)"/><rect x="1140" y="443" width="370" height="3.6" fill="url(#ci101)"/><rect x="1140" y="446" width="370" height="3.6" fill="url(#ci102)"/><rect x="1140" y="449" width="370" height="3.6" fill="url(#ci103)"/><rect x="1140" y="452" width="370" height="3.6" fill="url(#ci104)"/><rect x="1140" y="455" width="370" height="3.6" fill="url(#ci105)"/><rect x="1140" y="458" width="370" height="3.6" fill="url(#ci106)"/><rect x="1140" y="461" width="370" height="3.6" fill="url(#ci107)"/><rect x="1140" y="464" width="370" height="3.6" fill="url(#ci108)"/><rect x="1140" y="467" width="370" height="3.6" fill="url(#ci109)"/><rect x="1140" y="470" width="370" height="3.6" fill="url(#ci110)"/><rect x="1140" y="473" width="370" height="3.6" fill="url(#ci111)"/><rect x="1140" y="476" width="370" height="3.6" fill="url(#ci112)"/><rect x="1140" y="479" width="370" height="3.6" fill="url(#ci113)"/><rect x="1140" y="482" width="370" height="3.6" fill="url(#ci114)"/><rect x="1140" y="485" width="370" height="3.6" fill="url(#ci115)"/><rect x="1140" y="488" width="370" height="2.6" fill="url(#ci116)"/></g></g></g></g><g clip-path="url(#plotclip)"><path d="M1293.0,597.7 L1292.8,597.9 L1292.5,598.0 L1292.3,598.1 L1292.0,598.2 L1291.7,598.3 L1291.3,598.3 L1290.9,598.3 L1290.6,598.3 L1290.2,598.2 L1289.9,598.1 L1289.4,598.0 L1289.0,597.8 L1288.5,597.7 L1288.1,597.5 L1287.7,597.2 L1287.2,597.0 L1286.8,596.7 L1286.3,596.4 L1285.9,596.0 L1285.3,595.6 L1284.8,595.2 L1284.2,594.8 L1283.6,594.4 L1283.0,593.9 L1282.3,593.3 L1281.6,592.8 L1280.8,592.1 L1280.0,591.5 L1279.1,590.8 L1278.2,590.0 L1277.2,589.2 L1276.2,588.4 L1275.2,587.5 L1274.1,586.6 L1273.0,585.7 L1271.9,584.7 L1270.7,583.7 L1269.4,582.6 L1268.1,581.5 L1266.8,580.4 L1265.4,579.3 L1264.0,578.1 L1262.5,576.8 L1260.9,575.5 L1259.2,574.1 L1257.4,572.7 L1255.5,571.2 L1253.6,569.6 L1251.6,568.0 L1249.6,566.3 L1247.5,564.6 L1245.4,562.8 L1243.2,561.0 L1240.9,559.1 L1238.5,557.1 L1236.1,555.0 L1233.5,552.7 L1230.9,550.4 L1228.1,548.0 L1225.3,545.5 L1222.4,542.8 L1219.4,540.0 L1216.4,537.0 L1213.3,534.0 L1210.1,530.8 L1206.7,527.5 L1203.2,523.7 L1199.4,519.6 L1195.5,515.1 L1191.3,510.3 L1186.9,505.1 L1182.4,499.6 L1177.7,493.8 L1172.9,487.6 L1168.0,481.2 L1163.0,474.3 L1157.8,467.2 L1152.5,459.7 L1147.1,452.0 L1141.6,443.9 L1136.1,435.5 L1130.5,426.7 L1124.8,417.6 L1119.0,408.4 L1113.3,398.9 L1107.7,389.5 L1102.1,379.9 L1096.4,370.1 L1090.8,360.2 L1085.3,350.2 L1080.0,340.4 L1075.0,330.6 L1070.3,321.0 L1065.7,311.3 L1061.3,301.7 L1057.1,292.2 L1053.2,283.0 L1049.5,274.1 L1046.0,265.5 L1042.8,257.1 L1039.8,249.0 L1037.0,241.1 L1034.5,233.6 L1032.2,226.5 L1030.1,219.8 L1028.3,213.4 L1026.7,207.4 L1025.4,201.6 L1024.2,196.2 L1023.2,191.1 L1022.4,186.3 L1021.8,181.8 L1021.3,177.6 L1021.1,173.7 L1021.0,170.0 L1021.0,166.5 L1021.2,163.1 L1021.6,160.0 L1022.1,157.1 L1022.8,154.4 L1023.5,151.9 L1024.4,149.5 L1025.5,147.3 L1026.7,145.3 L1028.0,143.4 L1029.4,141.7 L1031.0,140.2 L1032.6,138.8 L1034.3,137.5 L1036.1,136.4 L1038.0,135.5 L1040.0,134.7 L1042.0,133.9 L1044.1,133.3 L1046.3,132.7 L1048.5,132.3 L1050.8,132.0 L1053.1,131.7 L1055.5,131.5 L1057.8,131.2 L1060.3,131.1 L1062.7,130.9 L1065.2,130.9 L1067.8,130.8 L1070.3,130.8 L1072.8,130.7 L1075.3,130.7 L1077.8,130.7 L1080.4,130.8 L1082.9,130.8 L1085.4,130.9 L1088.0,130.9 L1090.6,131.0 L1093.2,131.1 L1095.8,131.2 L1098.5,131.4 L1101.2,131.5 L1103.9,131.7 L1106.6,131.9 L1109.4,132.0 L1112.2,132.2 L1115.1,132.5 L1118.0,132.7 L1121.0,132.9 L1123.9,133.2 L1127.0,133.4 L1130.0,133.7 L1133.1,134.0 L1136.3,134.3 L1139.5,134.6 L1142.8,134.9 L1146.1,135.2 L1149.5,135.6 L1152.9,135.9 L1156.4,136.3 L1159.9,136.6 L1163.5,137.0 L1167.2,137.4 L1171.0,137.8 L1174.8,138.2 L1178.6,138.6 L1182.6,139.1 L1186.6,139.5 L1190.6,140.0 L1194.7,140.4 L1198.9,140.9 L1203.2,141.4 L1207.6,141.9 L1212.0,142.4 L1216.5,142.9 L1221.1,143.4 L1225.7,143.9 L1230.5,144.4 L1235.3,145.0 L1240.1,145.5 L1245.1,146.1 L1250.1,146.7 L1255.2,147.3 L1260.4,147.9 L1265.7,148.5 L1271.0,149.1 L1276.5,149.7 L1282.0,150.3 L1287.5,151.0 L1293.2,151.6 L1298.9,152.3 L1304.7,153.0 L1310.6,153.6 L1316.5,154.3 L1322.5,155.0 L1328.6,155.7 L1334.7,156.4 L1340.9,157.1 L1347.1,157.8 L1353.4,158.6 L1359.8,159.3 L1366.2,160.0 L1372.6,160.8 L1379.0,161.5 L1385.5,162.2 L1392.0,163.0 L1398.6,163.8 L1405.1,164.5 L1411.5,165.3 L1417.9,166.0 L1424.2,166.7 L1430.5,167.4 L1436.7,168.2 L1443.0,168.9 L1449.2,169.6 L1455.4,170.3 L1461.6,171.0 L1467.8,171.7 L1474.0,172.4 L1480.0,173.1 L1485.9,173.8 L1491.7,174.5 L1497.4,175.1 L1503.0,175.7 L1508.5,176.4 L1513.9,177.0 L1519.2,177.6 L1524.3,178.2 L1529.4,178.8 L1534.4,179.3 L1539.2,179.9 L1544.0,180.5 L1548.6,181.0 L1553.0,181.5 L1557.4,182.0 L1561.6,182.5 L1565.7,183.0 L1569.7,183.4 L1573.6,183.9 L1577.3,184.3 L1581.0,184.7 L1584.5,185.1 L1587.9,185.5 L1591.3,185.9 L1594.5,186.3 L1597.7,186.6 L1600.7,187.0 L1603.7,187.3 L1606.6,187.6 L1609.4,188.0 L1612.2,188.3 L1614.9,188.6 L1617.5,188.9 L1620.1,189.2 L1622.6,189.5 L1625.1,189.8 L1627.5,190.1 L1629.8,190.3 L1632.1,190.6 L1634.3,190.8 L1636.4,191.1 L1638.4,191.3 L1640.4,191.6 L1642.3,191.8 L1644.2,192.0 L1646.0,192.2 L1647.7,192.4 L1649.3,192.6 L1650.9,192.7 L1652.4,192.9 L1653.7,193.1 L1654.9,193.2 L1656.2,193.3 L1657.5,193.5 L1659.0,193.7 L1660.7,193.9 L1662.6,194.1 L1664.5,194.3 L1666.4,194.5 L1668.3,194.7 L1670.1,194.9 L1671.8,195.1 L1673.6,195.4 L1675.3,195.6 L1677.0,195.7 L1678.4,195.9 L1679.7,196.1 L1680.7,196.2 L1681.5,196.3 L1682.2,196.3 L1682.7,196.4 L1683.1,196.4 L1683.4,196.5 Z" fill="none" stroke="#000" stroke-opacity="0.3" stroke-width="1.2"/></g><rect x="1492.4" y="175.2" width="14.2" height="14.2" fill="none" stroke="#f2f2f2" stroke-opacity="0.95" stroke-width="1.5"/><rect x="1145.5" y="142.7" width="14.2" height="14.2" fill="none" stroke="#f2f2f2" stroke-opacity="0.95" stroke-width="1.5"/><rect x="1199.2" y="474.1" width="14.2" height="14.2" fill="none" stroke="#f2f2f2" stroke-opacity="0.95" stroke-width="1.5"/><rect x="1159.7" y="230.4" width="14.2" height="14.2" fill="none" stroke="#f2f2f2" stroke-opacity="0.95" stroke-width="1.5"/><rect x="1337.2" y="333.3" width="14.2" height="14.2" fill="none" stroke="#f2f2f2" stroke-opacity="0.95" stroke-width="1.5"/><rect x="1229.6" y="150.6" width="14.2" height="14.2" fill="none" stroke="#f2f2f2" stroke-opacity="0.95" stroke-width="1.5"/><circle cx="1502.1" cy="179.4" r="4.3" fill="#c01010" stroke="#111" stroke-width="1.2"/><circle cx="1151.9" cy="147.5" r="4.3" fill="#10b010" stroke="#111" stroke-width="1.2"/><circle cx="1203.4" cy="487.6" r="4.3" fill="#1010c0" stroke="#111" stroke-width="1.2"/><circle cx="1166.2" cy="236.5" r="4.3" fill="#10b4b4" stroke="#111" stroke-width="1.2"/><circle cx="1342.2" cy="339.8" r="4.3" fill="#b010b0" stroke="#111" stroke-width="1.2"/><circle cx="1235.4" cy="156.0" r="4.3" fill="#c0b010" stroke="#111" stroke-width="1.2"/><rect x="1222.8" y="219.7" width="13.4" height="13.4" fill="none" stroke="#000" stroke-width="1.9"/><circle cx="1228.4" cy="226.7" r="4.6" fill="#ffffff" stroke="#111" stroke-width="1.3"/>
<rect x="1019.5" y="119.5" width="639.8" height="491.79999999999995" fill="none" stroke="#a0a0a0" stroke-width="1.5"/>
<line x1="1013.5" y1="611.3" x2="1019.5" y2="611.3" stroke="#d8d8d8" stroke-width="1.5"/>
<text x="1013.4" y="616.7" font-size="14" fill="#d2d2d2" text-anchor="end">0</text>
<line x1="1013.5" y1="570.3499999999999" x2="1019.5" y2="570.3499999999999" stroke="#d8d8d8" stroke-width="1.5"/>
<text x="1013.4" y="575.7" font-size="14" fill="#d2d2d2" text-anchor="end">0,05</text>
<line x1="1013.5" y1="529.4" x2="1019.5" y2="529.4" stroke="#d8d8d8" stroke-width="1.5"/>
<text x="1013.4" y="534.8" font-size="14" fill="#d2d2d2" text-anchor="end">0,1</text>
<line x1="1013.5" y1="488.44999999999993" x2="1019.5" y2="488.44999999999993" stroke="#d8d8d8" stroke-width="1.5"/>
<text x="1013.4" y="493.8" font-size="14" fill="#d2d2d2" text-anchor="end">0,15</text>
<line x1="1013.5" y1="447.49999999999994" x2="1019.5" y2="447.49999999999994" stroke="#d8d8d8" stroke-width="1.5"/>
<text x="1013.4" y="452.9" font-size="14" fill="#d2d2d2" text-anchor="end">0,2</text>
<line x1="1013.5" y1="406.54999999999995" x2="1019.5" y2="406.54999999999995" stroke="#d8d8d8" stroke-width="1.5"/>
<text x="1013.4" y="411.9" font-size="14" fill="#d2d2d2" text-anchor="end">0,25</text>
<line x1="1013.5" y1="365.5999999999999" x2="1019.5" y2="365.5999999999999" stroke="#d8d8d8" stroke-width="1.5"/>
<text x="1013.4" y="371.0" font-size="14" fill="#d2d2d2" text-anchor="end">0,3</text>
<line x1="1013.5" y1="324.6499999999999" x2="1019.5" y2="324.6499999999999" stroke="#d8d8d8" stroke-width="1.5"/>
<text x="1013.4" y="330.0" font-size="14" fill="#d2d2d2" text-anchor="end">0,35</text>
<line x1="1013.5" y1="283.69999999999993" x2="1019.5" y2="283.69999999999993" stroke="#d8d8d8" stroke-width="1.5"/>
<text x="1013.4" y="289.1" font-size="14" fill="#d2d2d2" text-anchor="end">0,4</text>
<line x1="1013.5" y1="242.74999999999994" x2="1019.5" y2="242.74999999999994" stroke="#d8d8d8" stroke-width="1.5"/>
<text x="1013.4" y="248.1" font-size="14" fill="#d2d2d2" text-anchor="end">0,45</text>
<line x1="1013.5" y1="201.79999999999995" x2="1019.5" y2="201.79999999999995" stroke="#d8d8d8" stroke-width="1.5"/>
<text x="1013.4" y="207.2" font-size="14" fill="#d2d2d2" text-anchor="end">0,5</text>
<line x1="1013.5" y1="160.8499999999999" x2="1019.5" y2="160.8499999999999" stroke="#d8d8d8" stroke-width="1.5"/>
<text x="1013.4" y="166.2" font-size="14" fill="#d2d2d2" text-anchor="end">0,55</text>
<line x1="1019.5" y1="611.3" x2="1019.5" y2="617" stroke="#d8d8d8" stroke-width="1.5"/>
<text x="1019.5" y="632.8" font-size="14" fill="#d2d2d2" text-anchor="middle">0</text>
<line x1="1072.75" y1="611.3" x2="1072.75" y2="617" stroke="#d8d8d8" stroke-width="1.5"/>
<text x="1072.8" y="632.8" font-size="14" fill="#d2d2d2" text-anchor="middle">0,05</text>
<line x1="1126.0" y1="611.3" x2="1126.0" y2="617" stroke="#d8d8d8" stroke-width="1.5"/>
<text x="1126.0" y="632.8" font-size="14" fill="#d2d2d2" text-anchor="middle">0,1</text>
<line x1="1179.25" y1="611.3" x2="1179.25" y2="617" stroke="#d8d8d8" stroke-width="1.5"/>
<text x="1179.2" y="632.8" font-size="14" fill="#d2d2d2" text-anchor="middle">0,15</text>
<line x1="1232.5" y1="611.3" x2="1232.5" y2="617" stroke="#d8d8d8" stroke-width="1.5"/>
<text x="1232.5" y="632.8" font-size="14" fill="#d2d2d2" text-anchor="middle">0,2</text>
<line x1="1285.75" y1="611.3" x2="1285.75" y2="617" stroke="#d8d8d8" stroke-width="1.5"/>
<text x="1285.8" y="632.8" font-size="14" fill="#d2d2d2" text-anchor="middle">0,25</text>
<line x1="1339.0" y1="611.3" x2="1339.0" y2="617" stroke="#d8d8d8" stroke-width="1.5"/>
<text x="1339.0" y="632.8" font-size="14" fill="#d2d2d2" text-anchor="middle">0,3</text>
<line x1="1392.25" y1="611.3" x2="1392.25" y2="617" stroke="#d8d8d8" stroke-width="1.5"/>
<text x="1392.2" y="632.8" font-size="14" fill="#d2d2d2" text-anchor="middle">0,35</text>
<line x1="1445.5" y1="611.3" x2="1445.5" y2="617" stroke="#d8d8d8" stroke-width="1.5"/>
<text x="1445.5" y="632.8" font-size="14" fill="#d2d2d2" text-anchor="middle">0,4</text>
<line x1="1498.75" y1="611.3" x2="1498.75" y2="617" stroke="#d8d8d8" stroke-width="1.5"/>
<text x="1498.8" y="632.8" font-size="14" fill="#d2d2d2" text-anchor="middle">0,45</text>
<line x1="1552.0" y1="611.3" x2="1552.0" y2="617" stroke="#d8d8d8" stroke-width="1.5"/>
<text x="1552.0" y="632.8" font-size="14" fill="#d2d2d2" text-anchor="middle">0,5</text>
<line x1="1605.25" y1="611.3" x2="1605.25" y2="617" stroke="#d8d8d8" stroke-width="1.5"/>
<text x="1605.2" y="632.8" font-size="14" fill="#d2d2d2" text-anchor="middle">0,55</text>
<rect x="1404.2" y="579.1" width="251.6" height="27.4" fill="#333333"/>
<text x="1405" y="600.7" font-size="18.5" fill="#f4f4f4" textLength="220.6" lengthAdjust="spacingAndGlyphs">Gamut Coverage:  99,9%</text>
<text x="15" y="712" font-size="28" fill="#f2f2f2" textLength="221.5" lengthAdjust="spacingAndGlyphs">Current Reading</text>
<text x="15" y="782.2" font-size="24" fill="#f2f2f2" textLength="104" lengthAdjust="spacingAndGlyphs">x: 0,3103</text>
<text x="172.7" y="782.2" font-size="24" fill="#f2f2f2" textLength="102.6" lengthAdjust="spacingAndGlyphs">y: 0,3304</text>
<text x="16" y="822.7" font-size="24" fill="#f2f2f2" textLength="112" lengthAdjust="spacingAndGlyphs">fL: 140,25</text>
<text x="16" y="863.7" font-size="24" fill="#f2f2f2" textLength="161" lengthAdjust="spacingAndGlyphs">cd/m²: 480,54</text>
<text x="468.3" y="681" font-size="14" fill="#cccccc" text-anchor="middle">RGB Balance</text>
<rect x="358.4" y="685.5" width="249.70000000000005" height="180.20000000000005" fill="#232323"/>
<line x1="358.4" y1="704.2" x2="608.1" y2="704.2" stroke="#8c8c8c" stroke-width="1.3"/>
<line x1="352.4" y1="704.2" x2="358.4" y2="704.2" stroke="#d8d8d8" stroke-width="1.5"/>
<text x="351" y="709.2" font-size="14" fill="#d2d2d2" text-anchor="end">104</text>
<line x1="358.4" y1="740.9" x2="608.1" y2="740.9" stroke="#8c8c8c" stroke-width="1.3"/>
<line x1="352.4" y1="740.9" x2="358.4" y2="740.9" stroke="#d8d8d8" stroke-width="1.5"/>
<text x="351" y="745.9" font-size="14" fill="#d2d2d2" text-anchor="end">102</text>
<line x1="358.4" y1="776.8" x2="608.1" y2="776.8" stroke="#8c8c8c" stroke-width="1.3"/>
<line x1="352.4" y1="776.8" x2="358.4" y2="776.8" stroke="#d8d8d8" stroke-width="1.5"/>
<text x="351" y="781.8" font-size="14" fill="#d2d2d2" text-anchor="end">100</text>
<line x1="358.4" y1="813" x2="608.1" y2="813" stroke="#8c8c8c" stroke-width="1.3"/>
<line x1="352.4" y1="813" x2="358.4" y2="813" stroke="#d8d8d8" stroke-width="1.5"/>
<text x="351" y="818" font-size="14" fill="#d2d2d2" text-anchor="end">98</text>
<line x1="358.4" y1="848.9" x2="608.1" y2="848.9" stroke="#8c8c8c" stroke-width="1.3"/>
<line x1="352.4" y1="848.9" x2="358.4" y2="848.9" stroke="#d8d8d8" stroke-width="1.5"/>
<text x="351" y="853.9" font-size="14" fill="#d2d2d2" text-anchor="end">96</text>
<rect x="358.4" y="685.5" width="249.70000000000005" height="180.20000000000005" fill="none" stroke="#9c9c9c" stroke-width="1.5"/>
<line x1="358.4" y1="865.7" x2="358.4" y2="870.7" stroke="#d8d8d8" stroke-width="1.5"/>
<line x1="608.1" y1="865.7" x2="608.1" y2="870.7" stroke="#d8d8d8" stroke-width="1.5"/>
<rect x="382.8" y="801.6" width="65.6" height="64.1" fill="url(#rb)" stroke="#000" stroke-width="1.6"/>
<rect x="448.4" y="768.5" width="66.6" height="97.2" fill="url(#gb)" stroke="#000" stroke-width="1.6"/>
<rect x="516.2" y="778.4" width="65.4" height="87.3" fill="url(#bb2)" stroke="#000" stroke-width="1.6"/>
<text x="483" y="882.3" font-size="14" fill="#d2d2d2" text-anchor="middle">100W</text>
<text x="808.4" y="671" font-size="14" fill="#cccccc" text-anchor="middle">CIE 1931 xy</text>
<g clip-path="url(#xyclip)"><g filter="url(#vblur)"><rect x="632" y="671" width="354" height="5.6" fill="url(#xg0)"/><rect x="632" y="676" width="354" height="5.6" fill="url(#xg1)"/><rect x="632" y="681" width="354" height="5.6" fill="url(#xg2)"/><rect x="632" y="686" width="354" height="5.6" fill="url(#xg3)"/><rect x="632" y="691" width="354" height="5.6" fill="url(#xg4)"/><rect x="632" y="696" width="354" height="5.6" fill="url(#xg5)"/><rect x="632" y="701" width="354" height="5.6" fill="url(#xg6)"/><rect x="632" y="706" width="354" height="5.6" fill="url(#xg7)"/><rect x="632" y="711" width="354" height="5.6" fill="url(#xg8)"/><rect x="632" y="716" width="354" height="5.6" fill="url(#xg9)"/><rect x="632" y="721" width="354" height="5.6" fill="url(#xg10)"/><rect x="632" y="726" width="354" height="5.6" fill="url(#xg11)"/><rect x="632" y="731" width="354" height="5.6" fill="url(#xg12)"/><rect x="632" y="736" width="354" height="5.6" fill="url(#xg13)"/><rect x="632" y="741" width="354" height="5.6" fill="url(#xg14)"/><rect x="632" y="746" width="354" height="5.6" fill="url(#xg15)"/><rect x="632" y="751" width="354" height="5.6" fill="url(#xg16)"/><rect x="632" y="756" width="354" height="5.6" fill="url(#xg17)"/><rect x="632" y="761" width="354" height="5.6" fill="url(#xg18)"/><rect x="632" y="766" width="354" height="5.6" fill="url(#xg19)"/><rect x="632" y="771" width="354" height="5.6" fill="url(#xg20)"/><rect x="632" y="776" width="354" height="5.6" fill="url(#xg21)"/><rect x="632" y="781" width="354" height="5.6" fill="url(#xg22)"/><rect x="632" y="786" width="354" height="5.6" fill="url(#xg23)"/><rect x="632" y="791" width="354" height="5.6" fill="url(#xg24)"/><rect x="632" y="796" width="354" height="5.6" fill="url(#xg25)"/><rect x="632" y="801" width="354" height="5.6" fill="url(#xg26)"/><rect x="632" y="806" width="354" height="5.6" fill="url(#xg27)"/><rect x="632" y="811" width="354" height="5.6" fill="url(#xg28)"/><rect x="632" y="816" width="354" height="5.6" fill="url(#xg29)"/><rect x="632" y="821" width="354" height="5.6" fill="url(#xg30)"/><rect x="632" y="826" width="354" height="5.6" fill="url(#xg31)"/><rect x="632" y="831" width="354" height="5.6" fill="url(#xg32)"/><rect x="632" y="836" width="354" height="5.6" fill="url(#xg33)"/><rect x="632" y="841" width="354" height="5.6" fill="url(#xg34)"/><rect x="632" y="846" width="354" height="5.6" fill="url(#xg35)"/><rect x="632" y="851" width="354" height="5.6" fill="url(#xg36)"/><rect x="632" y="856" width="354" height="5.6" fill="url(#xg37)"/><rect x="632" y="861" width="354" height="5.6" fill="url(#xg38)"/><rect x="632" y="866" width="354" height="5.6" fill="url(#xg39)"/><rect x="632" y="871" width="354" height="5.6" fill="url(#xg40)"/><rect x="632" y="876" width="354" height="5.6" fill="url(#xg41)"/><rect x="632" y="881" width="354" height="1.6" fill="url(#xg42)"/></g></g><rect x="637.5" y="676.5" width="343.0" height="200.0" fill="none" stroke="#1e1e1e" stroke-width="1"/><rect x="638.6" y="677.6" width="340.8" height="197.8" fill="none" stroke="#a4a4a4" stroke-opacity="0.85" stroke-width="1.3"/><circle cx="792.7" cy="770" r="4.6" fill="#ffffff" stroke="#111" stroke-width="1.2"/><circle cx="798.2" cy="775.5" r="4.6" fill="#bdbdbd" stroke="#111" stroke-width="1.2"/><rect x="801.6" y="769.4" width="13" height="12.6" fill="none" stroke="#000" stroke-width="2"/>
<rect x="996.2" y="661.2" width="634.5" height="34.8" fill="url(#hdrg)"/><g clip-path="url(#tclip)"><text x="1129.2" y="686" font-size="16" fill="#f0f0f0" text-anchor="middle">White</text><text x="1202" y="686" font-size="16" fill="#f0f0f0" text-anchor="middle">Red</text><text x="1275" y="686" font-size="16" fill="#f0f0f0" text-anchor="middle">Green</text><text x="1348.6" y="686" font-size="16" fill="#f0f0f0" text-anchor="middle">Blue</text><text x="1421.2" y="686" font-size="16" fill="#f0f0f0" text-anchor="middle">Cyan</text><text x="1496" y="686" font-size="16" fill="#f0f0f0" text-anchor="middle">Magenta</text><text x="1570.6" y="686" font-size="16" fill="#f0f0f0" text-anchor="middle">Yellow</text><text x="1649" y="686" font-size="16" fill="#f0f0f0" text-anchor="middle">100W</text><rect x="996.2" y="696" width="634.5" height="31" fill="#3c3c3c"/><text x="1010.6" y="718.3" font-size="16.5" font-weight="bold" fill="#f4f4f4">x: CIE31</text><text x="1094.4" y="718.3" font-size="16.5" fill="#f0f0f0" textLength="50.2" lengthAdjust="spacingAndGlyphs">0,3113</text><text x="1172.7" y="718.3" font-size="16.5" fill="#f0f0f0" textLength="50.2" lengthAdjust="spacingAndGlyphs">0,6460</text><text x="1241" y="718.3" font-size="16.5" fill="#f0f0f0" textLength="50.2" lengthAdjust="spacingAndGlyphs">0,3010</text><text x="1318" y="718.3" font-size="16.5" fill="#f0f0f0" textLength="50.2" lengthAdjust="spacingAndGlyphs">0,1459</text><text x="1387.1" y="718.3" font-size="16.5" fill="#f0f0f0" textLength="50.2" lengthAdjust="spacingAndGlyphs">0,2240</text><text x="1464.7" y="718.3" font-size="16.5" fill="#f0f0f0" textLength="50.2" lengthAdjust="spacingAndGlyphs">0,3192</text><text x="1536.3" y="718.3" font-size="16.5" fill="#f0f0f0" textLength="50.2" lengthAdjust="spacingAndGlyphs">0,4193</text><text x="1614" y="718.3" font-size="16.5" fill="#f0f0f0" textLength="50.2" lengthAdjust="spacingAndGlyphs">0,3103</text><rect x="996.2" y="727" width="634.5" height="31" fill="#7c7c7c"/><text x="1010.6" y="749.3" font-size="16.5" font-weight="bold" fill="#f4f4f4">y: CIE31</text><text x="1094.4" y="749.3" font-size="16.5" fill="#f0f0f0" textLength="50.2" lengthAdjust="spacingAndGlyphs">0,3290</text><text x="1172.7" y="749.3" font-size="16.5" fill="#f0f0f0" textLength="50.2" lengthAdjust="spacingAndGlyphs">0,3329</text><text x="1241" y="749.3" font-size="16.5" fill="#f0f0f0" textLength="50.2" lengthAdjust="spacingAndGlyphs">0,6073</text><text x="1318" y="749.3" font-size="16.5" fill="#f0f0f0" textLength="50.2" lengthAdjust="spacingAndGlyphs">0,0560</text><text x="1387.1" y="749.3" font-size="16.5" fill="#f0f0f0" textLength="50.2" lengthAdjust="spacingAndGlyphs">0,3293</text><text x="1464.7" y="749.3" font-size="16.5" fill="#f0f0f0" textLength="50.2" lengthAdjust="spacingAndGlyphs">0,1543</text><text x="1536.3" y="749.3" font-size="16.5" fill="#f0f0f0" textLength="50.2" lengthAdjust="spacingAndGlyphs">0,5092</text><text x="1614" y="749.3" font-size="16.5" fill="#f0f0f0" textLength="50.2" lengthAdjust="spacingAndGlyphs">0,3304</text><rect x="996.2" y="758" width="634.5" height="31" fill="#3c3c3c"/><text x="1010.6" y="780.3" font-size="16.5" font-weight="bold" fill="#f4f4f4">Y</text><text x="1094.4" y="780.3" font-size="16.5" fill="#f0f0f0" textLength="68.3" lengthAdjust="spacingAndGlyphs">249,3452</text><text x="1172.7" y="780.3" font-size="16.5" fill="#f0f0f0" textLength="58.3" lengthAdjust="spacingAndGlyphs">52,0013</text><text x="1241" y="780.3" font-size="16.5" fill="#f0f0f0" textLength="68.3" lengthAdjust="spacingAndGlyphs">177,7374</text><text x="1318" y="780.3" font-size="16.5" fill="#f0f0f0" textLength="58.3" lengthAdjust="spacingAndGlyphs">16,5026</text><text x="1387.1" y="780.3" font-size="16.5" fill="#f0f0f0" textLength="68.3" lengthAdjust="spacingAndGlyphs">195,5626</text><text x="1464.7" y="780.3" font-size="16.5" fill="#f0f0f0" textLength="58.3" lengthAdjust="spacingAndGlyphs">70,9278</text><text x="1536.3" y="780.3" font-size="16.5" fill="#f0f0f0" textLength="68.3" lengthAdjust="spacingAndGlyphs">231,4090</text><text x="1614" y="780.3" font-size="16.5" fill="#f0f0f0" textLength="68.3" lengthAdjust="spacingAndGlyphs">480,5400</text><rect x="996.2" y="789" width="634.5" height="31" fill="#7c7c7c"/><text x="1010.6" y="811.3" font-size="16.5" font-weight="bold" fill="#f4f4f4">Target Y</text><text x="1094.4" y="811.3" font-size="16.5" fill="#f0f0f0" textLength="68.3" lengthAdjust="spacingAndGlyphs">250,3600</text><text x="1172.7" y="811.3" font-size="16.5" fill="#f0f0f0" textLength="58.3" lengthAdjust="spacingAndGlyphs">53,2406</text><text x="1241" y="811.3" font-size="16.5" fill="#f0f0f0" textLength="68.3" lengthAdjust="spacingAndGlyphs">179,0471</text><text x="1318" y="811.3" font-size="16.5" fill="#f0f0f0" textLength="58.3" lengthAdjust="spacingAndGlyphs">18,0724</text><text x="1387.1" y="811.3" font-size="16.5" fill="#f0f0f0" textLength="68.3" lengthAdjust="spacingAndGlyphs">197,1195</text><text x="1464.7" y="811.3" font-size="16.5" fill="#f0f0f0" textLength="58.3" lengthAdjust="spacingAndGlyphs">71,3129</text><text x="1536.3" y="811.3" font-size="16.5" fill="#f0f0f0" textLength="68.3" lengthAdjust="spacingAndGlyphs">232,2877</text><text x="1614" y="811.3" font-size="16.5" fill="#f0f0f0" textLength="68.3" lengthAdjust="spacingAndGlyphs">480,5400</text><rect x="996.2" y="820" width="634.5" height="31" fill="#3c3c3c"/><text x="1010.6" y="842.3" font-size="16.5" font-weight="bold" fill="#f4f4f4">ΔE 2000</text><text x="1094.4" y="842.3" font-size="16.5" fill="#f0f0f0" textLength="50.2" lengthAdjust="spacingAndGlyphs">0,9327</text><text x="1172.7" y="842.3" font-size="16.5" fill="#f0f0f0" textLength="50.2" lengthAdjust="spacingAndGlyphs">1,7769</text><text x="1241" y="842.3" font-size="16.5" fill="#f0f0f0" textLength="50.2" lengthAdjust="spacingAndGlyphs">0,5803</text><text x="1318" y="842.3" font-size="16.5" fill="#f0f0f0" textLength="50.2" lengthAdjust="spacingAndGlyphs">0,8757</text><text x="1387.1" y="842.3" font-size="16.5" fill="#f0f0f0" textLength="50.2" lengthAdjust="spacingAndGlyphs">0,2614</text><text x="1464.7" y="842.3" font-size="16.5" fill="#f0f0f0" textLength="50.2" lengthAdjust="spacingAndGlyphs">0,2355</text><text x="1536.3" y="842.3" font-size="16.5" fill="#f0f0f0" textLength="50.2" lengthAdjust="spacingAndGlyphs">0,4921</text><text x="1614" y="842.3" font-size="16.5" fill="#f0f0f0" textLength="50.2" lengthAdjust="spacingAndGlyphs">2,7310</text><rect x="996.2" y="851" width="634.5" height="31" fill="#7c7c7c"/><text x="1010.6" y="873.3" font-size="16.5" font-weight="bold" fill="#f4f4f4">ΔE ITP</text><text x="1094.4" y="873.3" font-size="16.5" fill="#f0f0f0" textLength="50.2" lengthAdjust="spacingAndGlyphs">1,0287</text><text x="1172.7" y="873.3" font-size="16.5" fill="#f0f0f0" textLength="50.2" lengthAdjust="spacingAndGlyphs">7,0203</text><text x="1241" y="873.3" font-size="16.5" fill="#f0f0f0" textLength="50.2" lengthAdjust="spacingAndGlyphs">3,5748</text><text x="1318" y="873.3" font-size="16.5" fill="#f0f0f0" textLength="58.3" lengthAdjust="spacingAndGlyphs">11,1826</text><text x="1387.1" y="873.3" font-size="16.5" fill="#f0f0f0" textLength="50.2" lengthAdjust="spacingAndGlyphs">0,8134</text><text x="1464.7" y="873.3" font-size="16.5" fill="#f0f0f0" textLength="50.2" lengthAdjust="spacingAndGlyphs">2,1527</text><text x="1536.3" y="873.3" font-size="16.5" fill="#f0f0f0" textLength="50.2" lengthAdjust="spacingAndGlyphs">2,4363</text><text x="1614" y="873.3" font-size="16.5" fill="#f0f0f0" textLength="50.2" lengthAdjust="spacingAndGlyphs">2,1000</text></g><rect x="1630.7" y="661" width="18" height="35" fill="#262626"/><rect x="1631" y="696" width="17" height="170" rx="3" fill="#5e5e5e"/><rect x="1632.6" y="698.2" width="13.4" height="15.6" rx="3" fill="#686868" stroke="#7a7a7a" stroke-width="1"/><path d="M1634.6,708.8 L1644,708.8 L1639.3,703.5 Z" fill="#3e3e3e"/><rect x="1633" y="718" width="13" height="105" rx="6.5" fill="#484848"/><rect x="1632.6" y="848.4" width="13.4" height="15.6" rx="3" fill="#686868" stroke="#7a7a7a" stroke-width="1"/><path d="M1634.6,853.2 L1644,853.2 L1639.3,858.5 Z" fill="#3e3e3e"/><rect x="1631" y="866" width="17" height="20" fill="#353535"/><rect x="996.8" y="866" width="634.2" height="19.8" fill="#5e5e5e"/><rect x="999.2" y="868.4" width="13.4" height="15.4" rx="3" fill="#686868" stroke="#7a7a7a" stroke-width="1"/><path d="M1003.2,876 L1009.2,871 L1009.2,881 Z" fill="#3e3e3e"/><rect x="1017.4" y="867.8" width="545" height="16.4" rx="8" fill="#4a4a4a"/><rect x="1615.4" y="868.4" width="13.4" height="15.4" rx="3" fill="#686868" stroke="#7a7a7a" stroke-width="1"/><path d="M1625.2,876 L1619.2,871 L1619.2,881 Z" fill="#3e3e3e"/><rect x="996" y="660.6" width="653" height="1.4" fill="#0a0a0a"/><rect x="995.8" y="660.6" width="1.3" height="225.4" fill="#0a0a0a"/><rect x="1647.9" y="660.6" width="1.3" height="225.4" fill="#0a0a0a"/>
<rect x="2.2" y="929.7" width="155.6" height="75.5" rx="4.5" fill="url(#tbg)"/><rect x="8.7" y="936" width="143" height="45.2" rx="4" fill="#c3c3c3"/><rect x="9.2" y="936.5" width="142" height="44.2" rx="3.6" fill="none" stroke="#000" stroke-opacity="0.22" stroke-width="1.2"/><text x="80.2" y="999.5" font-size="13.5" font-weight="bold" fill="#262626" text-anchor="middle">White</text><rect x="160.2" y="929.7" width="155.6" height="75.5" rx="4.5" fill="url(#tbg)"/><rect x="166.7" y="936" width="143" height="45.2" rx="4" fill="#c00000"/><rect x="167.2" y="936.5" width="142" height="44.2" rx="3.6" fill="none" stroke="#000" stroke-opacity="0.22" stroke-width="1.2"/><text x="238.2" y="999.5" font-size="13.5" font-weight="bold" fill="#262626" text-anchor="middle">Red</text><rect x="318" y="929.7" width="155.6" height="75.5" rx="4.5" fill="url(#tbg)"/><rect x="324.5" y="936" width="143" height="45.2" rx="4" fill="#00c000"/><rect x="325" y="936.5" width="142" height="44.2" rx="3.6" fill="none" stroke="#000" stroke-opacity="0.22" stroke-width="1.2"/><text x="396" y="999.5" font-size="13.5" font-weight="bold" fill="#262626" text-anchor="middle">Green</text><rect x="476" y="929.7" width="155.6" height="75.5" rx="4.5" fill="url(#tbg)"/><rect x="482.5" y="936" width="143" height="45.2" rx="4" fill="#0000c0"/><rect x="483" y="936.5" width="142" height="44.2" rx="3.6" fill="none" stroke="#000" stroke-opacity="0.22" stroke-width="1.2"/><text x="554" y="999.5" font-size="13.5" font-weight="bold" fill="#262626" text-anchor="middle">Blue</text><rect x="633.8" y="929.7" width="155.6" height="75.5" rx="4.5" fill="url(#tbg)"/><rect x="640.3" y="936" width="143" height="45.2" rx="4" fill="#00c0c0"/><rect x="640.8" y="936.5" width="142" height="44.2" rx="3.6" fill="none" stroke="#000" stroke-opacity="0.22" stroke-width="1.2"/><text x="711.8" y="999.5" font-size="13.5" font-weight="bold" fill="#262626" text-anchor="middle">Cyan</text><rect x="791.7" y="929.7" width="155.6" height="75.5" rx="4.5" fill="url(#tbg)"/><rect x="798.2" y="936" width="143" height="45.2" rx="4" fill="#c000c0"/><rect x="798.7" y="936.5" width="142" height="44.2" rx="3.6" fill="none" stroke="#000" stroke-opacity="0.22" stroke-width="1.2"/><text x="869.7" y="999.5" font-size="13.5" font-weight="bold" fill="#262626" text-anchor="middle">Magenta</text><rect x="950" y="929.7" width="155.6" height="75.5" rx="4.5" fill="url(#tbg)"/><rect x="956.5" y="936" width="143" height="45.2" rx="4" fill="#c0c000"/><rect x="957" y="936.5" width="142" height="44.2" rx="3.6" fill="none" stroke="#000" stroke-opacity="0.22" stroke-width="1.2"/><text x="1028" y="999.5" font-size="13.5" font-weight="bold" fill="#262626" text-anchor="middle">Yellow</text><rect x="1107.9" y="929.7" width="155.6" height="75.5" rx="4.5" fill="url(#tbsel)"/><rect x="1114.4" y="936" width="143" height="45.2" rx="4" fill="#ffffff"/><text x="1185.9" y="999.5" font-size="13.5" font-weight="bold" fill="#ffffff" text-anchor="middle">100W</text><rect x="1267.4" y="929.3" width="59.6" height="90" rx="4.5" fill="url(#tbg)"/><rect x="1267.4" y="951.3" width="59.6" height="1.4" fill="#333"/><circle cx="1297.6" cy="940.8" r="9.5" fill="url(#icg)"/><path d="M1291.5,944 L1303.7,944 L1297.6,937.8 Z" fill="#262626"/><rect x="1278.5" y="961" width="37" height="37" rx="6" fill="#8c8c8c" stroke="#202020" stroke-width="3"/><rect x="1289" y="971" width="17.2" height="16.8" fill="#000"/><rect x="1327.7" y="929.2" width="58.0" height="37.7" fill="url(#tbg)"/><circle cx="1357.3" cy="948.2" r="12" fill="url(#icg)"/><rect x="1387" y="929.2" width="54.0" height="37.7" fill="url(#tbg)"/><circle cx="1414.7" cy="948.2" r="12" fill="url(#icg)"/><rect x="1442.3" y="929.2" width="56.1" height="37.7" fill="url(#tbd)"/><circle cx="1471.0" cy="948.2" r="12" fill="url(#icg2)"/><rect x="1499.7" y="929.2" width="54.3" height="37.7" fill="url(#tbg)"/><circle cx="1527.5" cy="948.2" r="12" fill="url(#icg)"/><rect x="1555.3" y="929.2" width="54.2" height="37.7" fill="url(#tbg)"/><circle cx="1583.0" cy="948.2" r="12" fill="url(#icg)"/><rect x="1352.5" y="943.5" width="9.8" height="9.5" fill="#222"/><path d="M1411.3,942 L1421.5,948.5 L1411.3,955 Z" fill="#222"/><path d="M1465.5,942 L1464,942 L1464,955 L1465.5,955 M1475,942 L1476.5,942 L1476.5,955 L1475,955" fill="none" stroke="#262626" stroke-width="2"/><circle cx="1468.3" cy="948.5" r="0.9" fill="#262626"/><circle cx="1472.3" cy="948.5" r="0.9" fill="#262626"/><path d="M1527.5,948.5 C1524,944 1519,944.5 1519,948.5 C1519,952.5 1524,953 1527.5,948.5 C1531,944 1536,944.5 1536,948.5 C1536,952.5 1531,953 1527.5,948.5 Z" fill="none" stroke="#262626" stroke-width="2"/><path d="M1577.3,946.5 A6.5,6.5 0 0 1 1588.5,944.5 M1590.3,950.5 A6.5,6.5 0 0 1 1579,952.5" fill="none" stroke="#262626" stroke-width="2.2"/><path d="M1586,941.5 L1590.5,941.5 L1590.5,946.5 Z M1581.5,955.5 L1577,955.5 L1577,950.5 Z" fill="#262626"/><rect x="1327.7" y="968.3" width="168.8" height="45" rx="4" fill="url(#tbg)"/><rect x="1499.7" y="968.5" width="180" height="45" rx="4" fill="url(#tbg)"/><circle cx="1367" cy="986.8" r="12" fill="url(#icg)"/><circle cx="1633.3" cy="987.1" r="12" fill="url(#icg)"/><path d="M1365.5,981 L1361,986.8 L1365.5,992.6 M1370.5,981 L1366,986.8 L1370.5,992.6" fill="none" stroke="#262626" stroke-width="1.8"/><path d="M1630,981.3 L1634.5,987.1 L1630,992.9 M1635,981.3 L1639.5,987.1 L1635,992.9" fill="none" stroke="#262626" stroke-width="1.8"/><text x="1401" y="996.7" font-size="26" font-weight="bold" fill="#2c2c2c" textLength="62.5" lengthAdjust="spacingAndGlyphs">Back</text><text x="1534.6" y="997" font-size="26" font-weight="bold" fill="#2c2c2c" textLength="64" lengthAdjust="spacingAndGlyphs">Next</text><path d="M1638.6,933.4 L1638.6,959.8 M1650.0,940.0 L1627.2,953.2 M1650.0,953.2 L1627.2,940.0 " stroke="#000" stroke-opacity="0.55" stroke-width="7.6" stroke-linecap="round" transform="translate(1.4,1.8)" filter="url(#ashadow)"/><path d="M1638.6,933.4 L1638.6,959.8 M1650.0,940.0 L1627.2,953.2 M1650.0,953.2 L1627.2,940.0 " stroke="#e30d0d" stroke-width="7.4" stroke-linecap="round"/><rect x="1662" y="0" width="8" height="1006" fill="url(#rsh)"/>
</svg></body></html>
